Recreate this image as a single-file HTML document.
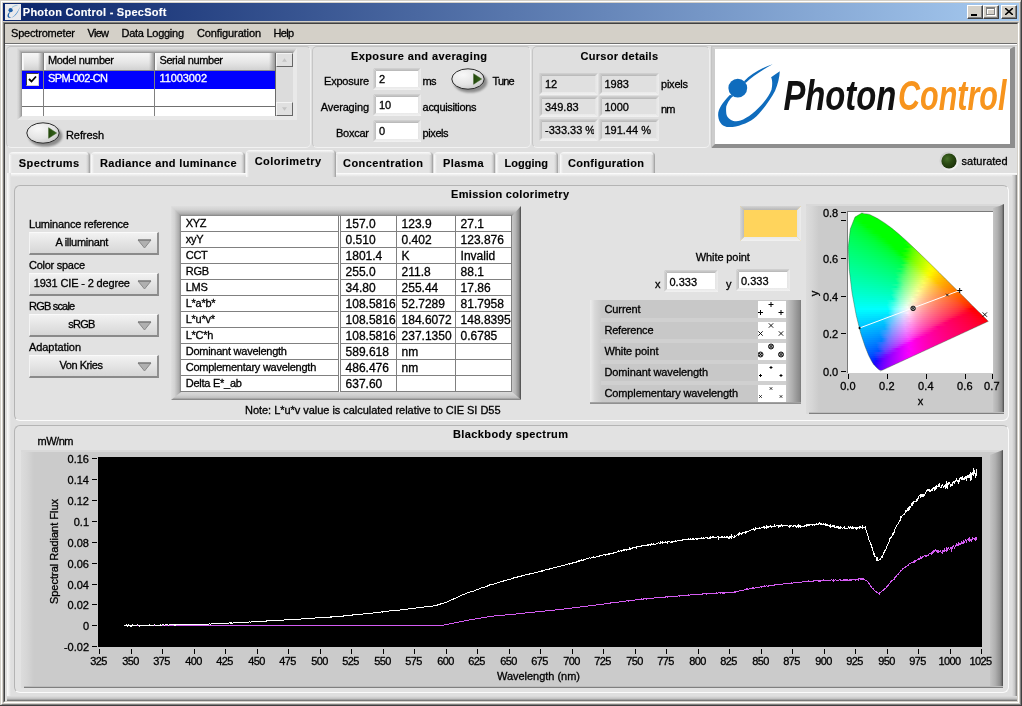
<!DOCTYPE html>
<html><head><meta charset="utf-8"><title>Photon Control - SpecSoft</title>
<style>
html,body{margin:0;padding:0;}
body{width:1022px;height:706px;overflow:hidden;background:#d4d0c8;position:relative;font-family:"Liberation Sans",sans-serif;font-size:11px;}
div,span.t,svg{position:absolute;box-sizing:border-box;}
span.t{white-space:nowrap;line-height:1;-webkit-text-stroke:0.3px currentColor;}
</style></head><body>
<div id="w" style="left:0;top:0;width:1022px;height:706px;will-change:transform;">
<div style="left:0px;top:0px;width:1022px;height:706px;background:#d4d0c8;"></div>
<div style="left:1px;top:1px;width:1020px;height:704px;border-left:1px solid #fff;border-top:1px solid #fff;border-right:1px solid #808080;border-bottom:1px solid #808080;"></div>
<div style="left:0px;top:0px;width:1022px;height:706px;border-right:1px solid #404040;border-bottom:1px solid #404040;"></div>
<div style="left:3px;top:3px;width:1016px;height:18px;background:linear-gradient(to right,#0a246a,#a6caf0);"></div>
<svg style="left:5px;top:4px" width="16" height="16" viewBox="0 0 16 16"><rect width="16" height="16" fill="#e9e9ec"/><circle cx="5.6" cy="6.2" r="2.1" fill="#1d5fa8"/><path d="M4.2 8.2 C1.5 11 1.8 14.6 6.5 13.8 C3.5 13.6 3.2 11 5 8.6 Z" fill="#1d5fa8"/><path d="M6.5 13.8 C11 12 14 7 14.8 3 C13 7.5 10.5 11.2 6.5 13.8 Z" fill="#3a86c8"/><path d="M7 3.4 C9 1.8 11 1.4 12.4 1.3" stroke="#5aa8d8" stroke-width="0.6" fill="none"/></svg>
<div style="left:967px;top:5px;width:16px;height:14px;background:#d4d0c8;border-left:1px solid #fff;border-top:1px solid #fff;border-right:1px solid #404040;border-bottom:1px solid #404040;"></div>
<div style="left:968px;top:6px;width:14px;height:12px;border-right:1px solid #808080;border-bottom:1px solid #808080;"></div>
<div style="left:971px;top:14px;width:6px;height:2px;background:#000;"></div>
<div style="left:983px;top:5px;width:16px;height:14px;background:#d4d0c8;border-left:1px solid #fff;border-top:1px solid #fff;border-right:1px solid #404040;border-bottom:1px solid #404040;"></div>
<div style="left:984px;top:6px;width:14px;height:12px;border-right:1px solid #808080;border-bottom:1px solid #808080;"></div>
<div style="left:987px;top:8px;width:9px;height:8px;border:1px solid #fff;border-top:2px solid #fff;"></div>
<div style="left:986px;top:7px;width:9px;height:8px;border:1px solid #808080;border-top:2px solid #808080;"></div>
<div style="left:1001px;top:5px;width:16px;height:14px;background:#d4d0c8;border-left:1px solid #fff;border-top:1px solid #fff;border-right:1px solid #404040;border-bottom:1px solid #404040;"></div>
<div style="left:1002px;top:6px;width:14px;height:12px;border-right:1px solid #808080;border-bottom:1px solid #808080;"></div>
<svg style="left:1005px;top:8px" width="8" height="7" viewBox="0 0 8 7"><path d="M0 0 L8 7 M8 0 L0 7" stroke="#000" stroke-width="1.6" fill="none"/></svg>
<div style="left:3px;top:22px;width:1016px;height:681px;border-left:1px solid #808080;border-top:1px solid #808080;border-right:1px solid #fff;border-bottom:1px solid #fff;"></div>
<div style="left:4px;top:23px;width:1014px;height:679px;border-left:1px solid #404040;border-top:1px solid #404040;border-right:1px solid #d4d0c8;border-bottom:1px solid #d4d0c8;"></div>
<div style="left:5px;top:24px;width:1012px;height:19px;background:#d4d0c8;"></div>
<div style="left:5px;top:43px;width:1012px;height:658px;background:#dfdfdf;"></div>
<div style="left:5px;top:43px;width:1012px;height:1px;background:#6e6e6e;"></div>
<div style="left:5px;top:44px;width:1012px;height:1px;background:#fff;"></div>
<div style="left:5px;top:45px;width:1012px;height:1px;background:#cfcfcf;"></div>
<div style="left:6px;top:46px;width:305px;height:102px;background:#dfdfdf;border-radius:5px;border-left:1px solid #c6c6c6;border-top:1px solid #c2c2c2;border-right:1px solid #efefef;border-bottom:1px solid #f2f2f2;"></div>
<div style="left:312px;top:46px;width:219px;height:102px;background:#dfdfdf;border-radius:5px;border-left:1px solid #c6c6c6;border-top:1px solid #c2c2c2;border-right:1px solid #efefef;border-bottom:1px solid #f2f2f2;"></div>
<div style="left:532px;top:46px;width:178px;height:102px;background:#dfdfdf;border-radius:5px;border-left:1px solid #c6c6c6;border-top:1px solid #c2c2c2;border-right:1px solid #efefef;border-bottom:1px solid #f2f2f2;"></div>
<div style="left:17px;top:48px;width:280px;height:72px;background:#e9e9e9;"></div>
<div style="left:17px;top:48px;width:280px;height:5px;background:linear-gradient(to bottom,#dcdcdc 0,#cfcfcf 35%,#adadad 75%,#8e8e8e 100%);clip-path:polygon(0 0,100% 0,calc(100% - 4px) 100%,0 100%);"></div>
<div style="left:17px;top:48px;width:5px;height:72px;background:linear-gradient(to right,#dcdcdc 0,#cfcfcf 35%,#adadad 75%,#8e8e8e 100%);clip-path:polygon(0 0,100% 5px,100% calc(100% - 4px),0 100%);"></div>
<div style="left:22px;top:53px;width:253px;height:63px;background:#fff;overflow:hidden;"><div style="left:0;top:0;width:253px;height:18px;background:linear-gradient(to bottom,#f6f6f6,#e6e6e6 55%,#d2d2d2);border-bottom:1px solid #8a8a8a;"></div><div style="left:0;top:18px;width:253px;height:18px;background:#0000ff;"></div><div style="left:0;top:53px;width:253px;height:1px;background:#707070;"></div><div style="left:21px;top:0;width:1px;height:63px;background:#808080;"></div><div style="left:132px;top:0;width:1px;height:63px;background:#808080;"></div><div style="left:0;top:0;width:2px;height:17px;background:linear-gradient(to right,#fff,#f0f0f0);"></div><div style="left:22px;top:0;width:2px;height:17px;background:linear-gradient(to right,#fff,#f0f0f0);"></div><div style="left:133px;top:0;width:2px;height:17px;background:linear-gradient(to right,#fff,#f0f0f0);"></div><div style="left:127px;top:0;width:5px;height:17px;background:linear-gradient(to right,rgba(150,150,150,0),#9a9a9a);"></div><div style="left:16px;top:0;width:5px;height:17px;background:linear-gradient(to right,rgba(150,150,150,0),#9a9a9a);"></div><div style="left:247px;top:0;width:6px;height:17px;background:linear-gradient(to right,rgba(150,150,150,0),#9a9a9a);"></div></div>
<div style="left:275px;top:53px;width:1px;height:63px;background:#6a6a6a;"></div>
<div style="left:26px;top:73px;width:13px;height:13px;background:#fff;border:1px solid #404040;border-right-color:#d4d0c8;border-bottom-color:#d4d0c8;"></div>
<svg style="left:28px;top:75px" width="9" height="9" viewBox="0 0 9 9"><path d="M1 4 L3.5 6.5 L8 1.5" stroke="#000" stroke-width="1.8" fill="none"/></svg>
<div style="left:276px;top:53px;width:17px;height:63px;background:#dcdcdc;"></div>
<div style="left:276px;top:53px;width:17px;height:14px;background:#e0e0e0;border-top:1px solid #f4f4f4;border-left:1px solid #f4f4f4;border-right:1px solid #666;border-bottom:1px solid #666;"></div>
<svg style="left:282px;top:58px" width="5" height="4" viewBox="0 0 6 4"><path d="M0 4 L3 0 L6 4 Z" fill="#c4c4c4"/></svg>
<div style="left:276px;top:102px;width:17px;height:14px;background:#e0e0e0;border-top:1px solid #f4f4f4;border-left:1px solid #f4f4f4;border-right:1px solid #666;border-bottom:1px solid #666;"></div>
<svg style="left:282px;top:107px" width="5" height="4" viewBox="0 0 6 4"><path d="M0 0 L3 4 L6 0 Z" fill="#c4c4c4"/></svg>
<svg style="left:20.6px;top:117.7px" width="46" height="32" viewBox="0 0 46 32">
<defs><radialGradient id="rb42" cx="0.35" cy="0.3" r="0.8"><stop offset="0" stop-color="#f8f8f8"/><stop offset="0.6" stop-color="#e4e4e4"/><stop offset="1" stop-color="#c4c4c4"/></radialGradient>
<filter id="bl42" x="-20%" y="-20%" width="140%" height="140%"><feGaussianBlur stdDeviation="1.3"/></filter>
<linearGradient id="tg42" x1="0" x2="1"><stop offset="0" stop-color="#23460c"/><stop offset="1" stop-color="#37681c"/></linearGradient></defs>
<ellipse cx="24.3" cy="17.8" rx="17" ry="10.8" fill="#777" opacity="0.8" filter="url(#bl42)"/>
<ellipse cx="22" cy="15" rx="16.2" ry="10.2" fill="url(#rb42)" stroke="#2a2a2a" stroke-width="1"/>
<path d="M27.600 9.700 L35.600 15 L27.600 20.300 Z" fill="url(#tg42)" stroke="#2c5414" stroke-width="0.5" stroke-linejoin="round"/>
</svg>
<div style="left:373px;top:68px;width:48px;height:22px;background:#fff;"></div>
<div style="left:373px;top:87px;width:48px;height:3px;background:linear-gradient(to bottom,#e9e9e9,#f1f1f1);clip-path:polygon(3px 0,calc(100% - 3px) 0,100% 100%,0 100%);"></div>
<div style="left:418px;top:68px;width:3px;height:22px;background:linear-gradient(to right,#e4e4e4,#ececec);clip-path:polygon(0 3px,100% 0,100% 100%,0 calc(100% - 3px));"></div>
<div style="left:373px;top:68px;width:48px;height:3px;background:linear-gradient(to bottom,#d4d4d4,#b6b6b6);clip-path:polygon(0 0,100% 0,calc(100% - 3px) 100%,3px 100%);"></div>
<div style="left:373px;top:68px;width:3px;height:22px;background:linear-gradient(to right,#d8d8d8,#bcbcbc);clip-path:polygon(0 0,100% 3px,100% calc(100% - 3px),0 100%);"></div>
<div style="left:373px;top:94px;width:48px;height:22px;background:#fff;"></div>
<div style="left:373px;top:113px;width:48px;height:3px;background:linear-gradient(to bottom,#e9e9e9,#f1f1f1);clip-path:polygon(3px 0,calc(100% - 3px) 0,100% 100%,0 100%);"></div>
<div style="left:418px;top:94px;width:3px;height:22px;background:linear-gradient(to right,#e4e4e4,#ececec);clip-path:polygon(0 3px,100% 0,100% 100%,0 calc(100% - 3px));"></div>
<div style="left:373px;top:94px;width:48px;height:3px;background:linear-gradient(to bottom,#d4d4d4,#b6b6b6);clip-path:polygon(0 0,100% 0,calc(100% - 3px) 100%,3px 100%);"></div>
<div style="left:373px;top:94px;width:3px;height:22px;background:linear-gradient(to right,#d8d8d8,#bcbcbc);clip-path:polygon(0 0,100% 3px,100% calc(100% - 3px),0 100%);"></div>
<div style="left:373px;top:120px;width:48px;height:22px;background:#fff;"></div>
<div style="left:373px;top:139px;width:48px;height:3px;background:linear-gradient(to bottom,#e9e9e9,#f1f1f1);clip-path:polygon(3px 0,calc(100% - 3px) 0,100% 100%,0 100%);"></div>
<div style="left:418px;top:120px;width:3px;height:22px;background:linear-gradient(to right,#e4e4e4,#ececec);clip-path:polygon(0 3px,100% 0,100% 100%,0 calc(100% - 3px));"></div>
<div style="left:373px;top:120px;width:48px;height:3px;background:linear-gradient(to bottom,#d4d4d4,#b6b6b6);clip-path:polygon(0 0,100% 0,calc(100% - 3px) 100%,3px 100%);"></div>
<div style="left:373px;top:120px;width:3px;height:22px;background:linear-gradient(to right,#d8d8d8,#bcbcbc);clip-path:polygon(0 0,100% 3px,100% calc(100% - 3px),0 100%);"></div>
<svg style="left:445.7px;top:64.2px" width="46" height="32" viewBox="0 0 46 32">
<defs><radialGradient id="rb467" cx="0.35" cy="0.3" r="0.8"><stop offset="0" stop-color="#f8f8f8"/><stop offset="0.6" stop-color="#e4e4e4"/><stop offset="1" stop-color="#c4c4c4"/></radialGradient>
<filter id="bl467" x="-20%" y="-20%" width="140%" height="140%"><feGaussianBlur stdDeviation="1.3"/></filter>
<linearGradient id="tg467" x1="0" x2="1"><stop offset="0" stop-color="#23460c"/><stop offset="1" stop-color="#37681c"/></linearGradient></defs>
<ellipse cx="24.3" cy="17.8" rx="17" ry="10.8" fill="#777" opacity="0.8" filter="url(#bl467)"/>
<ellipse cx="22" cy="15" rx="16.2" ry="10.2" fill="url(#rb467)" stroke="#2a2a2a" stroke-width="1"/>
<path d="M27.600 9.700 L35.600 15 L27.600 20.300 Z" fill="url(#tg467)" stroke="#2c5414" stroke-width="0.5" stroke-linejoin="round"/>
</svg>
<div style="left:539px;top:73px;width:59px;height:22px;background:#e0e0e0;"></div>
<div style="left:539px;top:92px;width:59px;height:3px;background:linear-gradient(to bottom,#e9e9e9,#f1f1f1);clip-path:polygon(3px 0,calc(100% - 3px) 0,100% 100%,0 100%);"></div>
<div style="left:595px;top:73px;width:3px;height:22px;background:linear-gradient(to right,#e4e4e4,#ececec);clip-path:polygon(0 3px,100% 0,100% 100%,0 calc(100% - 3px));"></div>
<div style="left:539px;top:73px;width:59px;height:3px;background:linear-gradient(to bottom,#d4d4d4,#b6b6b6);clip-path:polygon(0 0,100% 0,calc(100% - 3px) 100%,3px 100%);"></div>
<div style="left:539px;top:73px;width:3px;height:22px;background:linear-gradient(to right,#d8d8d8,#bcbcbc);clip-path:polygon(0 0,100% 3px,100% calc(100% - 3px),0 100%);"></div>
<div style="left:599px;top:73px;width:60px;height:22px;background:#e0e0e0;"></div>
<div style="left:599px;top:92px;width:60px;height:3px;background:linear-gradient(to bottom,#e9e9e9,#f1f1f1);clip-path:polygon(3px 0,calc(100% - 3px) 0,100% 100%,0 100%);"></div>
<div style="left:656px;top:73px;width:3px;height:22px;background:linear-gradient(to right,#e4e4e4,#ececec);clip-path:polygon(0 3px,100% 0,100% 100%,0 calc(100% - 3px));"></div>
<div style="left:599px;top:73px;width:60px;height:3px;background:linear-gradient(to bottom,#d4d4d4,#b6b6b6);clip-path:polygon(0 0,100% 0,calc(100% - 3px) 100%,3px 100%);"></div>
<div style="left:599px;top:73px;width:3px;height:22px;background:linear-gradient(to right,#d8d8d8,#bcbcbc);clip-path:polygon(0 0,100% 3px,100% calc(100% - 3px),0 100%);"></div>
<div style="left:543px;top:76px;width:51px;height:16px;overflow:hidden;"><span class="t" style="left:2px;top:3px;font-size:11px;">12</span></div>
<div style="left:539px;top:96px;width:59px;height:21px;background:#e0e0e0;"></div>
<div style="left:539px;top:114px;width:59px;height:3px;background:linear-gradient(to bottom,#e9e9e9,#f1f1f1);clip-path:polygon(3px 0,calc(100% - 3px) 0,100% 100%,0 100%);"></div>
<div style="left:595px;top:96px;width:3px;height:21px;background:linear-gradient(to right,#e4e4e4,#ececec);clip-path:polygon(0 3px,100% 0,100% 100%,0 calc(100% - 3px));"></div>
<div style="left:539px;top:96px;width:59px;height:3px;background:linear-gradient(to bottom,#d4d4d4,#b6b6b6);clip-path:polygon(0 0,100% 0,calc(100% - 3px) 100%,3px 100%);"></div>
<div style="left:539px;top:96px;width:3px;height:21px;background:linear-gradient(to right,#d8d8d8,#bcbcbc);clip-path:polygon(0 0,100% 3px,100% calc(100% - 3px),0 100%);"></div>
<div style="left:599px;top:96px;width:60px;height:21px;background:#e0e0e0;"></div>
<div style="left:599px;top:114px;width:60px;height:3px;background:linear-gradient(to bottom,#e9e9e9,#f1f1f1);clip-path:polygon(3px 0,calc(100% - 3px) 0,100% 100%,0 100%);"></div>
<div style="left:656px;top:96px;width:3px;height:21px;background:linear-gradient(to right,#e4e4e4,#ececec);clip-path:polygon(0 3px,100% 0,100% 100%,0 calc(100% - 3px));"></div>
<div style="left:599px;top:96px;width:60px;height:3px;background:linear-gradient(to bottom,#d4d4d4,#b6b6b6);clip-path:polygon(0 0,100% 0,calc(100% - 3px) 100%,3px 100%);"></div>
<div style="left:599px;top:96px;width:3px;height:21px;background:linear-gradient(to right,#d8d8d8,#bcbcbc);clip-path:polygon(0 0,100% 3px,100% calc(100% - 3px),0 100%);"></div>
<div style="left:543px;top:99px;width:51px;height:16px;overflow:hidden;"><span class="t" style="left:2px;top:3px;font-size:11px;">349.83</span></div>
<div style="left:539px;top:119px;width:59px;height:22px;background:#e0e0e0;"></div>
<div style="left:539px;top:138px;width:59px;height:3px;background:linear-gradient(to bottom,#e9e9e9,#f1f1f1);clip-path:polygon(3px 0,calc(100% - 3px) 0,100% 100%,0 100%);"></div>
<div style="left:595px;top:119px;width:3px;height:22px;background:linear-gradient(to right,#e4e4e4,#ececec);clip-path:polygon(0 3px,100% 0,100% 100%,0 calc(100% - 3px));"></div>
<div style="left:539px;top:119px;width:59px;height:3px;background:linear-gradient(to bottom,#d4d4d4,#b6b6b6);clip-path:polygon(0 0,100% 0,calc(100% - 3px) 100%,3px 100%);"></div>
<div style="left:539px;top:119px;width:3px;height:22px;background:linear-gradient(to right,#d8d8d8,#bcbcbc);clip-path:polygon(0 0,100% 3px,100% calc(100% - 3px),0 100%);"></div>
<div style="left:599px;top:119px;width:60px;height:22px;background:#e0e0e0;"></div>
<div style="left:599px;top:138px;width:60px;height:3px;background:linear-gradient(to bottom,#e9e9e9,#f1f1f1);clip-path:polygon(3px 0,calc(100% - 3px) 0,100% 100%,0 100%);"></div>
<div style="left:656px;top:119px;width:3px;height:22px;background:linear-gradient(to right,#e4e4e4,#ececec);clip-path:polygon(0 3px,100% 0,100% 100%,0 calc(100% - 3px));"></div>
<div style="left:599px;top:119px;width:60px;height:3px;background:linear-gradient(to bottom,#d4d4d4,#b6b6b6);clip-path:polygon(0 0,100% 0,calc(100% - 3px) 100%,3px 100%);"></div>
<div style="left:599px;top:119px;width:3px;height:22px;background:linear-gradient(to right,#d8d8d8,#bcbcbc);clip-path:polygon(0 0,100% 3px,100% calc(100% - 3px),0 100%);"></div>
<div style="left:543px;top:122px;width:51px;height:16px;overflow:hidden;"><span class="t" style="left:2px;top:3px;font-size:11px;">-333.33 %</span></div>
<div style="left:711px;top:46px;width:304px;height:102px;background:#fff;border-style:solid;border-width:3px 5px 4px 4px;border-color:#d6d6d6 #8e8e8e #8e8e8e #cdcdcd;"></div>
<div style="left:711px;top:46px;width:304px;height:102px;border-top:1px solid #c4c4c4;border-left:1px solid #c4c4c4;"></div>
<svg style="left:715px;top:49px" width="295" height="95" viewBox="715 49 295 95">
<path d="M729.8 95 C722 103 717.5 110 718.2 116 C718.8 123 723 127 729 127.100 C737 127.300 747 123.500 753.600 118.800 C762 112 770 100 775 90.900 C778 84 779.500 77 779.800 71.200 L771.100 77.200 C772.500 80 772.500 85 771.500 89.700 C769.500 95 767 98 764.300 101.600 C760 107 756 110.500 752.400 113.500 C748 117 744 119.300 740.500 120.600 C737 121.800 733.500 121.500 731 120 C728 118 726.500 116 726.300 113.500 C726 110.500 726 108.500 726.300 106.300 C727.500 103 729 100.500 731 98 L734 95.600 Z" fill="#0f6cbd"/>
<circle cx="737.800" cy="88.100" r="9.400" fill="#0f6cbd"/>
<path d="M744 81.200 C751 74.300 761 67.800 772.600 64.300 C763 69.500 753 75.700 745.600 82.900 Z" fill="#0f6cbd"/>
<text x="783.400" y="110.300" font-family="Liberation Sans, sans-serif" font-style="italic" font-weight="bold" font-size="43" fill="#111" textLength="113" lengthAdjust="spacingAndGlyphs">Photon</text>
<text x="898" y="110.300" font-family="Liberation Sans, sans-serif" font-style="italic" font-weight="bold" font-size="43" fill="#f7941d" textLength="108.5" lengthAdjust="spacingAndGlyphs">Control</text>
</svg>
<svg style="left:939px;top:151px" width="20" height="20" viewBox="0 0 20 20"><defs><radialGradient id="led" cx="0.38" cy="0.35" r="0.65"><stop offset="0" stop-color="#47702a"/><stop offset="0.5" stop-color="#2c4c14"/><stop offset="1" stop-color="#1c330a"/></radialGradient>
<linearGradient id="ledr" x1="0" y1="0" x2="1" y2="1"><stop offset="0" stop-color="#c4c4c4"/><stop offset="1" stop-color="#fafafa"/></linearGradient></defs>
<circle cx="10" cy="10" r="9.600" fill="url(#ledr)"/><circle cx="10" cy="10" r="7.600" fill="url(#led)"/></svg>
<div style="left:7px;top:173px;width:1010px;height:528px;background:#dfdfdf;"></div>
<div style="left:7px;top:173px;width:1010px;height:4px;background:linear-gradient(to bottom,#fff,#f0f0f0 40%,#dfdfdf);"></div>
<div style="left:7px;top:173px;width:4px;height:525px;background:linear-gradient(to right,#fbfbfb,#dfdfdf);"></div>
<div style="left:1012px;top:175px;width:5px;height:526px;background:linear-gradient(to right,#dfdfdf,#c4c4c4 55%,#8c8c8c 90%,#555);"></div>
<div style="left:7px;top:696px;width:1010px;height:5px;background:linear-gradient(to bottom,#dfdfdf,#c4c4c4 50%,#8c8c8c 85%,#555);"></div>
<div style="left:9px;top:152px;width:81px;height:21px;border-radius:4px 4px 0 0;background:linear-gradient(to right,#fbfbfb 0,#e4e4e4 3px,#e4e4e4 calc(100% - 4px),#cfcfcf calc(100% - 2px),#9a9a9a 100%);"></div>
<div style="left:10px;top:152px;width:78px;height:3px;background:linear-gradient(to bottom,#fbfbfb,#e4e4e4);border-radius:4px 4px 0 0;"></div>
<div style="left:91px;top:152px;width:154px;height:21px;border-radius:4px 4px 0 0;background:linear-gradient(to right,#fbfbfb 0,#e4e4e4 3px,#e4e4e4 calc(100% - 4px),#cfcfcf calc(100% - 2px),#9a9a9a 100%);"></div>
<div style="left:92px;top:152px;width:151px;height:3px;background:linear-gradient(to bottom,#fbfbfb,#e4e4e4);border-radius:4px 4px 0 0;"></div>
<div style="left:335px;top:152px;width:97.5px;height:21px;border-radius:4px 4px 0 0;background:linear-gradient(to right,#fbfbfb 0,#e4e4e4 3px,#e4e4e4 calc(100% - 4px),#cfcfcf calc(100% - 2px),#9a9a9a 100%);"></div>
<div style="left:336px;top:152px;width:94.5px;height:3px;background:linear-gradient(to bottom,#fbfbfb,#e4e4e4);border-radius:4px 4px 0 0;"></div>
<div style="left:434px;top:152px;width:60.5px;height:21px;border-radius:4px 4px 0 0;background:linear-gradient(to right,#fbfbfb 0,#e4e4e4 3px,#e4e4e4 calc(100% - 4px),#cfcfcf calc(100% - 2px),#9a9a9a 100%);"></div>
<div style="left:435px;top:152px;width:57.5px;height:3px;background:linear-gradient(to bottom,#fbfbfb,#e4e4e4);border-radius:4px 4px 0 0;"></div>
<div style="left:496px;top:152px;width:62px;height:21px;border-radius:4px 4px 0 0;background:linear-gradient(to right,#fbfbfb 0,#e4e4e4 3px,#e4e4e4 calc(100% - 4px),#cfcfcf calc(100% - 2px),#9a9a9a 100%);"></div>
<div style="left:497px;top:152px;width:59px;height:3px;background:linear-gradient(to bottom,#fbfbfb,#e4e4e4);border-radius:4px 4px 0 0;"></div>
<div style="left:559.5px;top:152px;width:95.0px;height:21px;border-radius:4px 4px 0 0;background:linear-gradient(to right,#fbfbfb 0,#e4e4e4 3px,#e4e4e4 calc(100% - 4px),#cfcfcf calc(100% - 2px),#9a9a9a 100%);"></div>
<div style="left:560.5px;top:152px;width:92.0px;height:3px;background:linear-gradient(to bottom,#fbfbfb,#e4e4e4);border-radius:4px 4px 0 0;"></div>
<div style="left:246px;top:150px;width:90px;height:27px;background:#dfdfdf;border-radius:4px 4px 0 0;"></div>
<div style="left:246px;top:150px;width:90px;height:27px;border-radius:4px 4px 0 0;background:linear-gradient(to right,#fbfbfb 0,#dfdfdf 3px,#dfdfdf calc(100% - 4px),#cfcfcf calc(100% - 2px),#9a9a9a 100%);"></div>
<div style="left:247px;top:150px;width:87px;height:3px;background:linear-gradient(to bottom,#fbfbfb,#dfdfdf);border-radius:4px 4px 0 0;"></div>
<div style="left:14px;top:185px;width:995px;height:236px;background:#e2e2e2;border-radius:6px;border-left:1px solid #b4b4b4;border-top:1px solid #b4b4b4;border-right:1px solid #fbfbfb;border-bottom:1px solid #fbfbfb;"></div>
<div style="left:14px;top:425px;width:995px;height:268px;background:#e2e2e2;border-radius:6px;border-left:1px solid #b4b4b4;border-top:1px solid #b4b4b4;border-right:1px solid #fbfbfb;border-bottom:1px solid #fbfbfb;"></div>
<div style="left:29px;top:232px;width:130px;height:23px;background:linear-gradient(to bottom,#f2f2f2,#e4e4e4 50%,#d6d6d6);border-top:1px solid #fafafa;border-left:1px solid #f4f4f4;border-right:2px solid #909090;border-bottom:2px solid #8a8a8a;"></div>
<svg style="left:137px;top:239px" width="15" height="10" viewBox="0 0 15 10"><path d="M1 1 L14 1 L7.500 9 Z" fill="#b0b0b0" stroke="#8a8a8a" stroke-width="1"/><path d="M1 1 L14 1" stroke="#707070" stroke-width="1"/></svg>
<div style="left:29px;top:273px;width:130px;height:23px;background:linear-gradient(to bottom,#f2f2f2,#e4e4e4 50%,#d6d6d6);border-top:1px solid #fafafa;border-left:1px solid #f4f4f4;border-right:2px solid #909090;border-bottom:2px solid #8a8a8a;"></div>
<svg style="left:137px;top:280px" width="15" height="10" viewBox="0 0 15 10"><path d="M1 1 L14 1 L7.500 9 Z" fill="#b0b0b0" stroke="#8a8a8a" stroke-width="1"/><path d="M1 1 L14 1" stroke="#707070" stroke-width="1"/></svg>
<div style="left:29px;top:314px;width:130px;height:23px;background:linear-gradient(to bottom,#f2f2f2,#e4e4e4 50%,#d6d6d6);border-top:1px solid #fafafa;border-left:1px solid #f4f4f4;border-right:2px solid #909090;border-bottom:2px solid #8a8a8a;"></div>
<svg style="left:137px;top:321px" width="15" height="10" viewBox="0 0 15 10"><path d="M1 1 L14 1 L7.500 9 Z" fill="#b0b0b0" stroke="#8a8a8a" stroke-width="1"/><path d="M1 1 L14 1" stroke="#707070" stroke-width="1"/></svg>
<div style="left:29px;top:355px;width:130px;height:23px;background:linear-gradient(to bottom,#f2f2f2,#e4e4e4 50%,#d6d6d6);border-top:1px solid #fafafa;border-left:1px solid #f4f4f4;border-right:2px solid #909090;border-bottom:2px solid #8a8a8a;"></div>
<svg style="left:137px;top:362px" width="15" height="10" viewBox="0 0 15 10"><path d="M1 1 L14 1 L7.500 9 Z" fill="#b0b0b0" stroke="#8a8a8a" stroke-width="1"/><path d="M1 1 L14 1" stroke="#707070" stroke-width="1"/></svg>
<div style="left:171px;top:206px;width:350px;height:194px;background:#cdcdcd;"></div>
<div style="left:171px;top:206px;width:350px;height:10px;background:linear-gradient(to bottom,#dedede 0,#d2d2d2 35%,#b0b0b0 75%,#8c8c8c 100%);"></div>
<div style="left:171px;top:206px;width:10px;height:194px;background:linear-gradient(to right,#dedede 0,#d2d2d2 35%,#b0b0b0 75%,#8c8c8c 100%);clip-path:polygon(0 0,100% 10px,100% 100%,0 100%);"></div>
<div style="left:512px;top:206px;width:9px;height:194px;background:linear-gradient(to right,#c8c8c8,#b4b4b4 40%,#8e8e8e 75%,#666 90%,#444 100%);clip-path:polygon(0 10px,100% 0,100% 100%,0 calc(100% - 8px));"></div>
<div style="left:171px;top:392px;width:350px;height:8px;background:linear-gradient(to bottom,#dadada,#d0d0d0 40%,#c0c0c0 70%,#7c7c7c 100%);clip-path:polygon(10px 0,calc(100% - 9px) 0,100% 100%,0 100%);"></div>
<div style="left:180px;top:215px;width:332px;height:177px;overflow:hidden;background:#808080;"><div style="left:0;top:0;width:332px;height:177px;background:#808080;"></div><div style="left:1px;top:1px;width:157px;height:15px;background:#fff;overflow:hidden;"><span class="t" style="left:4.7px;top:2px;font-size:11px;letter-spacing:-0.25px;">XYZ</span></div><div style="left:161px;top:1px;width:55px;height:15px;background:#fff;overflow:hidden;"><span class="t" style="left:4.6px;top:2px;font-size:12px;">157.0</span></div><div style="left:217px;top:1px;width:58px;height:15px;background:#fff;overflow:hidden;"><span class="t" style="left:4.6px;top:2px;font-size:12px;">123.9</span></div><div style="left:276px;top:1px;width:55px;height:15px;background:#fff;overflow:hidden;"><span class="t" style="left:4.6px;top:2px;font-size:12px;">27.1</span></div><div style="left:1px;top:17px;width:157px;height:15px;background:#fff;overflow:hidden;"><span class="t" style="left:4.7px;top:2px;font-size:11px;letter-spacing:-0.25px;">xyY</span></div><div style="left:161px;top:17px;width:55px;height:15px;background:#fff;overflow:hidden;"><span class="t" style="left:4.6px;top:2px;font-size:12px;">0.510</span></div><div style="left:217px;top:17px;width:58px;height:15px;background:#fff;overflow:hidden;"><span class="t" style="left:4.6px;top:2px;font-size:12px;">0.402</span></div><div style="left:276px;top:17px;width:55px;height:15px;background:#fff;overflow:hidden;"><span class="t" style="left:4.6px;top:2px;font-size:12px;">123.876</span></div><div style="left:1px;top:33px;width:157px;height:15px;background:#fff;overflow:hidden;"><span class="t" style="left:4.7px;top:2px;font-size:11px;letter-spacing:-0.25px;">CCT</span></div><div style="left:161px;top:33px;width:55px;height:15px;background:#fff;overflow:hidden;"><span class="t" style="left:4.6px;top:2px;font-size:12px;">1801.4</span></div><div style="left:217px;top:33px;width:58px;height:15px;background:#fff;overflow:hidden;"><span class="t" style="left:4.6px;top:2px;font-size:12px;">K</span></div><div style="left:276px;top:33px;width:55px;height:15px;background:#fff;overflow:hidden;"><span class="t" style="left:4.6px;top:2px;font-size:12px;">Invalid</span></div><div style="left:1px;top:49px;width:157px;height:15px;background:#fff;overflow:hidden;"><span class="t" style="left:4.7px;top:2px;font-size:11px;letter-spacing:-0.25px;">RGB</span></div><div style="left:161px;top:49px;width:55px;height:15px;background:#fff;overflow:hidden;"><span class="t" style="left:4.6px;top:2px;font-size:12px;">255.0</span></div><div style="left:217px;top:49px;width:58px;height:15px;background:#fff;overflow:hidden;"><span class="t" style="left:4.6px;top:2px;font-size:12px;">211.8</span></div><div style="left:276px;top:49px;width:55px;height:15px;background:#fff;overflow:hidden;"><span class="t" style="left:4.6px;top:2px;font-size:12px;">88.1</span></div><div style="left:1px;top:65px;width:157px;height:15px;background:#fff;overflow:hidden;"><span class="t" style="left:4.7px;top:2px;font-size:11px;letter-spacing:-0.25px;">LMS</span></div><div style="left:161px;top:65px;width:55px;height:15px;background:#fff;overflow:hidden;"><span class="t" style="left:4.6px;top:2px;font-size:12px;">34.80</span></div><div style="left:217px;top:65px;width:58px;height:15px;background:#fff;overflow:hidden;"><span class="t" style="left:4.6px;top:2px;font-size:12px;">255.44</span></div><div style="left:276px;top:65px;width:55px;height:15px;background:#fff;overflow:hidden;"><span class="t" style="left:4.6px;top:2px;font-size:12px;">17.86</span></div><div style="left:1px;top:81px;width:157px;height:15px;background:#fff;overflow:hidden;"><span class="t" style="left:4.7px;top:2px;font-size:11px;letter-spacing:-0.25px;">L*a*b*</span></div><div style="left:161px;top:81px;width:55px;height:15px;background:#fff;overflow:hidden;"><span class="t" style="left:4.6px;top:2px;font-size:12px;">108.5816</span></div><div style="left:217px;top:81px;width:58px;height:15px;background:#fff;overflow:hidden;"><span class="t" style="left:4.6px;top:2px;font-size:12px;">52.7289</span></div><div style="left:276px;top:81px;width:55px;height:15px;background:#fff;overflow:hidden;"><span class="t" style="left:4.6px;top:2px;font-size:12px;">81.7958</span></div><div style="left:1px;top:97px;width:157px;height:15px;background:#fff;overflow:hidden;"><span class="t" style="left:4.7px;top:2px;font-size:11px;letter-spacing:-0.25px;">L*u*v*</span></div><div style="left:161px;top:97px;width:55px;height:15px;background:#fff;overflow:hidden;"><span class="t" style="left:4.6px;top:2px;font-size:12px;">108.5816</span></div><div style="left:217px;top:97px;width:58px;height:15px;background:#fff;overflow:hidden;"><span class="t" style="left:4.6px;top:2px;font-size:12px;">184.6072</span></div><div style="left:276px;top:97px;width:55px;height:15px;background:#fff;overflow:hidden;"><span class="t" style="left:4.6px;top:2px;font-size:12px;">148.8395</span></div><div style="left:1px;top:113px;width:157px;height:15px;background:#fff;overflow:hidden;"><span class="t" style="left:4.7px;top:2px;font-size:11px;letter-spacing:-0.25px;">L*C*h</span></div><div style="left:161px;top:113px;width:55px;height:15px;background:#fff;overflow:hidden;"><span class="t" style="left:4.6px;top:2px;font-size:12px;">108.5816</span></div><div style="left:217px;top:113px;width:58px;height:15px;background:#fff;overflow:hidden;"><span class="t" style="left:4.6px;top:2px;font-size:12px;">237.1350</span></div><div style="left:276px;top:113px;width:55px;height:15px;background:#fff;overflow:hidden;"><span class="t" style="left:4.6px;top:2px;font-size:12px;">0.6785</span></div><div style="left:1px;top:129px;width:157px;height:15px;background:#fff;overflow:hidden;"><span class="t" style="left:4.7px;top:2px;font-size:11px;letter-spacing:-0.25px;">Dominant wavelength</span></div><div style="left:161px;top:129px;width:55px;height:15px;background:#fff;overflow:hidden;"><span class="t" style="left:4.6px;top:2px;font-size:12px;">589.618</span></div><div style="left:217px;top:129px;width:58px;height:15px;background:#fff;overflow:hidden;"><span class="t" style="left:4.6px;top:2px;font-size:12px;">nm</span></div><div style="left:276px;top:129px;width:55px;height:15px;background:#fff;overflow:hidden;"><span class="t" style="left:4.6px;top:2px;font-size:12px;"></span></div><div style="left:1px;top:145px;width:157px;height:15px;background:#fff;overflow:hidden;"><span class="t" style="left:4.7px;top:2px;font-size:11px;letter-spacing:-0.25px;">Complementary wavelength</span></div><div style="left:161px;top:145px;width:55px;height:15px;background:#fff;overflow:hidden;"><span class="t" style="left:4.6px;top:2px;font-size:12px;">486.476</span></div><div style="left:217px;top:145px;width:58px;height:15px;background:#fff;overflow:hidden;"><span class="t" style="left:4.6px;top:2px;font-size:12px;">nm</span></div><div style="left:276px;top:145px;width:55px;height:15px;background:#fff;overflow:hidden;"><span class="t" style="left:4.6px;top:2px;font-size:12px;"></span></div><div style="left:1px;top:161px;width:157px;height:15px;background:#fff;overflow:hidden;"><span class="t" style="left:4.7px;top:2px;font-size:11px;letter-spacing:-0.25px;">Delta E*_ab</span></div><div style="left:161px;top:161px;width:55px;height:15px;background:#fff;overflow:hidden;"><span class="t" style="left:4.6px;top:2px;font-size:12px;">637.60</span></div><div style="left:217px;top:161px;width:58px;height:15px;background:#fff;overflow:hidden;"><span class="t" style="left:4.6px;top:2px;font-size:12px;"></span></div><div style="left:276px;top:161px;width:55px;height:15px;background:#fff;overflow:hidden;"><span class="t" style="left:4.6px;top:2px;font-size:12px;"></span></div><div style="left:158px;top:0;width:1px;height:177px;background:#808080"></div><div style="left:159px;top:0;width:1px;height:177px;background:#fff"></div></div>
<div style="left:180px;top:215px;width:331px;height:1px;background:#8c8c8c;"></div>
<div style="left:180px;top:215px;width:1px;height:176px;background:#8c8c8c;"></div>
<div style="left:740px;top:206px;width:61px;height:35px;background:#ffd45c;"></div>
<div style="left:740px;top:237px;width:61px;height:4px;background:linear-gradient(to bottom,#e9e9e9,#f1f1f1);clip-path:polygon(4px 0,calc(100% - 4px) 0,100% 100%,0 100%);"></div>
<div style="left:797px;top:206px;width:4px;height:35px;background:linear-gradient(to right,#e4e4e4,#ececec);clip-path:polygon(0 4px,100% 0,100% 100%,0 calc(100% - 4px));"></div>
<div style="left:740px;top:206px;width:61px;height:4px;background:linear-gradient(to bottom,#d4d4d4,#b6b6b6);clip-path:polygon(0 0,100% 0,calc(100% - 4px) 100%,4px 100%);"></div>
<div style="left:740px;top:206px;width:4px;height:35px;background:linear-gradient(to right,#d8d8d8,#bcbcbc);clip-path:polygon(0 0,100% 4px,100% calc(100% - 4px),0 100%);"></div>
<div style="left:664px;top:270px;width:54px;height:22px;background:#fff;"></div>
<div style="left:664px;top:289px;width:54px;height:3px;background:linear-gradient(to bottom,#e9e9e9,#f1f1f1);clip-path:polygon(3px 0,calc(100% - 3px) 0,100% 100%,0 100%);"></div>
<div style="left:715px;top:270px;width:3px;height:22px;background:linear-gradient(to right,#e4e4e4,#ececec);clip-path:polygon(0 3px,100% 0,100% 100%,0 calc(100% - 3px));"></div>
<div style="left:664px;top:270px;width:54px;height:3px;background:linear-gradient(to bottom,#d4d4d4,#b6b6b6);clip-path:polygon(0 0,100% 0,calc(100% - 3px) 100%,3px 100%);"></div>
<div style="left:664px;top:270px;width:3px;height:22px;background:linear-gradient(to right,#d8d8d8,#bcbcbc);clip-path:polygon(0 0,100% 3px,100% calc(100% - 3px),0 100%);"></div>
<div style="left:736px;top:269px;width:54px;height:22px;background:#fff;"></div>
<div style="left:736px;top:288px;width:54px;height:3px;background:linear-gradient(to bottom,#e9e9e9,#f1f1f1);clip-path:polygon(3px 0,calc(100% - 3px) 0,100% 100%,0 100%);"></div>
<div style="left:787px;top:269px;width:3px;height:22px;background:linear-gradient(to right,#e4e4e4,#ececec);clip-path:polygon(0 3px,100% 0,100% 100%,0 calc(100% - 3px));"></div>
<div style="left:736px;top:269px;width:54px;height:3px;background:linear-gradient(to bottom,#d4d4d4,#b6b6b6);clip-path:polygon(0 0,100% 0,calc(100% - 3px) 100%,3px 100%);"></div>
<div style="left:736px;top:269px;width:3px;height:22px;background:linear-gradient(to right,#d8d8d8,#bcbcbc);clip-path:polygon(0 0,100% 3px,100% calc(100% - 3px),0 100%);"></div>
<div style="left:590px;top:300px;width:211px;height:104px;background:#c8c8c8;"></div>
<div style="left:590px;top:300px;width:12px;height:104px;background:linear-gradient(to right,#ececec,#d8d8d8 40%,#c8c8c8);"></div>
<div style="left:786px;top:300px;width:15px;height:104px;background:linear-gradient(to right,#c8c8c8,#b0b0b0 40%,#8a8a8a 90%,#7a7a7a);"></div>
<div style="left:590px;top:402px;width:211px;height:2px;background:linear-gradient(to bottom,#aaa,#888);"></div>
<div style="left:757.5px;top:301px;width:28.5px;height:17px;background:#fff;"></div>
<div style="left:601px;top:318px;width:185px;height:4px;background:#d0d0d0;"></div>
<div style="left:757.5px;top:322px;width:28.5px;height:17px;background:#fff;"></div>
<div style="left:601px;top:339px;width:185px;height:4px;background:#d0d0d0;"></div>
<div style="left:757.5px;top:343px;width:28.5px;height:17px;background:#fff;"></div>
<div style="left:601px;top:360px;width:185px;height:4px;background:#d0d0d0;"></div>
<div style="left:757.5px;top:364px;width:28.5px;height:17px;background:#fff;"></div>
<div style="left:601px;top:381px;width:185px;height:4px;background:#d0d0d0;"></div>
<div style="left:757.5px;top:385px;width:28.5px;height:17px;background:#fff;"></div>
<svg style="left:757.5px;top:300px" width="28.5" height="104" viewBox="757.5 300 28.5 104"><path d="M768.0 304.5 H773.0 M770.5 302.0 V307.0" stroke="#000" stroke-width="1" fill="none"/><path d="M757.5 312.5 H762.5 M760 310.0 V315.0" stroke="#000" stroke-width="1" fill="none"/><path d="M778.0 312.5 H783.0 M780.5 310.0 V315.0" stroke="#000" stroke-width="1" fill="none"/><path d="M768.3 323.3 L772.7 327.7 M772.7 323.3 L768.3 327.7" stroke="#000" stroke-width="0.9" fill="none"/><path d="M757.8 331.3 L762.2 335.7 M762.2 331.3 L757.8 335.7" stroke="#000" stroke-width="0.9" fill="none"/><path d="M778.3 331.3 L782.7 335.7 M782.7 331.3 L778.3 335.7" stroke="#000" stroke-width="0.9" fill="none"/><circle cx="770.5" cy="346.5" r="2.5" fill="#aaa" stroke="#000" stroke-width="0.9"/><path d="M769.0 345.0 L772.0 348.0 M772.0 345.0 L769.0 348.0" stroke="#000" stroke-width="0.8"/><circle cx="760" cy="354.5" r="2.5" fill="#aaa" stroke="#000" stroke-width="0.9"/><path d="M758.5 353.0 L761.5 356.0 M761.5 353.0 L758.5 356.0" stroke="#000" stroke-width="0.8"/><circle cx="780.5" cy="354.5" r="2.5" fill="#aaa" stroke="#000" stroke-width="0.9"/><path d="M779.0 353.0 L782.0 356.0 M782.0 353.0 L779.0 356.0" stroke="#000" stroke-width="0.8"/><path d="M769.0 367.5 H772.0 M770.5 366.0 V369.0" stroke="#000" stroke-width="1" fill="none"/><path d="M758.5 375.5 H761.5 M760 374.0 V377.0" stroke="#000" stroke-width="1" fill="none"/><path d="M779.0 375.5 H782.0 M780.5 374.0 V377.0" stroke="#000" stroke-width="1" fill="none"/><path d="M769.2 387.2 L771.8 389.8 M771.8 387.2 L769.2 389.8" stroke="#000" stroke-width="0.8" fill="none"/><path d="M758.7 395.2 L761.3 397.8 M761.3 395.2 L758.7 397.8" stroke="#000" stroke-width="0.8" fill="none"/><path d="M779.2 395.2 L781.8 397.8 M781.8 395.2 L779.2 397.8" stroke="#000" stroke-width="0.8" fill="none"/></svg>
<div style="left:806px;top:204px;width:198px;height:210px;background:#cbcbcb;"></div>
<div style="left:806px;top:204px;width:13px;height:210px;background:linear-gradient(to right,#dcdcdc,#d6d6d6 45%,#cbcbcb);"></div>
<div style="left:806px;top:204px;width:198px;height:2px;background:#d9d9d9;clip-path:polygon(0 0,100% 0,calc(100% - 2px) 100%,0 100%);"></div>
<div style="left:993px;top:204px;width:11px;height:210px;background:linear-gradient(to right,#c4c4c4,#b0b0b0 40%,#8e8e8e 78%,#6a6a6a 92%,#444 100%);clip-path:polygon(100% 0,100% 100%,0 100%,0 4px,60% 2px);"></div>
<div style="left:809px;top:412px;width:195px;height:2px;background:linear-gradient(to bottom,#bcbcbc 50%,#808080 50%);"></div>
<div style="left:847px;top:211px;width:146px;height:162px;background:#fff;border-left:1px solid #7a7a7a;border-top:1px solid #7a7a7a;"></div>
<svg style="left:842px;top:204px" width="164" height="176" viewBox="842 204 164 176"><defs><clipPath id="loc"><polygon points="880.9,370.8 880.9,370.9 880.8,370.9 880.7,370.9 880.4,370.8 879.9,370.5 879.1,369.7 877.6,368.4 876.5,367.5 875.2,366.1 873.5,364.2 871.4,360.8 868.6,355.3 865.1,346.5 860.8,333.6 856.3,315.6 852.1,293.2 849.2,269.2 848.3,247.1 850.3,228.9 855.0,217.1 861.8,213.0 869.5,214.4 877.2,218.3 884.5,222.9 891.6,228.1 898.5,233.8 905.4,239.9 912.2,246.3 919.0,252.8 925.9,259.5 932.6,266.1 939.3,272.7 945.7,279.1 951.9,285.2 957.8,291.0 963.1,296.3 967.7,300.8 971.7,304.9 975.1,308.2 977.8,310.9 980.0,313.1 981.8,314.8 983.2,316.2 984.3,317.3 985.3,318.3 986.1,319.0 986.6,319.6 987.4,320.4 988.3,321.3"/></clipPath><linearGradient id="g0" gradientUnits="userSpaceOnUse" x1="860.3" x2="863.5" y1="0" y2="0"><stop offset="0.000" stop-color="#00ff00"/><stop offset="0.500" stop-color="#00ff00"/><stop offset="1.000" stop-color="#00ff00"/></linearGradient><linearGradient id="g1" gradientUnits="userSpaceOnUse" x1="857.0" x2="872.2" y1="0" y2="0"><stop offset="0.000" stop-color="#00ff00"/><stop offset="0.333" stop-color="#00ff00"/><stop offset="0.667" stop-color="#00ff00"/><stop offset="1.000" stop-color="#00ff00"/></linearGradient><linearGradient id="g2" gradientUnits="userSpaceOnUse" x1="853.7" x2="876.2" y1="0" y2="0"><stop offset="0.000" stop-color="#00ff03"/><stop offset="0.250" stop-color="#00ff00"/><stop offset="0.500" stop-color="#00ff00"/><stop offset="0.750" stop-color="#00ff00"/><stop offset="1.000" stop-color="#00ff00"/></linearGradient><linearGradient id="g3" gradientUnits="userSpaceOnUse" x1="852.8" x2="879.9" y1="0" y2="0"><stop offset="0.000" stop-color="#00ff1c"/><stop offset="0.250" stop-color="#00ff00"/><stop offset="0.500" stop-color="#00ff00"/><stop offset="0.750" stop-color="#00ff00"/><stop offset="1.000" stop-color="#00ff00"/></linearGradient><linearGradient id="g4" gradientUnits="userSpaceOnUse" x1="852.0" x2="883.0" y1="0" y2="0"><stop offset="0.000" stop-color="#00ff28"/><stop offset="0.200" stop-color="#00ff0d"/><stop offset="0.400" stop-color="#00ff00"/><stop offset="0.600" stop-color="#00ff00"/><stop offset="0.800" stop-color="#00ff00"/><stop offset="1.000" stop-color="#00ff00"/></linearGradient><linearGradient id="g5" gradientUnits="userSpaceOnUse" x1="851.2" x2="886.2" y1="0" y2="0"><stop offset="0.000" stop-color="#00ff31"/><stop offset="0.167" stop-color="#00ff20"/><stop offset="0.333" stop-color="#00ff00"/><stop offset="0.500" stop-color="#00ff00"/><stop offset="0.667" stop-color="#00ff00"/><stop offset="0.833" stop-color="#00ff00"/><stop offset="1.000" stop-color="#00ff00"/></linearGradient><linearGradient id="g6" gradientUnits="userSpaceOnUse" x1="850.3" x2="888.9" y1="0" y2="0"><stop offset="0.000" stop-color="#00ff39"/><stop offset="0.167" stop-color="#00ff2a"/><stop offset="0.333" stop-color="#00ff0d"/><stop offset="0.500" stop-color="#00ff00"/><stop offset="0.667" stop-color="#00ff00"/><stop offset="0.833" stop-color="#00ff00"/><stop offset="1.000" stop-color="#00ff00"/></linearGradient><linearGradient id="g7" gradientUnits="userSpaceOnUse" x1="849.5" x2="891.6" y1="0" y2="0"><stop offset="0.000" stop-color="#00ff40"/><stop offset="0.143" stop-color="#00ff34"/><stop offset="0.286" stop-color="#00ff23"/><stop offset="0.429" stop-color="#00ff00"/><stop offset="0.571" stop-color="#00ff00"/><stop offset="0.714" stop-color="#00ff00"/><stop offset="0.857" stop-color="#00ff00"/><stop offset="1.000" stop-color="#00ff00"/></linearGradient><linearGradient id="g8" gradientUnits="userSpaceOnUse" x1="848.7" x2="894.2" y1="0" y2="0"><stop offset="0.000" stop-color="#00ff46"/><stop offset="0.143" stop-color="#00ff3a"/><stop offset="0.286" stop-color="#00ff2b"/><stop offset="0.429" stop-color="#00ff0e"/><stop offset="0.571" stop-color="#00ff00"/><stop offset="0.714" stop-color="#00ff00"/><stop offset="0.857" stop-color="#00ff00"/><stop offset="1.000" stop-color="#00ff00"/></linearGradient><linearGradient id="g9" gradientUnits="userSpaceOnUse" x1="848.5" x2="896.6" y1="0" y2="0"><stop offset="0.000" stop-color="#00ff4b"/><stop offset="0.143" stop-color="#00ff40"/><stop offset="0.286" stop-color="#00ff31"/><stop offset="0.429" stop-color="#00ff19"/><stop offset="0.571" stop-color="#00ff00"/><stop offset="0.714" stop-color="#00ff00"/><stop offset="0.857" stop-color="#00ff00"/><stop offset="1.000" stop-color="#00ff00"/></linearGradient><linearGradient id="g10" gradientUnits="userSpaceOnUse" x1="848.3" x2="899.0" y1="0" y2="0"><stop offset="0.000" stop-color="#00ff50"/><stop offset="0.125" stop-color="#00ff46"/><stop offset="0.250" stop-color="#00ff3a"/><stop offset="0.375" stop-color="#00ff2a"/><stop offset="0.500" stop-color="#00ff0a"/><stop offset="0.625" stop-color="#00ff00"/><stop offset="0.750" stop-color="#00ff00"/><stop offset="0.875" stop-color="#00ff00"/><stop offset="1.000" stop-color="#00ff00"/></linearGradient><linearGradient id="g11" gradientUnits="userSpaceOnUse" x1="848.1" x2="901.3" y1="0" y2="0"><stop offset="0.000" stop-color="#00ff54"/><stop offset="0.125" stop-color="#00ff4b"/><stop offset="0.250" stop-color="#00ff3f"/><stop offset="0.375" stop-color="#00ff30"/><stop offset="0.500" stop-color="#00ff17"/><stop offset="0.625" stop-color="#00ff00"/><stop offset="0.750" stop-color="#00ff00"/><stop offset="0.875" stop-color="#00ff00"/><stop offset="1.000" stop-color="#00ff00"/></linearGradient><linearGradient id="g12" gradientUnits="userSpaceOnUse" x1="847.9" x2="903.6" y1="0" y2="0"><stop offset="0.000" stop-color="#00ff59"/><stop offset="0.125" stop-color="#00ff50"/><stop offset="0.250" stop-color="#00ff44"/><stop offset="0.375" stop-color="#00ff35"/><stop offset="0.500" stop-color="#00ff1f"/><stop offset="0.625" stop-color="#00ff00"/><stop offset="0.750" stop-color="#00ff00"/><stop offset="0.875" stop-color="#00ff00"/><stop offset="1.000" stop-color="#00ff00"/></linearGradient><linearGradient id="g13" gradientUnits="userSpaceOnUse" x1="847.7" x2="905.8" y1="0" y2="0"><stop offset="0.000" stop-color="#00ff5e"/><stop offset="0.111" stop-color="#00ff55"/><stop offset="0.222" stop-color="#00ff4c"/><stop offset="0.333" stop-color="#00ff40"/><stop offset="0.444" stop-color="#00ff30"/><stop offset="0.556" stop-color="#00ff16"/><stop offset="0.667" stop-color="#00ff00"/><stop offset="0.778" stop-color="#00ff00"/><stop offset="0.889" stop-color="#00ff00"/><stop offset="1.000" stop-color="#00ff00"/></linearGradient><linearGradient id="g14" gradientUnits="userSpaceOnUse" x1="847.5" x2="908.0" y1="0" y2="0"><stop offset="0.000" stop-color="#00ff62"/><stop offset="0.111" stop-color="#00ff5a"/><stop offset="0.222" stop-color="#00ff50"/><stop offset="0.333" stop-color="#00ff45"/><stop offset="0.444" stop-color="#00ff36"/><stop offset="0.556" stop-color="#00ff1e"/><stop offset="0.667" stop-color="#00ff00"/><stop offset="0.778" stop-color="#00ff00"/><stop offset="0.889" stop-color="#00ff00"/><stop offset="1.000" stop-color="#00ff00"/></linearGradient><linearGradient id="g15" gradientUnits="userSpaceOnUse" x1="847.3" x2="910.2" y1="0" y2="0"><stop offset="0.000" stop-color="#00ff66"/><stop offset="0.111" stop-color="#00ff5e"/><stop offset="0.222" stop-color="#00ff55"/><stop offset="0.333" stop-color="#00ff49"/><stop offset="0.444" stop-color="#00ff3b"/><stop offset="0.556" stop-color="#00ff25"/><stop offset="0.667" stop-color="#00ff00"/><stop offset="0.778" stop-color="#00ff00"/><stop offset="0.889" stop-color="#00ff00"/><stop offset="1.000" stop-color="#26ff00"/></linearGradient><linearGradient id="g16" gradientUnits="userSpaceOnUse" x1="847.1" x2="912.3" y1="0" y2="0"><stop offset="0.000" stop-color="#00ff6a"/><stop offset="0.100" stop-color="#00ff63"/><stop offset="0.200" stop-color="#00ff5b"/><stop offset="0.300" stop-color="#00ff51"/><stop offset="0.400" stop-color="#00ff46"/><stop offset="0.500" stop-color="#00ff36"/><stop offset="0.600" stop-color="#00ff1f"/><stop offset="0.700" stop-color="#00ff00"/><stop offset="0.800" stop-color="#00ff00"/><stop offset="0.900" stop-color="#00ff00"/><stop offset="1.000" stop-color="#48ff00"/></linearGradient><linearGradient id="g17" gradientUnits="userSpaceOnUse" x1="846.9" x2="914.4" y1="0" y2="0"><stop offset="0.000" stop-color="#00ff6f"/><stop offset="0.100" stop-color="#00ff67"/><stop offset="0.200" stop-color="#00ff5f"/><stop offset="0.300" stop-color="#00ff56"/><stop offset="0.400" stop-color="#00ff4a"/><stop offset="0.500" stop-color="#00ff3b"/><stop offset="0.600" stop-color="#00ff26"/><stop offset="0.700" stop-color="#00ff00"/><stop offset="0.800" stop-color="#00ff00"/><stop offset="0.900" stop-color="#00ff00"/><stop offset="1.000" stop-color="#60ff00"/></linearGradient><linearGradient id="g18" gradientUnits="userSpaceOnUse" x1="846.9" x2="916.5" y1="0" y2="0"><stop offset="0.000" stop-color="#00ff73"/><stop offset="0.100" stop-color="#00ff6b"/><stop offset="0.200" stop-color="#00ff63"/><stop offset="0.300" stop-color="#00ff5a"/><stop offset="0.400" stop-color="#00ff4e"/><stop offset="0.500" stop-color="#00ff40"/><stop offset="0.600" stop-color="#00ff2b"/><stop offset="0.700" stop-color="#00ff00"/><stop offset="0.800" stop-color="#00ff00"/><stop offset="0.900" stop-color="#37ff00"/><stop offset="1.000" stop-color="#74ff00"/></linearGradient><linearGradient id="g19" gradientUnits="userSpaceOnUse" x1="847.0" x2="918.6" y1="0" y2="0"><stop offset="0.000" stop-color="#00ff76"/><stop offset="0.091" stop-color="#00ff70"/><stop offset="0.182" stop-color="#00ff69"/><stop offset="0.273" stop-color="#00ff61"/><stop offset="0.364" stop-color="#00ff57"/><stop offset="0.455" stop-color="#00ff4b"/><stop offset="0.545" stop-color="#00ff3c"/><stop offset="0.636" stop-color="#00ff27"/><stop offset="0.727" stop-color="#00ff00"/><stop offset="0.818" stop-color="#00ff00"/><stop offset="0.909" stop-color="#58ff00"/><stop offset="1.000" stop-color="#86ff00"/></linearGradient><linearGradient id="g20" gradientUnits="userSpaceOnUse" x1="847.1" x2="920.7" y1="0" y2="0"><stop offset="0.000" stop-color="#00ff7a"/><stop offset="0.091" stop-color="#00ff74"/><stop offset="0.182" stop-color="#00ff6d"/><stop offset="0.273" stop-color="#00ff65"/><stop offset="0.364" stop-color="#00ff5b"/><stop offset="0.455" stop-color="#00ff50"/><stop offset="0.545" stop-color="#00ff41"/><stop offset="0.636" stop-color="#00ff2c"/><stop offset="0.727" stop-color="#00ff00"/><stop offset="0.818" stop-color="#27ff00"/><stop offset="0.909" stop-color="#6cff00"/><stop offset="1.000" stop-color="#97ff00"/></linearGradient><linearGradient id="g21" gradientUnits="userSpaceOnUse" x1="847.1" x2="922.8" y1="0" y2="0"><stop offset="0.000" stop-color="#00ff7e"/><stop offset="0.091" stop-color="#00ff78"/><stop offset="0.182" stop-color="#00ff71"/><stop offset="0.273" stop-color="#00ff69"/><stop offset="0.364" stop-color="#00ff5f"/><stop offset="0.455" stop-color="#00ff54"/><stop offset="0.545" stop-color="#00ff45"/><stop offset="0.636" stop-color="#00ff32"/><stop offset="0.727" stop-color="#00ff00"/><stop offset="0.818" stop-color="#46ff00"/><stop offset="0.909" stop-color="#7eff00"/><stop offset="1.000" stop-color="#a8ff00"/></linearGradient><linearGradient id="g22" gradientUnits="userSpaceOnUse" x1="847.2" x2="924.8" y1="0" y2="0"><stop offset="0.000" stop-color="#00ff82"/><stop offset="0.083" stop-color="#00ff7c"/><stop offset="0.167" stop-color="#00ff76"/><stop offset="0.250" stop-color="#00ff6f"/><stop offset="0.333" stop-color="#00ff67"/><stop offset="0.417" stop-color="#00ff5d"/><stop offset="0.500" stop-color="#00ff51"/><stop offset="0.583" stop-color="#00ff43"/><stop offset="0.667" stop-color="#00ff2e"/><stop offset="0.750" stop-color="#13ff00"/><stop offset="0.833" stop-color="#67ff00"/><stop offset="0.917" stop-color="#93ff00"/><stop offset="1.000" stop-color="#b8ff00"/></linearGradient><linearGradient id="g23" gradientUnits="userSpaceOnUse" x1="847.3" x2="926.9" y1="0" y2="0"><stop offset="0.000" stop-color="#00ff86"/><stop offset="0.083" stop-color="#00ff80"/><stop offset="0.167" stop-color="#00ff7a"/><stop offset="0.250" stop-color="#00ff73"/><stop offset="0.333" stop-color="#00ff6b"/><stop offset="0.417" stop-color="#00ff61"/><stop offset="0.500" stop-color="#00ff56"/><stop offset="0.583" stop-color="#00ff47"/><stop offset="0.667" stop-color="#00ff33"/><stop offset="0.750" stop-color="#3cff00"/><stop offset="0.833" stop-color="#79ff00"/><stop offset="0.917" stop-color="#a3ff00"/><stop offset="1.000" stop-color="#c8ff00"/></linearGradient><linearGradient id="g24" gradientUnits="userSpaceOnUse" x1="847.4" x2="928.9" y1="0" y2="0"><stop offset="0.000" stop-color="#00ff8a"/><stop offset="0.083" stop-color="#00ff84"/><stop offset="0.167" stop-color="#00ff7e"/><stop offset="0.250" stop-color="#00ff77"/><stop offset="0.333" stop-color="#00ff6f"/><stop offset="0.417" stop-color="#00ff65"/><stop offset="0.500" stop-color="#00ff5a"/><stop offset="0.583" stop-color="#00ff4c"/><stop offset="0.667" stop-color="#00ff39"/><stop offset="0.750" stop-color="#55ff14"/><stop offset="0.833" stop-color="#8aff00"/><stop offset="0.917" stop-color="#b3ff00"/><stop offset="1.000" stop-color="#d7ff00"/></linearGradient><linearGradient id="g25" gradientUnits="userSpaceOnUse" x1="847.4" x2="931.0" y1="0" y2="0"><stop offset="0.000" stop-color="#00ff8e"/><stop offset="0.083" stop-color="#00ff88"/><stop offset="0.167" stop-color="#00ff82"/><stop offset="0.250" stop-color="#00ff7b"/><stop offset="0.333" stop-color="#00ff73"/><stop offset="0.417" stop-color="#00ff6a"/><stop offset="0.500" stop-color="#00ff5e"/><stop offset="0.583" stop-color="#00ff50"/><stop offset="0.667" stop-color="#00ff3e"/><stop offset="0.750" stop-color="#69ff1d"/><stop offset="0.833" stop-color="#9aff00"/><stop offset="0.917" stop-color="#c3ff00"/><stop offset="1.000" stop-color="#e8ff00"/></linearGradient><linearGradient id="g26" gradientUnits="userSpaceOnUse" x1="847.5" x2="933.0" y1="0" y2="0"><stop offset="0.000" stop-color="#00ff92"/><stop offset="0.077" stop-color="#00ff8d"/><stop offset="0.154" stop-color="#00ff87"/><stop offset="0.231" stop-color="#00ff81"/><stop offset="0.308" stop-color="#00ff7a"/><stop offset="0.385" stop-color="#00ff72"/><stop offset="0.462" stop-color="#00ff68"/><stop offset="0.538" stop-color="#00ff5d"/><stop offset="0.615" stop-color="#00ff4f"/><stop offset="0.692" stop-color="#4fff3b"/><stop offset="0.769" stop-color="#87ff19"/><stop offset="0.846" stop-color="#b0ff00"/><stop offset="0.923" stop-color="#d5ff00"/><stop offset="1.000" stop-color="#f8ff00"/></linearGradient><linearGradient id="g27" gradientUnits="userSpaceOnUse" x1="847.6" x2="935.0" y1="0" y2="0"><stop offset="0.000" stop-color="#00ff96"/><stop offset="0.077" stop-color="#00ff91"/><stop offset="0.154" stop-color="#00ff8b"/><stop offset="0.231" stop-color="#00ff85"/><stop offset="0.308" stop-color="#00ff7e"/><stop offset="0.385" stop-color="#00ff76"/><stop offset="0.462" stop-color="#00ff6d"/><stop offset="0.538" stop-color="#00ff61"/><stop offset="0.615" stop-color="#00ff53"/><stop offset="0.692" stop-color="#64ff41"/><stop offset="0.769" stop-color="#97ff21"/><stop offset="0.846" stop-color="#c0ff00"/><stop offset="0.923" stop-color="#e5ff00"/><stop offset="1.000" stop-color="#fff500"/></linearGradient><linearGradient id="g28" gradientUnits="userSpaceOnUse" x1="847.7" x2="937.0" y1="0" y2="0"><stop offset="0.000" stop-color="#00ff9a"/><stop offset="0.077" stop-color="#00ff95"/><stop offset="0.154" stop-color="#00ff90"/><stop offset="0.231" stop-color="#00ff8a"/><stop offset="0.308" stop-color="#00ff83"/><stop offset="0.385" stop-color="#00ff7b"/><stop offset="0.462" stop-color="#00ff71"/><stop offset="0.538" stop-color="#00ff66"/><stop offset="0.615" stop-color="#26ff58"/><stop offset="0.692" stop-color="#76ff46"/><stop offset="0.769" stop-color="#a6ff28"/><stop offset="0.846" stop-color="#d0ff00"/><stop offset="0.923" stop-color="#f6ff00"/><stop offset="1.000" stop-color="#ffe600"/></linearGradient><linearGradient id="g29" gradientUnits="userSpaceOnUse" x1="847.9" x2="939.1" y1="0" y2="0"><stop offset="0.000" stop-color="#00ff9e"/><stop offset="0.071" stop-color="#00ff9a"/><stop offset="0.143" stop-color="#00ff95"/><stop offset="0.214" stop-color="#00ff8f"/><stop offset="0.286" stop-color="#00ff89"/><stop offset="0.357" stop-color="#00ff82"/><stop offset="0.429" stop-color="#00ff7a"/><stop offset="0.500" stop-color="#00ff71"/><stop offset="0.571" stop-color="#00ff65"/><stop offset="0.643" stop-color="#61ff57"/><stop offset="0.714" stop-color="#95ff44"/><stop offset="0.786" stop-color="#bfff25"/><stop offset="0.857" stop-color="#e5ff00"/><stop offset="0.929" stop-color="#fff500"/><stop offset="1.000" stop-color="#ffd800"/></linearGradient><linearGradient id="g30" gradientUnits="userSpaceOnUse" x1="848.1" x2="941.1" y1="0" y2="0"><stop offset="0.000" stop-color="#00ffa2"/><stop offset="0.071" stop-color="#00ff9e"/><stop offset="0.143" stop-color="#00ff99"/><stop offset="0.214" stop-color="#00ff93"/><stop offset="0.286" stop-color="#00ff8d"/><stop offset="0.357" stop-color="#00ff86"/><stop offset="0.429" stop-color="#00ff7f"/><stop offset="0.500" stop-color="#00ff75"/><stop offset="0.571" stop-color="#1fff6a"/><stop offset="0.643" stop-color="#74ff5c"/><stop offset="0.714" stop-color="#a6ff49"/><stop offset="0.786" stop-color="#cfff2c"/><stop offset="0.857" stop-color="#f6ff00"/><stop offset="0.929" stop-color="#ffe600"/><stop offset="1.000" stop-color="#ffcb00"/></linearGradient><linearGradient id="g31" gradientUnits="userSpaceOnUse" x1="848.4" x2="943.1" y1="0" y2="0"><stop offset="0.000" stop-color="#00ffa6"/><stop offset="0.071" stop-color="#00ffa2"/><stop offset="0.143" stop-color="#00ff9d"/><stop offset="0.214" stop-color="#00ff98"/><stop offset="0.286" stop-color="#00ff92"/><stop offset="0.357" stop-color="#00ff8b"/><stop offset="0.429" stop-color="#00ff83"/><stop offset="0.500" stop-color="#00ff7a"/><stop offset="0.571" stop-color="#42ff6f"/><stop offset="0.643" stop-color="#86ff61"/><stop offset="0.714" stop-color="#b5ff4f"/><stop offset="0.786" stop-color="#dfff33"/><stop offset="0.857" stop-color="#fff800"/><stop offset="0.929" stop-color="#ffd800"/><stop offset="1.000" stop-color="#ffbf00"/></linearGradient><linearGradient id="g32" gradientUnits="userSpaceOnUse" x1="848.6" x2="945.1" y1="0" y2="0"><stop offset="0.000" stop-color="#00ffaa"/><stop offset="0.071" stop-color="#00ffa6"/><stop offset="0.143" stop-color="#00ffa2"/><stop offset="0.214" stop-color="#00ff9c"/><stop offset="0.286" stop-color="#00ff97"/><stop offset="0.357" stop-color="#00ff90"/><stop offset="0.429" stop-color="#00ff88"/><stop offset="0.500" stop-color="#00ff7f"/><stop offset="0.571" stop-color="#5aff74"/><stop offset="0.643" stop-color="#96ff66"/><stop offset="0.714" stop-color="#c5ff54"/><stop offset="0.786" stop-color="#f0ff39"/><stop offset="0.857" stop-color="#ffe800"/><stop offset="0.929" stop-color="#ffcb00"/><stop offset="1.000" stop-color="#ffb300"/></linearGradient><linearGradient id="g33" gradientUnits="userSpaceOnUse" x1="848.9" x2="947.1" y1="0" y2="0"><stop offset="0.000" stop-color="#00ffaf"/><stop offset="0.067" stop-color="#00ffab"/><stop offset="0.133" stop-color="#00ffa7"/><stop offset="0.200" stop-color="#00ffa2"/><stop offset="0.267" stop-color="#00ff9d"/><stop offset="0.333" stop-color="#00ff97"/><stop offset="0.400" stop-color="#00ff90"/><stop offset="0.467" stop-color="#00ff88"/><stop offset="0.533" stop-color="#42ff7f"/><stop offset="0.600" stop-color="#86ff74"/><stop offset="0.667" stop-color="#b7ff66"/><stop offset="0.733" stop-color="#e1ff54"/><stop offset="0.800" stop-color="#fff536"/><stop offset="0.867" stop-color="#ffd600"/><stop offset="0.933" stop-color="#ffbd00"/><stop offset="1.000" stop-color="#ffa800"/></linearGradient><linearGradient id="g34" gradientUnits="userSpaceOnUse" x1="849.1" x2="949.2" y1="0" y2="0"><stop offset="0.000" stop-color="#00ffb3"/><stop offset="0.067" stop-color="#00ffaf"/><stop offset="0.133" stop-color="#00ffab"/><stop offset="0.200" stop-color="#00ffa7"/><stop offset="0.267" stop-color="#00ffa2"/><stop offset="0.333" stop-color="#00ff9c"/><stop offset="0.400" stop-color="#00ff95"/><stop offset="0.467" stop-color="#00ff8e"/><stop offset="0.533" stop-color="#5aff84"/><stop offset="0.600" stop-color="#97ff79"/><stop offset="0.667" stop-color="#c7ff6c"/><stop offset="0.733" stop-color="#f2ff5a"/><stop offset="0.800" stop-color="#ffe639"/><stop offset="0.867" stop-color="#ffc800"/><stop offset="0.933" stop-color="#ffb100"/><stop offset="1.000" stop-color="#ff9e00"/></linearGradient><linearGradient id="g35" gradientUnits="userSpaceOnUse" x1="849.4" x2="951.2" y1="0" y2="0"><stop offset="0.000" stop-color="#00ffb8"/><stop offset="0.067" stop-color="#00ffb4"/><stop offset="0.133" stop-color="#00ffb0"/><stop offset="0.200" stop-color="#00ffac"/><stop offset="0.267" stop-color="#00ffa7"/><stop offset="0.333" stop-color="#00ffa1"/><stop offset="0.400" stop-color="#00ff9b"/><stop offset="0.467" stop-color="#00ff93"/><stop offset="0.533" stop-color="#6eff8a"/><stop offset="0.600" stop-color="#a8ff7f"/><stop offset="0.667" stop-color="#d7ff72"/><stop offset="0.733" stop-color="#fffb5e"/><stop offset="0.800" stop-color="#ffd73b"/><stop offset="0.867" stop-color="#ffbc00"/><stop offset="0.933" stop-color="#ffa600"/><stop offset="1.000" stop-color="#ff9400"/></linearGradient><linearGradient id="g36" gradientUnits="userSpaceOnUse" x1="849.6" x2="953.2" y1="0" y2="0"><stop offset="0.000" stop-color="#00ffbc"/><stop offset="0.067" stop-color="#00ffb9"/><stop offset="0.133" stop-color="#00ffb5"/><stop offset="0.200" stop-color="#00ffb1"/><stop offset="0.267" stop-color="#00ffac"/><stop offset="0.333" stop-color="#00ffa6"/><stop offset="0.400" stop-color="#00ffa0"/><stop offset="0.467" stop-color="#22ff99"/><stop offset="0.533" stop-color="#80ff90"/><stop offset="0.600" stop-color="#b8ff85"/><stop offset="0.667" stop-color="#e8ff78"/><stop offset="0.733" stop-color="#ffeb5e"/><stop offset="0.800" stop-color="#ffca3d"/><stop offset="0.867" stop-color="#ffb10e"/><stop offset="0.933" stop-color="#ff9c00"/><stop offset="1.000" stop-color="#ff8a00"/></linearGradient><linearGradient id="g37" gradientUnits="userSpaceOnUse" x1="849.8" x2="955.2" y1="0" y2="0"><stop offset="0.000" stop-color="#00ffc1"/><stop offset="0.062" stop-color="#00ffbe"/><stop offset="0.125" stop-color="#00ffba"/><stop offset="0.188" stop-color="#00ffb7"/><stop offset="0.250" stop-color="#00ffb2"/><stop offset="0.312" stop-color="#00ffae"/><stop offset="0.375" stop-color="#00ffa8"/><stop offset="0.438" stop-color="#00ffa2"/><stop offset="0.500" stop-color="#71ff9a"/><stop offset="0.562" stop-color="#abff92"/><stop offset="0.625" stop-color="#dbff87"/><stop offset="0.688" stop-color="#fff675"/><stop offset="0.750" stop-color="#ffd356"/><stop offset="0.812" stop-color="#ffb838"/><stop offset="0.875" stop-color="#ffa30c"/><stop offset="0.938" stop-color="#ff9100"/><stop offset="1.000" stop-color="#ff8100"/></linearGradient><linearGradient id="g38" gradientUnits="userSpaceOnUse" x1="850.1" x2="957.2" y1="0" y2="0"><stop offset="0.000" stop-color="#00ffc6"/><stop offset="0.062" stop-color="#00ffc3"/><stop offset="0.125" stop-color="#00ffc0"/><stop offset="0.188" stop-color="#00ffbc"/><stop offset="0.250" stop-color="#00ffb8"/><stop offset="0.312" stop-color="#00ffb3"/><stop offset="0.375" stop-color="#00ffae"/><stop offset="0.438" stop-color="#28ffa8"/><stop offset="0.500" stop-color="#84ffa1"/><stop offset="0.562" stop-color="#bcff98"/><stop offset="0.625" stop-color="#ecff8e"/><stop offset="0.688" stop-color="#ffe674"/><stop offset="0.750" stop-color="#ffc656"/><stop offset="0.812" stop-color="#ffad3a"/><stop offset="0.875" stop-color="#ff9814"/><stop offset="0.938" stop-color="#ff8700"/><stop offset="1.000" stop-color="#ff7700"/></linearGradient><linearGradient id="g39" gradientUnits="userSpaceOnUse" x1="850.3" x2="959.3" y1="0" y2="0"><stop offset="0.000" stop-color="#00ffcb"/><stop offset="0.062" stop-color="#00ffc8"/><stop offset="0.125" stop-color="#00ffc5"/><stop offset="0.188" stop-color="#00ffc1"/><stop offset="0.250" stop-color="#00ffbe"/><stop offset="0.312" stop-color="#00ffb9"/><stop offset="0.375" stop-color="#00ffb4"/><stop offset="0.438" stop-color="#49ffae"/><stop offset="0.500" stop-color="#95ffa7"/><stop offset="0.562" stop-color="#cdff9f"/><stop offset="0.625" stop-color="#feff95"/><stop offset="0.688" stop-color="#ffd773"/><stop offset="0.750" stop-color="#ffb956"/><stop offset="0.812" stop-color="#ffa23b"/><stop offset="0.875" stop-color="#ff8e19"/><stop offset="0.938" stop-color="#ff7d00"/><stop offset="1.000" stop-color="#ff6e00"/></linearGradient><linearGradient id="g40" gradientUnits="userSpaceOnUse" x1="850.6" x2="961.3" y1="0" y2="0"><stop offset="0.000" stop-color="#00ffd0"/><stop offset="0.062" stop-color="#00ffcd"/><stop offset="0.125" stop-color="#00ffca"/><stop offset="0.188" stop-color="#00ffc7"/><stop offset="0.250" stop-color="#00ffc3"/><stop offset="0.312" stop-color="#00ffbf"/><stop offset="0.375" stop-color="#00ffbb"/><stop offset="0.438" stop-color="#60ffb5"/><stop offset="0.500" stop-color="#a7ffae"/><stop offset="0.562" stop-color="#deffa6"/><stop offset="0.625" stop-color="#ffee92"/><stop offset="0.688" stop-color="#ffc971"/><stop offset="0.750" stop-color="#ffad56"/><stop offset="0.812" stop-color="#ff973c"/><stop offset="0.875" stop-color="#ff841d"/><stop offset="0.938" stop-color="#ff7300"/><stop offset="1.000" stop-color="#ff6400"/></linearGradient><linearGradient id="g41" gradientUnits="userSpaceOnUse" x1="850.9" x2="963.3" y1="0" y2="0"><stop offset="0.000" stop-color="#00ffd5"/><stop offset="0.059" stop-color="#00ffd3"/><stop offset="0.118" stop-color="#00ffd0"/><stop offset="0.176" stop-color="#00ffcd"/><stop offset="0.235" stop-color="#00ffca"/><stop offset="0.294" stop-color="#00ffc7"/><stop offset="0.353" stop-color="#00ffc3"/><stop offset="0.412" stop-color="#50ffbe"/><stop offset="0.471" stop-color="#9cffb9"/><stop offset="0.529" stop-color="#d3ffb2"/><stop offset="0.588" stop-color="#fff8a6"/><stop offset="0.647" stop-color="#ffd184"/><stop offset="0.706" stop-color="#ffb368"/><stop offset="0.765" stop-color="#ff9c50"/><stop offset="0.824" stop-color="#ff8939"/><stop offset="0.882" stop-color="#ff781c"/><stop offset="0.941" stop-color="#ff6900"/><stop offset="1.000" stop-color="#ff5b00"/></linearGradient><linearGradient id="g42" gradientUnits="userSpaceOnUse" x1="851.3" x2="965.3" y1="0" y2="0"><stop offset="0.000" stop-color="#00ffda"/><stop offset="0.059" stop-color="#00ffd8"/><stop offset="0.118" stop-color="#00ffd6"/><stop offset="0.176" stop-color="#00ffd3"/><stop offset="0.235" stop-color="#00ffd1"/><stop offset="0.294" stop-color="#00ffce"/><stop offset="0.353" stop-color="#00ffca"/><stop offset="0.412" stop-color="#68ffc6"/><stop offset="0.471" stop-color="#aeffc1"/><stop offset="0.529" stop-color="#e6ffbb"/><stop offset="0.588" stop-color="#ffe7a2"/><stop offset="0.647" stop-color="#ffc382"/><stop offset="0.706" stop-color="#ffa768"/><stop offset="0.765" stop-color="#ff9151"/><stop offset="0.824" stop-color="#ff7f3a"/><stop offset="0.882" stop-color="#ff6e1f"/><stop offset="0.941" stop-color="#ff5f00"/><stop offset="1.000" stop-color="#ff5100"/></linearGradient><linearGradient id="g43" gradientUnits="userSpaceOnUse" x1="851.7" x2="967.3" y1="0" y2="0"><stop offset="0.000" stop-color="#00ffdf"/><stop offset="0.059" stop-color="#00ffde"/><stop offset="0.118" stop-color="#00ffdc"/><stop offset="0.176" stop-color="#00ffda"/><stop offset="0.235" stop-color="#00ffd7"/><stop offset="0.294" stop-color="#00ffd4"/><stop offset="0.353" stop-color="#00ffd1"/><stop offset="0.412" stop-color="#7effcd"/><stop offset="0.471" stop-color="#c0ffc9"/><stop offset="0.529" stop-color="#f9ffc3"/><stop offset="0.588" stop-color="#ffd69f"/><stop offset="0.647" stop-color="#ffb580"/><stop offset="0.706" stop-color="#ff9c67"/><stop offset="0.765" stop-color="#ff8751"/><stop offset="0.824" stop-color="#ff753b"/><stop offset="0.882" stop-color="#ff6421"/><stop offset="0.941" stop-color="#ff5500"/><stop offset="1.000" stop-color="#ff4700"/></linearGradient><linearGradient id="g44" gradientUnits="userSpaceOnUse" x1="852.1" x2="969.3" y1="0" y2="0"><stop offset="0.000" stop-color="#00ffe5"/><stop offset="0.059" stop-color="#00ffe4"/><stop offset="0.118" stop-color="#00ffe2"/><stop offset="0.176" stop-color="#00ffe0"/><stop offset="0.235" stop-color="#00ffde"/><stop offset="0.294" stop-color="#00ffdc"/><stop offset="0.353" stop-color="#26ffd9"/><stop offset="0.412" stop-color="#92ffd6"/><stop offset="0.471" stop-color="#d3ffd2"/><stop offset="0.529" stop-color="#fff2c2"/><stop offset="0.588" stop-color="#ffc79b"/><stop offset="0.647" stop-color="#ffa97e"/><stop offset="0.706" stop-color="#ff9066"/><stop offset="0.765" stop-color="#ff7c51"/><stop offset="0.824" stop-color="#ff6b3c"/><stop offset="0.882" stop-color="#ff5a24"/><stop offset="0.941" stop-color="#ff4b00"/><stop offset="1.000" stop-color="#ff3b00"/></linearGradient><linearGradient id="g45" gradientUnits="userSpaceOnUse" x1="852.4" x2="971.4" y1="0" y2="0"><stop offset="0.000" stop-color="#00ffeb"/><stop offset="0.059" stop-color="#00ffea"/><stop offset="0.118" stop-color="#00ffe9"/><stop offset="0.176" stop-color="#00ffe7"/><stop offset="0.235" stop-color="#00ffe6"/><stop offset="0.294" stop-color="#00ffe4"/><stop offset="0.353" stop-color="#4cffe1"/><stop offset="0.412" stop-color="#a5ffdf"/><stop offset="0.471" stop-color="#e7ffdb"/><stop offset="0.529" stop-color="#ffe0bd"/><stop offset="0.588" stop-color="#ffb999"/><stop offset="0.647" stop-color="#ff9d7d"/><stop offset="0.706" stop-color="#ff8566"/><stop offset="0.765" stop-color="#ff7251"/><stop offset="0.824" stop-color="#ff603d"/><stop offset="0.882" stop-color="#ff5026"/><stop offset="0.941" stop-color="#ff4000"/><stop offset="1.000" stop-color="#ff2e00"/></linearGradient><linearGradient id="g46" gradientUnits="userSpaceOnUse" x1="852.8" x2="973.4" y1="0" y2="0"><stop offset="0.000" stop-color="#00fff1"/><stop offset="0.056" stop-color="#00fff0"/><stop offset="0.111" stop-color="#00fff0"/><stop offset="0.167" stop-color="#00ffef"/><stop offset="0.222" stop-color="#00ffee"/><stop offset="0.278" stop-color="#00ffec"/><stop offset="0.333" stop-color="#3bffeb"/><stop offset="0.389" stop-color="#9dffe9"/><stop offset="0.444" stop-color="#dfffe7"/><stop offset="0.500" stop-color="#ffe6ce"/><stop offset="0.556" stop-color="#ffbea8"/><stop offset="0.611" stop-color="#ffa18b"/><stop offset="0.667" stop-color="#ff8974"/><stop offset="0.722" stop-color="#ff7560"/><stop offset="0.778" stop-color="#ff634d"/><stop offset="0.833" stop-color="#ff533a"/><stop offset="0.889" stop-color="#ff4324"/><stop offset="0.944" stop-color="#ff3200"/><stop offset="1.000" stop-color="#ff1d00"/></linearGradient><linearGradient id="g47" gradientUnits="userSpaceOnUse" x1="853.2" x2="975.4" y1="0" y2="0"><stop offset="0.000" stop-color="#00fff7"/><stop offset="0.056" stop-color="#00fff7"/><stop offset="0.111" stop-color="#00fff7"/><stop offset="0.167" stop-color="#00fff6"/><stop offset="0.222" stop-color="#00fff6"/><stop offset="0.278" stop-color="#00fff5"/><stop offset="0.333" stop-color="#5afff4"/><stop offset="0.389" stop-color="#b1fff3"/><stop offset="0.444" stop-color="#f3fff2"/><stop offset="0.500" stop-color="#ffd5c9"/><stop offset="0.556" stop-color="#ffb0a5"/><stop offset="0.611" stop-color="#ff948a"/><stop offset="0.667" stop-color="#ff7e73"/><stop offset="0.722" stop-color="#ff6a5f"/><stop offset="0.778" stop-color="#ff594d"/><stop offset="0.833" stop-color="#ff483b"/><stop offset="0.889" stop-color="#ff3626"/><stop offset="0.944" stop-color="#ff2200"/><stop offset="1.000" stop-color="#ff0000"/></linearGradient><linearGradient id="g48" gradientUnits="userSpaceOnUse" x1="853.6" x2="977.4" y1="0" y2="0"><stop offset="0.000" stop-color="#00fffe"/><stop offset="0.056" stop-color="#00fffe"/><stop offset="0.111" stop-color="#00fffe"/><stop offset="0.167" stop-color="#00fffe"/><stop offset="0.222" stop-color="#00fffe"/><stop offset="0.278" stop-color="#00fffe"/><stop offset="0.333" stop-color="#74fffe"/><stop offset="0.389" stop-color="#c5fffe"/><stop offset="0.444" stop-color="#fff5f5"/><stop offset="0.500" stop-color="#ffc5c4"/><stop offset="0.556" stop-color="#ffa3a2"/><stop offset="0.611" stop-color="#ff8888"/><stop offset="0.667" stop-color="#ff7372"/><stop offset="0.722" stop-color="#ff5f5f"/><stop offset="0.778" stop-color="#ff4d4d"/><stop offset="0.833" stop-color="#ff3b3c"/><stop offset="0.889" stop-color="#ff2728"/><stop offset="0.944" stop-color="#ff0000"/><stop offset="1.000" stop-color="#ff0000"/></linearGradient><linearGradient id="g49" gradientUnits="userSpaceOnUse" x1="853.9" x2="979.4" y1="0" y2="0"><stop offset="0.000" stop-color="#00f9ff"/><stop offset="0.056" stop-color="#00f9ff"/><stop offset="0.111" stop-color="#00f8ff"/><stop offset="0.167" stop-color="#00f8ff"/><stop offset="0.222" stop-color="#00f7ff"/><stop offset="0.278" stop-color="#00f6ff"/><stop offset="0.333" stop-color="#86f5ff"/><stop offset="0.389" stop-color="#d1f4ff"/><stop offset="0.444" stop-color="#ffe1ed"/><stop offset="0.500" stop-color="#ffb5c0"/><stop offset="0.556" stop-color="#ff96a0"/><stop offset="0.611" stop-color="#ff7d87"/><stop offset="0.667" stop-color="#ff6772"/><stop offset="0.722" stop-color="#ff545f"/><stop offset="0.778" stop-color="#ff414e"/><stop offset="0.833" stop-color="#ff2d3c"/><stop offset="0.889" stop-color="#ff0f29"/><stop offset="0.944" stop-color="#ff0008"/><stop offset="1.000" stop-color="#ff0000"/></linearGradient><linearGradient id="g50" gradientUnits="userSpaceOnUse" x1="854.3" x2="981.5" y1="0" y2="0"><stop offset="0.000" stop-color="#00f3ff"/><stop offset="0.053" stop-color="#00f2ff"/><stop offset="0.105" stop-color="#00f1ff"/><stop offset="0.158" stop-color="#00f0ff"/><stop offset="0.211" stop-color="#00efff"/><stop offset="0.263" stop-color="#00edff"/><stop offset="0.316" stop-color="#79ebff"/><stop offset="0.368" stop-color="#c3e9ff"/><stop offset="0.421" stop-color="#ffe6fd"/><stop offset="0.474" stop-color="#ffb8ce"/><stop offset="0.526" stop-color="#ff98ac"/><stop offset="0.579" stop-color="#ff7e93"/><stop offset="0.632" stop-color="#ff697d"/><stop offset="0.684" stop-color="#ff556b"/><stop offset="0.737" stop-color="#ff435a"/><stop offset="0.789" stop-color="#ff2f4a"/><stop offset="0.842" stop-color="#ff123a"/><stop offset="0.895" stop-color="#ff0028"/><stop offset="0.947" stop-color="#ff000b"/><stop offset="1.000" stop-color="#ff0000"/></linearGradient><linearGradient id="g51" gradientUnits="userSpaceOnUse" x1="854.7" x2="983.5" y1="0" y2="0"><stop offset="0.000" stop-color="#00ecff"/><stop offset="0.053" stop-color="#00ebff"/><stop offset="0.105" stop-color="#00e9ff"/><stop offset="0.158" stop-color="#00e8ff"/><stop offset="0.211" stop-color="#00e6ff"/><stop offset="0.263" stop-color="#00e4ff"/><stop offset="0.316" stop-color="#89e1ff"/><stop offset="0.368" stop-color="#cddeff"/><stop offset="0.421" stop-color="#ffd2f5"/><stop offset="0.474" stop-color="#ffa9c9"/><stop offset="0.526" stop-color="#ff8baa"/><stop offset="0.579" stop-color="#ff7291"/><stop offset="0.632" stop-color="#ff5d7c"/><stop offset="0.684" stop-color="#ff496a"/><stop offset="0.737" stop-color="#ff355a"/><stop offset="0.789" stop-color="#ff1b4b"/><stop offset="0.842" stop-color="#ff003b"/><stop offset="0.895" stop-color="#ff0029"/><stop offset="0.947" stop-color="#ff000f"/><stop offset="1.000" stop-color="#ff0000"/></linearGradient><linearGradient id="g52" gradientUnits="userSpaceOnUse" x1="855.1" x2="985.5" y1="0" y2="0"><stop offset="0.000" stop-color="#00e5ff"/><stop offset="0.053" stop-color="#00e4ff"/><stop offset="0.105" stop-color="#00e2ff"/><stop offset="0.158" stop-color="#00e0ff"/><stop offset="0.211" stop-color="#00ddff"/><stop offset="0.263" stop-color="#34daff"/><stop offset="0.316" stop-color="#97d7ff"/><stop offset="0.368" stop-color="#d7d3ff"/><stop offset="0.421" stop-color="#ffc0ee"/><stop offset="0.474" stop-color="#ff9ac5"/><stop offset="0.526" stop-color="#ff7ea7"/><stop offset="0.579" stop-color="#ff668f"/><stop offset="0.632" stop-color="#ff507b"/><stop offset="0.684" stop-color="#ff3b6a"/><stop offset="0.737" stop-color="#ff235a"/><stop offset="0.789" stop-color="#ff004b"/><stop offset="0.842" stop-color="#ff003b"/><stop offset="0.895" stop-color="#ff002a"/><stop offset="0.947" stop-color="#ff0012"/><stop offset="1.000" stop-color="#ff0000"/></linearGradient><linearGradient id="g53" gradientUnits="userSpaceOnUse" x1="855.6" x2="987.5" y1="0" y2="0"><stop offset="0.000" stop-color="#00dfff"/><stop offset="0.053" stop-color="#00ddff"/><stop offset="0.105" stop-color="#00daff"/><stop offset="0.158" stop-color="#00d8ff"/><stop offset="0.211" stop-color="#00d4ff"/><stop offset="0.263" stop-color="#50d1ff"/><stop offset="0.316" stop-color="#a3ccff"/><stop offset="0.368" stop-color="#e1c7ff"/><stop offset="0.421" stop-color="#ffafe8"/><stop offset="0.474" stop-color="#ff8cc1"/><stop offset="0.526" stop-color="#ff70a5"/><stop offset="0.579" stop-color="#ff598e"/><stop offset="0.632" stop-color="#ff437a"/><stop offset="0.684" stop-color="#ff2a69"/><stop offset="0.737" stop-color="#ff005a"/><stop offset="0.789" stop-color="#ff004b"/><stop offset="0.842" stop-color="#ff003c"/><stop offset="0.895" stop-color="#ff002b"/><stop offset="0.947" stop-color="#ff0015"/><stop offset="1.000" stop-color="#ff0000"/></linearGradient><linearGradient id="g54" gradientUnits="userSpaceOnUse" x1="856.1" x2="989.5" y1="0" y2="0"><stop offset="0.000" stop-color="#00d8ff"/><stop offset="0.050" stop-color="#00d6ff"/><stop offset="0.100" stop-color="#00d3ff"/><stop offset="0.150" stop-color="#00d0ff"/><stop offset="0.200" stop-color="#00ccff"/><stop offset="0.250" stop-color="#4ac8ff"/><stop offset="0.300" stop-color="#9bc4ff"/><stop offset="0.350" stop-color="#d5beff"/><stop offset="0.400" stop-color="#ffaff4"/><stop offset="0.450" stop-color="#ff8ccd"/><stop offset="0.500" stop-color="#ff70af"/><stop offset="0.550" stop-color="#ff5898"/><stop offset="0.600" stop-color="#ff4285"/><stop offset="0.650" stop-color="#ff2974"/><stop offset="0.700" stop-color="#ff0064"/><stop offset="0.750" stop-color="#ff0056"/><stop offset="0.800" stop-color="#ff0048"/><stop offset="0.850" stop-color="#ff003a"/><stop offset="0.900" stop-color="#ff002b"/><stop offset="0.950" stop-color="#ff0016"/><stop offset="1.000" stop-color="#ff0000"/></linearGradient><linearGradient id="g55" gradientUnits="userSpaceOnUse" x1="856.6" x2="986.0" y1="0" y2="0"><stop offset="0.000" stop-color="#00d2ff"/><stop offset="0.053" stop-color="#00cfff"/><stop offset="0.105" stop-color="#00cbff"/><stop offset="0.158" stop-color="#00c8ff"/><stop offset="0.211" stop-color="#00c4ff"/><stop offset="0.263" stop-color="#63bfff"/><stop offset="0.316" stop-color="#aab9ff"/><stop offset="0.368" stop-color="#e2b2ff"/><stop offset="0.421" stop-color="#ff9bea"/><stop offset="0.474" stop-color="#ff7ac6"/><stop offset="0.526" stop-color="#ff60aa"/><stop offset="0.579" stop-color="#ff4794"/><stop offset="0.632" stop-color="#ff2e81"/><stop offset="0.684" stop-color="#ff0071"/><stop offset="0.737" stop-color="#ff0062"/><stop offset="0.789" stop-color="#ff0054"/><stop offset="0.842" stop-color="#ff0046"/><stop offset="0.895" stop-color="#ff0038"/><stop offset="0.947" stop-color="#ff0029"/><stop offset="1.000" stop-color="#ff0012"/></linearGradient><linearGradient id="g56" gradientUnits="userSpaceOnUse" x1="857.1" x2="981.7" y1="0" y2="0"><stop offset="0.000" stop-color="#00cbff"/><stop offset="0.056" stop-color="#00c8ff"/><stop offset="0.111" stop-color="#00c4ff"/><stop offset="0.167" stop-color="#00c0ff"/><stop offset="0.222" stop-color="#00bbff"/><stop offset="0.278" stop-color="#75b5ff"/><stop offset="0.333" stop-color="#b5aeff"/><stop offset="0.389" stop-color="#eba5ff"/><stop offset="0.444" stop-color="#ff8ae3"/><stop offset="0.500" stop-color="#ff6bc1"/><stop offset="0.556" stop-color="#ff50a7"/><stop offset="0.611" stop-color="#ff3592"/><stop offset="0.667" stop-color="#ff0f7f"/><stop offset="0.722" stop-color="#ff006f"/><stop offset="0.778" stop-color="#ff0061"/><stop offset="0.833" stop-color="#ff0053"/><stop offset="0.889" stop-color="#ff0045"/><stop offset="0.944" stop-color="#ff0038"/><stop offset="1.000" stop-color="#ff0028"/></linearGradient><linearGradient id="g57" gradientUnits="userSpaceOnUse" x1="857.6" x2="977.4" y1="0" y2="0"><stop offset="0.000" stop-color="#00c4ff"/><stop offset="0.056" stop-color="#00c1ff"/><stop offset="0.111" stop-color="#00bdff"/><stop offset="0.167" stop-color="#00b8ff"/><stop offset="0.222" stop-color="#00b3ff"/><stop offset="0.278" stop-color="#70adff"/><stop offset="0.333" stop-color="#aea5ff"/><stop offset="0.389" stop-color="#e19cff"/><stop offset="0.444" stop-color="#ff88ee"/><stop offset="0.500" stop-color="#ff68cb"/><stop offset="0.556" stop-color="#ff4db1"/><stop offset="0.611" stop-color="#ff329b"/><stop offset="0.667" stop-color="#ff0089"/><stop offset="0.722" stop-color="#ff0079"/><stop offset="0.778" stop-color="#ff006a"/><stop offset="0.833" stop-color="#ff005d"/><stop offset="0.889" stop-color="#ff0050"/><stop offset="0.944" stop-color="#ff0044"/><stop offset="1.000" stop-color="#ff0037"/></linearGradient><linearGradient id="g58" gradientUnits="userSpaceOnUse" x1="858.1" x2="973.0" y1="0" y2="0"><stop offset="0.000" stop-color="#00beff"/><stop offset="0.059" stop-color="#00baff"/><stop offset="0.118" stop-color="#00b5ff"/><stop offset="0.176" stop-color="#00b0ff"/><stop offset="0.235" stop-color="#0daaff"/><stop offset="0.294" stop-color="#7fa2ff"/><stop offset="0.353" stop-color="#b99aff"/><stop offset="0.412" stop-color="#ea8fff"/><stop offset="0.471" stop-color="#ff76e7"/><stop offset="0.529" stop-color="#ff57c6"/><stop offset="0.588" stop-color="#ff3aad"/><stop offset="0.647" stop-color="#ff1498"/><stop offset="0.706" stop-color="#ff0087"/><stop offset="0.765" stop-color="#ff0077"/><stop offset="0.824" stop-color="#ff0069"/><stop offset="0.882" stop-color="#ff005c"/><stop offset="0.941" stop-color="#ff004f"/><stop offset="1.000" stop-color="#ff0043"/></linearGradient><linearGradient id="g59" gradientUnits="userSpaceOnUse" x1="858.6" x2="968.7" y1="0" y2="0"><stop offset="0.000" stop-color="#00b7ff"/><stop offset="0.062" stop-color="#00b3ff"/><stop offset="0.125" stop-color="#00adff"/><stop offset="0.188" stop-color="#00a7ff"/><stop offset="0.250" stop-color="#3ba0ff"/><stop offset="0.312" stop-color="#8c98ff"/><stop offset="0.375" stop-color="#c38eff"/><stop offset="0.438" stop-color="#f381ff"/><stop offset="0.500" stop-color="#ff63e1"/><stop offset="0.562" stop-color="#ff44c2"/><stop offset="0.625" stop-color="#ff20a9"/><stop offset="0.688" stop-color="#ff0095"/><stop offset="0.750" stop-color="#ff0084"/><stop offset="0.812" stop-color="#ff0075"/><stop offset="0.875" stop-color="#ff0067"/><stop offset="0.938" stop-color="#ff005a"/><stop offset="1.000" stop-color="#ff004e"/></linearGradient><linearGradient id="g60" gradientUnits="userSpaceOnUse" x1="859.1" x2="964.4" y1="0" y2="0"><stop offset="0.000" stop-color="#00b0ff"/><stop offset="0.062" stop-color="#00acff"/><stop offset="0.125" stop-color="#00a6ff"/><stop offset="0.188" stop-color="#00a0ff"/><stop offset="0.250" stop-color="#3899ff"/><stop offset="0.312" stop-color="#8690ff"/><stop offset="0.375" stop-color="#bb85ff"/><stop offset="0.438" stop-color="#e878ff"/><stop offset="0.500" stop-color="#ff60ec"/><stop offset="0.562" stop-color="#ff40cc"/><stop offset="0.625" stop-color="#ff18b3"/><stop offset="0.688" stop-color="#ff009f"/><stop offset="0.750" stop-color="#ff008e"/><stop offset="0.812" stop-color="#ff007f"/><stop offset="0.875" stop-color="#ff0071"/><stop offset="0.938" stop-color="#ff0065"/><stop offset="1.000" stop-color="#ff0059"/></linearGradient><linearGradient id="g61" gradientUnits="userSpaceOnUse" x1="859.7" x2="960.0" y1="0" y2="0"><stop offset="0.000" stop-color="#00aaff"/><stop offset="0.067" stop-color="#00a4ff"/><stop offset="0.133" stop-color="#009eff"/><stop offset="0.200" stop-color="#0097ff"/><stop offset="0.267" stop-color="#508fff"/><stop offset="0.333" stop-color="#9385ff"/><stop offset="0.400" stop-color="#c578ff"/><stop offset="0.467" stop-color="#f168ff"/><stop offset="0.533" stop-color="#ff4ae5"/><stop offset="0.600" stop-color="#ff24c7"/><stop offset="0.667" stop-color="#ff00b0"/><stop offset="0.733" stop-color="#ff009c"/><stop offset="0.800" stop-color="#ff008b"/><stop offset="0.867" stop-color="#ff007d"/><stop offset="0.933" stop-color="#ff006f"/><stop offset="1.000" stop-color="#ff0063"/></linearGradient><linearGradient id="g62" gradientUnits="userSpaceOnUse" x1="860.4" x2="955.7" y1="0" y2="0"><stop offset="0.000" stop-color="#00a3ff"/><stop offset="0.071" stop-color="#009dff"/><stop offset="0.143" stop-color="#0096ff"/><stop offset="0.214" stop-color="#008eff"/><stop offset="0.286" stop-color="#6384ff"/><stop offset="0.357" stop-color="#9f78ff"/><stop offset="0.429" stop-color="#cf6aff"/><stop offset="0.500" stop-color="#fa56ff"/><stop offset="0.571" stop-color="#ff2fde"/><stop offset="0.643" stop-color="#ff00c2"/><stop offset="0.714" stop-color="#ff00ac"/><stop offset="0.786" stop-color="#ff0099"/><stop offset="0.857" stop-color="#ff0089"/><stop offset="0.929" stop-color="#ff007a"/><stop offset="1.000" stop-color="#ff006d"/></linearGradient><linearGradient id="g63" gradientUnits="userSpaceOnUse" x1="861.1" x2="951.4" y1="0" y2="0"><stop offset="0.000" stop-color="#009cff"/><stop offset="0.077" stop-color="#0095ff"/><stop offset="0.154" stop-color="#008dff"/><stop offset="0.231" stop-color="#0084ff"/><stop offset="0.308" stop-color="#7479ff"/><stop offset="0.385" stop-color="#ab6bff"/><stop offset="0.462" stop-color="#d958ff"/><stop offset="0.538" stop-color="#ff3cfa"/><stop offset="0.615" stop-color="#ff00d7"/><stop offset="0.692" stop-color="#ff00bd"/><stop offset="0.769" stop-color="#ff00a7"/><stop offset="0.846" stop-color="#ff0095"/><stop offset="0.923" stop-color="#ff0086"/><stop offset="1.000" stop-color="#ff0078"/></linearGradient><linearGradient id="g64" gradientUnits="userSpaceOnUse" x1="861.7" x2="947.1" y1="0" y2="0"><stop offset="0.000" stop-color="#0094ff"/><stop offset="0.077" stop-color="#008dff"/><stop offset="0.154" stop-color="#0085ff"/><stop offset="0.231" stop-color="#007cff"/><stop offset="0.308" stop-color="#6f71ff"/><stop offset="0.385" stop-color="#a462ff"/><stop offset="0.462" stop-color="#cf4fff"/><stop offset="0.538" stop-color="#f732ff"/><stop offset="0.615" stop-color="#ff00e3"/><stop offset="0.692" stop-color="#ff00c8"/><stop offset="0.769" stop-color="#ff00b2"/><stop offset="0.846" stop-color="#ff00a0"/><stop offset="0.923" stop-color="#ff0090"/><stop offset="1.000" stop-color="#ff0082"/></linearGradient><linearGradient id="g65" gradientUnits="userSpaceOnUse" x1="862.4" x2="942.7" y1="0" y2="0"><stop offset="0.000" stop-color="#008dff"/><stop offset="0.083" stop-color="#0085ff"/><stop offset="0.167" stop-color="#007cff"/><stop offset="0.250" stop-color="#3171ff"/><stop offset="0.333" stop-color="#7d64ff"/><stop offset="0.417" stop-color="#ae52ff"/><stop offset="0.500" stop-color="#d939ff"/><stop offset="0.583" stop-color="#ff00fe"/><stop offset="0.667" stop-color="#ff00dd"/><stop offset="0.750" stop-color="#ff00c3"/><stop offset="0.833" stop-color="#ff00ae"/><stop offset="0.917" stop-color="#ff009d"/><stop offset="1.000" stop-color="#ff008d"/></linearGradient><linearGradient id="g66" gradientUnits="userSpaceOnUse" x1="863.1" x2="938.4" y1="0" y2="0"><stop offset="0.000" stop-color="#0085ff"/><stop offset="0.091" stop-color="#007cff"/><stop offset="0.182" stop-color="#0072ff"/><stop offset="0.273" stop-color="#4a65ff"/><stop offset="0.364" stop-color="#8a55ff"/><stop offset="0.455" stop-color="#b93fff"/><stop offset="0.545" stop-color="#e20bff"/><stop offset="0.636" stop-color="#ff00f5"/><stop offset="0.727" stop-color="#ff00d6"/><stop offset="0.818" stop-color="#ff00be"/><stop offset="0.909" stop-color="#ff00aa"/><stop offset="1.000" stop-color="#ff0099"/></linearGradient><linearGradient id="g67" gradientUnits="userSpaceOnUse" x1="863.8" x2="934.1" y1="0" y2="0"><stop offset="0.000" stop-color="#007dff"/><stop offset="0.091" stop-color="#0074ff"/><stop offset="0.182" stop-color="#006aff"/><stop offset="0.273" stop-color="#485dff"/><stop offset="0.364" stop-color="#844cff"/><stop offset="0.455" stop-color="#b034ff"/><stop offset="0.545" stop-color="#d700ff"/><stop offset="0.636" stop-color="#fb00ff"/><stop offset="0.727" stop-color="#ff00e3"/><stop offset="0.818" stop-color="#ff00ca"/><stop offset="0.909" stop-color="#ff00b6"/><stop offset="1.000" stop-color="#ff00a5"/></linearGradient><linearGradient id="g68" gradientUnits="userSpaceOnUse" x1="864.6" x2="929.7" y1="0" y2="0"><stop offset="0.000" stop-color="#0075ff"/><stop offset="0.100" stop-color="#006bff"/><stop offset="0.200" stop-color="#005eff"/><stop offset="0.300" stop-color="#5b4fff"/><stop offset="0.400" stop-color="#9039ff"/><stop offset="0.500" stop-color="#ba00ff"/><stop offset="0.600" stop-color="#e000ff"/><stop offset="0.700" stop-color="#ff00fb"/><stop offset="0.800" stop-color="#ff00dd"/><stop offset="0.900" stop-color="#ff00c5"/><stop offset="1.000" stop-color="#ff00b2"/></linearGradient><linearGradient id="g69" gradientUnits="userSpaceOnUse" x1="865.4" x2="925.4" y1="0" y2="0"><stop offset="0.000" stop-color="#006cff"/><stop offset="0.111" stop-color="#0060ff"/><stop offset="0.222" stop-color="#0052ff"/><stop offset="0.333" stop-color="#6a3eff"/><stop offset="0.444" stop-color="#9c1aff"/><stop offset="0.556" stop-color="#c400ff"/><stop offset="0.667" stop-color="#e900ff"/><stop offset="0.778" stop-color="#ff00f2"/><stop offset="0.889" stop-color="#ff00d6"/><stop offset="1.000" stop-color="#ff00c0"/></linearGradient><linearGradient id="g70" gradientUnits="userSpaceOnUse" x1="866.2" x2="921.1" y1="0" y2="0"><stop offset="0.000" stop-color="#0062ff"/><stop offset="0.125" stop-color="#0055ff"/><stop offset="0.250" stop-color="#3243ff"/><stop offset="0.375" stop-color="#7926ff"/><stop offset="0.500" stop-color="#a700ff"/><stop offset="0.625" stop-color="#cf00ff"/><stop offset="0.750" stop-color="#f400ff"/><stop offset="0.875" stop-color="#ff00e9"/><stop offset="1.000" stop-color="#ff00cf"/></linearGradient><linearGradient id="g71" gradientUnits="userSpaceOnUse" x1="867.0" x2="916.7" y1="0" y2="0"><stop offset="0.000" stop-color="#0058ff"/><stop offset="0.125" stop-color="#004aff"/><stop offset="0.250" stop-color="#3336ff"/><stop offset="0.375" stop-color="#730fff"/><stop offset="0.500" stop-color="#9e00ff"/><stop offset="0.625" stop-color="#c200ff"/><stop offset="0.750" stop-color="#e400ff"/><stop offset="0.875" stop-color="#ff00fb"/><stop offset="1.000" stop-color="#ff00e0"/></linearGradient><linearGradient id="g72" gradientUnits="userSpaceOnUse" x1="868.0" x2="912.4" y1="0" y2="0"><stop offset="0.000" stop-color="#004cff"/><stop offset="0.143" stop-color="#003aff"/><stop offset="0.286" stop-color="#4a1cff"/><stop offset="0.429" stop-color="#8000ff"/><stop offset="0.571" stop-color="#a900ff"/><stop offset="0.714" stop-color="#cc00ff"/><stop offset="0.857" stop-color="#ed00ff"/><stop offset="1.000" stop-color="#ff00f2"/></linearGradient><linearGradient id="g73" gradientUnits="userSpaceOnUse" x1="869.0" x2="908.1" y1="0" y2="0"><stop offset="0.000" stop-color="#003fff"/><stop offset="0.167" stop-color="#0025ff"/><stop offset="0.333" stop-color="#5c00ff"/><stop offset="0.500" stop-color="#8d00ff"/><stop offset="0.667" stop-color="#b300ff"/><stop offset="0.833" stop-color="#d600ff"/><stop offset="1.000" stop-color="#f600ff"/></linearGradient><linearGradient id="g74" gradientUnits="userSpaceOnUse" x1="870.0" x2="903.8" y1="0" y2="0"><stop offset="0.000" stop-color="#002dff"/><stop offset="0.200" stop-color="#1e00ff"/><stop offset="0.400" stop-color="#6c00ff"/><stop offset="0.600" stop-color="#9900ff"/><stop offset="0.800" stop-color="#bf00ff"/><stop offset="1.000" stop-color="#e100ff"/></linearGradient><linearGradient id="g75" gradientUnits="userSpaceOnUse" x1="871.3" x2="899.4" y1="0" y2="0"><stop offset="0.000" stop-color="#000aff"/><stop offset="0.200" stop-color="#2c00ff"/><stop offset="0.400" stop-color="#6800ff"/><stop offset="0.600" stop-color="#8e00ff"/><stop offset="0.800" stop-color="#af00ff"/><stop offset="1.000" stop-color="#cc00ff"/></linearGradient><linearGradient id="g76" gradientUnits="userSpaceOnUse" x1="872.7" x2="895.1" y1="0" y2="0"><stop offset="0.000" stop-color="#0000ff"/><stop offset="0.250" stop-color="#4600ff"/><stop offset="0.500" stop-color="#7500ff"/><stop offset="0.750" stop-color="#9800ff"/><stop offset="1.000" stop-color="#b700ff"/></linearGradient><linearGradient id="g77" gradientUnits="userSpaceOnUse" x1="874.5" x2="890.8" y1="0" y2="0"><stop offset="0.000" stop-color="#0900ff"/><stop offset="0.333" stop-color="#5a00ff"/><stop offset="0.667" stop-color="#8100ff"/><stop offset="1.000" stop-color="#a100ff"/></linearGradient><linearGradient id="g78" gradientUnits="userSpaceOnUse" x1="876.7" x2="886.4" y1="0" y2="0"><stop offset="0.000" stop-color="#4000ff"/><stop offset="0.500" stop-color="#6a00ff"/><stop offset="1.000" stop-color="#8a00ff"/></linearGradient></defs><g clip-path="url(#loc)"><rect x="860.3" y="212" width="3.3" height="2.3" fill="url(#g0)"/><rect x="857.0" y="214" width="15.2" height="2.3" fill="url(#g1)"/><rect x="853.7" y="216" width="22.4" height="2.3" fill="url(#g2)"/><rect x="852.8" y="218" width="27.1" height="2.3" fill="url(#g3)"/><rect x="852.0" y="220" width="31.1" height="2.3" fill="url(#g4)"/><rect x="851.2" y="222" width="35.0" height="2.3" fill="url(#g5)"/><rect x="850.3" y="224" width="38.5" height="2.3" fill="url(#g6)"/><rect x="849.5" y="226" width="42.0" height="2.3" fill="url(#g7)"/><rect x="848.7" y="228" width="45.4" height="2.3" fill="url(#g8)"/><rect x="848.5" y="230" width="48.0" height="2.3" fill="url(#g9)"/><rect x="848.3" y="232" width="50.7" height="2.3" fill="url(#g10)"/><rect x="848.1" y="234" width="53.2" height="2.3" fill="url(#g11)"/><rect x="847.9" y="236" width="55.7" height="2.3" fill="url(#g12)"/><rect x="847.7" y="238" width="58.1" height="2.3" fill="url(#g13)"/><rect x="847.5" y="240" width="60.5" height="2.3" fill="url(#g14)"/><rect x="847.3" y="242" width="62.9" height="2.3" fill="url(#g15)"/><rect x="847.1" y="244" width="65.3" height="2.3" fill="url(#g16)"/><rect x="846.9" y="246" width="67.6" height="2.3" fill="url(#g17)"/><rect x="846.9" y="248" width="69.6" height="2.3" fill="url(#g18)"/><rect x="847.0" y="250" width="71.6" height="2.3" fill="url(#g19)"/><rect x="847.1" y="252" width="73.7" height="2.3" fill="url(#g20)"/><rect x="847.1" y="254" width="75.6" height="2.3" fill="url(#g21)"/><rect x="847.2" y="256" width="77.6" height="2.3" fill="url(#g22)"/><rect x="847.3" y="258" width="79.6" height="2.3" fill="url(#g23)"/><rect x="847.4" y="260" width="81.6" height="2.3" fill="url(#g24)"/><rect x="847.4" y="262" width="83.5" height="2.3" fill="url(#g25)"/><rect x="847.5" y="264" width="85.5" height="2.3" fill="url(#g26)"/><rect x="847.6" y="266" width="87.4" height="2.3" fill="url(#g27)"/><rect x="847.7" y="268" width="89.4" height="2.3" fill="url(#g28)"/><rect x="847.9" y="270" width="91.2" height="2.3" fill="url(#g29)"/><rect x="848.1" y="272" width="93.0" height="2.3" fill="url(#g30)"/><rect x="848.4" y="274" width="94.7" height="2.3" fill="url(#g31)"/><rect x="848.6" y="276" width="96.5" height="2.3" fill="url(#g32)"/><rect x="848.9" y="278" width="98.3" height="2.3" fill="url(#g33)"/><rect x="849.1" y="280" width="100.0" height="2.3" fill="url(#g34)"/><rect x="849.4" y="282" width="101.8" height="2.3" fill="url(#g35)"/><rect x="849.6" y="284" width="103.6" height="2.3" fill="url(#g36)"/><rect x="849.8" y="286" width="105.4" height="2.3" fill="url(#g37)"/><rect x="850.1" y="288" width="107.1" height="2.3" fill="url(#g38)"/><rect x="850.3" y="290" width="108.9" height="2.3" fill="url(#g39)"/><rect x="850.6" y="292" width="110.7" height="2.3" fill="url(#g40)"/><rect x="850.9" y="294" width="112.3" height="2.3" fill="url(#g41)"/><rect x="851.3" y="296" width="114.0" height="2.3" fill="url(#g42)"/><rect x="851.7" y="298" width="115.6" height="2.3" fill="url(#g43)"/><rect x="852.1" y="300" width="117.3" height="2.3" fill="url(#g44)"/><rect x="852.4" y="302" width="118.9" height="2.3" fill="url(#g45)"/><rect x="852.8" y="304" width="120.6" height="2.3" fill="url(#g46)"/><rect x="853.2" y="306" width="122.2" height="2.3" fill="url(#g47)"/><rect x="853.6" y="308" width="123.9" height="2.3" fill="url(#g48)"/><rect x="853.9" y="310" width="125.5" height="2.3" fill="url(#g49)"/><rect x="854.3" y="312" width="127.1" height="2.3" fill="url(#g50)"/><rect x="854.7" y="314" width="128.8" height="2.3" fill="url(#g51)"/><rect x="855.1" y="316" width="130.4" height="2.3" fill="url(#g52)"/><rect x="855.6" y="318" width="131.9" height="2.3" fill="url(#g53)"/><rect x="856.1" y="320" width="133.4" height="2.3" fill="url(#g54)"/><rect x="856.6" y="322" width="129.4" height="2.3" fill="url(#g55)"/><rect x="857.1" y="324" width="124.6" height="2.3" fill="url(#g56)"/><rect x="857.6" y="326" width="119.7" height="2.3" fill="url(#g57)"/><rect x="858.1" y="328" width="114.9" height="2.3" fill="url(#g58)"/><rect x="858.6" y="330" width="110.1" height="2.3" fill="url(#g59)"/><rect x="859.1" y="332" width="105.3" height="2.3" fill="url(#g60)"/><rect x="859.7" y="334" width="100.3" height="2.3" fill="url(#g61)"/><rect x="860.4" y="336" width="95.3" height="2.3" fill="url(#g62)"/><rect x="861.1" y="338" width="90.3" height="2.3" fill="url(#g63)"/><rect x="861.7" y="340" width="85.3" height="2.3" fill="url(#g64)"/><rect x="862.4" y="342" width="80.3" height="2.3" fill="url(#g65)"/><rect x="863.1" y="344" width="75.3" height="2.3" fill="url(#g66)"/><rect x="863.8" y="346" width="70.3" height="2.3" fill="url(#g67)"/><rect x="864.6" y="348" width="65.2" height="2.3" fill="url(#g68)"/><rect x="865.4" y="350" width="60.0" height="2.3" fill="url(#g69)"/><rect x="866.2" y="352" width="54.9" height="2.3" fill="url(#g70)"/><rect x="867.0" y="354" width="49.8" height="2.3" fill="url(#g71)"/><rect x="868.0" y="356" width="44.5" height="2.3" fill="url(#g72)"/><rect x="869.0" y="358" width="39.1" height="2.3" fill="url(#g73)"/><rect x="870.0" y="360" width="33.8" height="2.3" fill="url(#g74)"/><rect x="871.3" y="362" width="28.1" height="2.3" fill="url(#g75)"/><rect x="872.7" y="364" width="22.4" height="2.3" fill="url(#g76)"/><rect x="874.5" y="366" width="16.2" height="2.3" fill="url(#g77)"/><rect x="876.7" y="368" width="9.7" height="2.3" fill="url(#g78)"/></g><polygon points="880.9,370.8 880.9,370.9 880.8,370.9 880.7,370.9 880.4,370.8 879.9,370.5 879.1,369.7 877.6,368.4 876.5,367.5 875.2,366.1 873.5,364.2 871.4,360.8 868.6,355.3 865.1,346.5 860.8,333.6 856.3,315.6 852.1,293.2 849.2,269.2 848.3,247.1 850.3,228.9 855.0,217.1 861.8,213.0 869.5,214.4 877.2,218.3 884.5,222.9 891.6,228.1 898.5,233.8 905.4,239.9 912.2,246.3 919.0,252.8 925.9,259.5 932.6,266.1 939.3,272.7 945.7,279.1 951.9,285.2 957.8,291.0 963.1,296.3 967.7,300.8 971.7,304.9 975.1,308.2 977.8,310.9 980.0,313.1 981.8,314.8 983.2,316.2 984.3,317.3 985.3,318.3 986.1,319.0 986.6,319.6 987.4,320.4 988.3,321.3" fill="none" stroke="#3c5a3c" stroke-width="0.6" opacity="0.7"/><path d="M859.6 328 L959.7 290.5" stroke="#fff" stroke-width="1" fill="none"/><path d="M957.2 290.5 H962.2 M959.7 288.0 V293.0" stroke="#000" stroke-width="1" fill="none"/><path d="M946.0 293.7 L948.5999999999999 296.3 M948.5999999999999 293.7 L946.0 296.3" stroke="#000" stroke-width="0.8" fill="none"/><path d="M982.5999999999999 312.40000000000003 L987.0 316.8 M987.0 312.40000000000003 L982.5999999999999 316.8" stroke="#000" stroke-width="0.9" fill="none"/><circle cx="913.1" cy="308.4" r="2.25" fill="#aaa" stroke="#000" stroke-width="0.9"/><path d="M911.75 307.04999999999995 L914.45 309.75 M914.45 307.04999999999995 L911.75 309.75" stroke="#000" stroke-width="0.8"/><path d="M858.4 328 H860.8000000000001 M859.6 326.8 V329.2" stroke="#000" stroke-width="1" fill="none"/></svg>
<div style="left:841px;top:371px;width:5px;height:1px;background:#000;"></div>
<div style="left:841px;top:333px;width:5px;height:1px;background:#000;"></div>
<div style="left:841px;top:296px;width:5px;height:1px;background:#000;"></div>
<div style="left:841px;top:258px;width:5px;height:1px;background:#000;"></div>
<div style="left:841px;top:220px;width:5px;height:1px;background:#000;"></div>
<div style="left:841px;top:212px;width:5px;height:1px;background:#000;"></div>
<div style="left:848px;top:374px;width:1px;height:5px;background:#000;"></div>
<div style="left:887px;top:374px;width:1px;height:5px;background:#000;"></div>
<div style="left:926px;top:374px;width:1px;height:5px;background:#000;"></div>
<div style="left:965px;top:374px;width:1px;height:5px;background:#000;"></div>
<div style="left:992px;top:374px;width:1px;height:5px;background:#000;"></div>
<span class="t" style="left:808px;top:287.500px;font-size:11px;transform:rotate(-90deg);transform-origin:center;width:12px;text-align:center;">y</span>
<div style="left:21px;top:450px;width:982px;height:238px;background:#cbcbcb;"></div>
<div style="left:21px;top:450px;width:13px;height:238px;background:linear-gradient(to right,#dcdcdc,#d6d6d6 45%,#cbcbcb);"></div>
<div style="left:21px;top:450px;width:982px;height:2px;background:#d9d9d9;clip-path:polygon(0 0,100% 0,calc(100% - 2px) 100%,0 100%);"></div>
<div style="left:990px;top:450px;width:13px;height:238px;background:linear-gradient(to right,#c4c4c4,#b0b0b0 40%,#8e8e8e 78%,#6a6a6a 92%,#444 100%);clip-path:polygon(100% 0,100% 100%,0 100%,0 5px,60% 2px);"></div>
<div style="left:24px;top:686px;width:979px;height:2px;background:linear-gradient(to bottom,#bcbcbc 50%,#808080 50%);"></div>
<div style="left:98px;top:457px;width:884px;height:190px;background:#000;"></div>
<div style="left:92px;top:458px;width:5px;height:1px;background:#000;"></div>
<div style="left:92px;top:479px;width:5px;height:1px;background:#000;"></div>
<div style="left:92px;top:500px;width:5px;height:1px;background:#000;"></div>
<div style="left:92px;top:521px;width:5px;height:1px;background:#000;"></div>
<div style="left:92px;top:542px;width:5px;height:1px;background:#000;"></div>
<div style="left:92px;top:563px;width:5px;height:1px;background:#000;"></div>
<div style="left:92px;top:584px;width:5px;height:1px;background:#000;"></div>
<div style="left:92px;top:604px;width:5px;height:1px;background:#000;"></div>
<div style="left:92px;top:625px;width:5px;height:1px;background:#000;"></div>
<div style="left:92px;top:646px;width:5px;height:1px;background:#000;"></div>
<div style="left:99px;top:649px;width:1px;height:5px;background:#000;"></div>
<div style="left:131px;top:649px;width:1px;height:5px;background:#000;"></div>
<div style="left:162px;top:649px;width:1px;height:5px;background:#000;"></div>
<div style="left:194px;top:649px;width:1px;height:5px;background:#000;"></div>
<div style="left:225px;top:649px;width:1px;height:5px;background:#000;"></div>
<div style="left:257px;top:649px;width:1px;height:5px;background:#000;"></div>
<div style="left:288px;top:649px;width:1px;height:5px;background:#000;"></div>
<div style="left:320px;top:649px;width:1px;height:5px;background:#000;"></div>
<div style="left:351px;top:649px;width:1px;height:5px;background:#000;"></div>
<div style="left:383px;top:649px;width:1px;height:5px;background:#000;"></div>
<div style="left:414px;top:649px;width:1px;height:5px;background:#000;"></div>
<div style="left:446px;top:649px;width:1px;height:5px;background:#000;"></div>
<div style="left:477px;top:649px;width:1px;height:5px;background:#000;"></div>
<div style="left:509px;top:649px;width:1px;height:5px;background:#000;"></div>
<div style="left:540px;top:649px;width:1px;height:5px;background:#000;"></div>
<div style="left:572px;top:649px;width:1px;height:5px;background:#000;"></div>
<div style="left:603px;top:649px;width:1px;height:5px;background:#000;"></div>
<div style="left:635px;top:649px;width:1px;height:5px;background:#000;"></div>
<div style="left:666px;top:649px;width:1px;height:5px;background:#000;"></div>
<div style="left:698px;top:649px;width:1px;height:5px;background:#000;"></div>
<div style="left:729px;top:649px;width:1px;height:5px;background:#000;"></div>
<div style="left:761px;top:649px;width:1px;height:5px;background:#000;"></div>
<div style="left:792px;top:649px;width:1px;height:5px;background:#000;"></div>
<div style="left:824px;top:649px;width:1px;height:5px;background:#000;"></div>
<div style="left:855px;top:649px;width:1px;height:5px;background:#000;"></div>
<div style="left:887px;top:649px;width:1px;height:5px;background:#000;"></div>
<div style="left:918px;top:649px;width:1px;height:5px;background:#000;"></div>
<div style="left:950px;top:649px;width:1px;height:5px;background:#000;"></div>
<div style="left:981px;top:649px;width:1px;height:5px;background:#000;"></div>
<span class="t" style="left:-6px;top:546px;width:120px;text-align:center;font-size:11px;transform:rotate(-90deg);transform-origin:center;">Spectral Radiant Flux</span>
<svg style="left:98px;top:457px" width="884" height="190" viewBox="98 457 884 190"><polyline points="124.7,625.5 125.2,625.5 125.7,625.5 126.2,625.5 126.7,625.5 127.2,625.5 127.7,625.5 128.2,625.5 128.7,625.5 129.2,625.5 129.7,625.5 130.2,625.5 130.7,625.5 131.2,625.5 131.7,625.5 132.2,625.5 132.7,625.5 133.2,625.5 133.7,625.5 134.2,625.5 134.7,625.5 135.2,625.5 135.7,625.5 136.2,625.5 136.7,625.5 137.2,625.5 137.7,625.5 138.2,625.5 138.7,625.5 139.2,625.5 139.7,625.5 140.2,625.5 140.7,625.5 141.2,625.5 141.7,625.5 142.2,625.5 142.7,625.5 143.2,625.5 143.7,625.5 144.2,625.5 144.7,625.5 145.2,625.5 145.7,625.5 146.2,625.5 146.7,625.5 147.2,625.5 147.7,625.4 148.2,625.5 148.7,625.5 149.2,625.5 149.7,625.5 150.2,625.5 150.7,625.5 151.2,625.5 151.7,625.5 152.2,625.5 152.7,625.5 153.2,625.5 153.7,625.5 154.2,625.5 154.7,625.5 155.2,625.5 155.7,625.5 156.2,625.5 156.7,625.5 157.2,625.5 157.7,625.5 158.2,625.4 158.7,625.4 159.2,625.5 159.7,625.5 160.2,625.5 160.7,625.4 161.2,625.4 161.7,625.5 162.2,625.5 162.7,625.5 163.2,625.5 163.7,625.5 164.2,625.5 164.7,625.5 165.2,625.5 165.7,625.5 166.2,625.5 166.7,625.5 167.2,625.5 167.7,625.4 168.2,625.5 168.7,625.5 169.2,625.5 169.7,625.4 170.2,625.5 170.7,625.5 171.2,625.4 171.7,625.5 172.2,625.5 172.7,625.4 173.2,625.5 173.7,625.5 174.2,625.5 174.7,625.5 175.2,625.5 175.7,625.5 176.2,625.5 176.7,625.5 177.2,625.5 177.7,625.5 178.2,625.5 178.7,625.4 179.2,625.5 179.7,625.5 180.2,625.5 180.7,625.4 181.2,625.5 181.7,625.5 182.2,625.5 182.7,625.5 183.2,625.4 183.7,625.5 184.2,625.4 184.7,625.4 185.2,625.5 185.7,625.5 186.2,625.5 186.7,625.5 187.2,625.5 187.7,625.5 188.2,625.5 188.7,625.5 189.2,625.5 189.7,625.5 190.2,625.5 190.7,625.5 191.2,625.5 191.7,625.5 192.2,625.5 192.7,625.4 193.2,625.4 193.7,625.5 194.2,625.5 194.7,625.4 195.2,625.5 195.7,625.5 196.2,625.4 196.7,625.4 197.2,625.5 197.7,625.5 198.2,625.5 198.7,625.4 199.2,625.5 199.7,625.5 200.2,625.4 200.7,625.5 201.2,625.5 201.7,625.4 202.2,625.4 202.7,625.4 203.2,625.4 203.7,625.4 204.2,625.4 204.7,625.5 205.2,625.4 205.7,625.4 206.2,625.5 206.7,625.5 207.2,625.5 207.7,625.4 208.2,625.4 208.7,625.4 209.2,625.5 209.7,625.5 210.2,625.4 210.7,625.5 211.2,625.4 211.7,625.5 212.2,625.4 212.7,625.4 213.2,625.5 213.7,625.4 214.2,625.4 214.7,625.5 215.2,625.4 215.7,625.4 216.2,625.5 216.7,625.5 217.2,625.4 217.7,625.5 218.2,625.4 218.7,625.5 219.2,625.4 219.7,625.4 220.2,625.5 220.7,625.4 221.2,625.5 221.7,625.4 222.2,625.4 222.7,625.5 223.2,625.4 223.7,625.4 224.2,625.4 224.7,625.5 225.2,625.5 225.7,625.5 226.2,625.4 226.7,625.4 227.2,625.4 227.7,625.5 228.2,625.5 228.7,625.4 229.2,625.5 229.7,625.5 230.2,625.4 230.7,625.4 231.2,625.5 231.7,625.4 232.2,625.4 232.7,625.4 233.2,625.4 233.7,625.5 234.2,625.4 234.7,625.5 235.2,625.5 235.7,625.5 236.2,625.4 236.7,625.4 237.2,625.4 237.7,625.4 238.2,625.4 238.7,625.5 239.2,625.4 239.7,625.4 240.2,625.4 240.7,625.4 241.2,625.4 241.7,625.4 242.2,625.4 242.7,625.4 243.2,625.4 243.7,625.4 244.2,625.5 244.7,625.4 245.2,625.4 245.7,625.5 246.2,625.5 246.7,625.4 247.2,625.4 247.7,625.4 248.2,625.4 248.7,625.4 249.2,625.4 249.7,625.4 250.2,625.4 250.7,625.4 251.2,625.4 251.7,625.4 252.2,625.4 252.7,625.5 253.2,625.4 253.7,625.4 254.2,625.4 254.7,625.4 255.2,625.4 255.7,625.4 256.2,625.4 256.7,625.4 257.2,625.4 257.7,625.4 258.2,625.4 258.7,625.4 259.2,625.4 259.7,625.4 260.2,625.4 260.7,625.4 261.2,625.4 261.7,625.4 262.2,625.4 262.7,625.4 263.2,625.4 263.7,625.4 264.2,625.4 264.7,625.4 265.2,625.4 265.7,625.4 266.2,625.4 266.7,625.4 267.2,625.4 267.7,625.4 268.2,625.4 268.7,625.4 269.2,625.4 269.7,625.4 270.2,625.4 270.7,625.4 271.2,625.4 271.7,625.4 272.2,625.4 272.7,625.4 273.2,625.4 273.7,625.4 274.2,625.4 274.7,625.4 275.2,625.4 275.7,625.4 276.2,625.4 276.7,625.4 277.2,625.4 277.7,625.4 278.2,625.5 278.7,625.4 279.2,625.4 279.7,625.4 280.2,625.4 280.7,625.4 281.2,625.4 281.7,625.4 282.2,625.4 282.7,625.4 283.2,625.4 283.7,625.4 284.2,625.4 284.7,625.4 285.2,625.4 285.7,625.4 286.2,625.4 286.7,625.4 287.2,625.4 287.7,625.5 288.2,625.4 288.7,625.4 289.2,625.3 289.7,625.4 290.2,625.4 290.7,625.4 291.2,625.4 291.7,625.4 292.2,625.4 292.7,625.4 293.2,625.4 293.7,625.4 294.2,625.4 294.7,625.4 295.2,625.4 295.7,625.4 296.2,625.4 296.7,625.4 297.2,625.4 297.7,625.4 298.2,625.4 298.7,625.4 299.2,625.4 299.7,625.4 300.2,625.4 300.7,625.4 301.2,625.4 301.7,625.4 302.2,625.4 302.7,625.4 303.2,625.4 303.7,625.3 304.2,625.4 304.7,625.4 305.2,625.4 305.7,625.4 306.2,625.4 306.7,625.4 307.2,625.4 307.7,625.4 308.2,625.4 308.7,625.4 309.2,625.4 309.7,625.4 310.2,625.4 310.7,625.4 311.2,625.4 311.7,625.4 312.2,625.4 312.7,625.4 313.2,625.4 313.7,625.4 314.2,625.4 314.7,625.4 315.2,625.4 315.7,625.4 316.2,625.4 316.7,625.4 317.2,625.4 317.7,625.3 318.2,625.4 318.7,625.4 319.2,625.4 319.7,625.4 320.2,625.3 320.7,625.4 321.2,625.4 321.7,625.4 322.2,625.3 322.7,625.4 323.2,625.4 323.7,625.4 324.2,625.4 324.7,625.4 325.2,625.4 325.7,625.4 326.2,625.4 326.7,625.4 327.2,625.4 327.7,625.4 328.2,625.4 328.7,625.4 329.2,625.4 329.7,625.4 330.2,625.4 330.7,625.4 331.2,625.4 331.7,625.4 332.2,625.4 332.7,625.4 333.2,625.4 333.7,625.4 334.2,625.4 334.7,625.4 335.2,625.4 335.7,625.4 336.2,625.4 336.7,625.3 337.2,625.4 337.7,625.4 338.2,625.4 338.7,625.4 339.2,625.4 339.7,625.4 340.2,625.4 340.7,625.4 341.2,625.4 341.7,625.4 342.2,625.4 342.7,625.3 343.2,625.4 343.7,625.4 344.2,625.3 344.7,625.4 345.2,625.3 345.7,625.3 346.2,625.4 346.7,625.4 347.2,625.4 347.7,625.4 348.2,625.3 348.7,625.4 349.2,625.4 349.7,625.4 350.2,625.3 350.7,625.4 351.2,625.3 351.7,625.4 352.2,625.4 352.7,625.3 353.2,625.4 353.7,625.4 354.2,625.3 354.7,625.3 355.2,625.3 355.7,625.3 356.2,625.3 356.7,625.4 357.2,625.4 357.7,625.4 358.2,625.4 358.7,625.4 359.2,625.4 359.7,625.3 360.2,625.3 360.7,625.3 361.2,625.3 361.7,625.3 362.2,625.4 362.7,625.4 363.2,625.3 363.7,625.3 364.2,625.3 364.7,625.3 365.2,625.3 365.7,625.3 366.2,625.3 366.7,625.4 367.2,625.4 367.7,625.3 368.2,625.3 368.7,625.3 369.2,625.3 369.7,625.3 370.2,625.3 370.7,625.3 371.2,625.3 371.7,625.3 372.2,625.3 372.7,625.3 373.2,625.3 373.7,625.4 374.2,625.4 374.7,625.3 375.2,625.3 375.7,625.3 376.2,625.3 376.7,625.4 377.2,625.3 377.7,625.3 378.2,625.3 378.7,625.3 379.2,625.3 379.7,625.3 380.2,625.3 380.7,625.3 381.2,625.3 381.7,625.3 382.2,625.3 382.7,625.4 383.2,625.3 383.7,625.4 384.2,625.3 384.7,625.4 385.2,625.3 385.7,625.3 386.2,625.3 386.7,625.3 387.2,625.4 387.7,625.3 388.2,625.4 388.7,625.3 389.2,625.4 389.7,625.3 390.2,625.3 390.7,625.3 391.2,625.3 391.7,625.4 392.2,625.3 392.7,625.3 393.2,625.4 393.7,625.3 394.2,625.3 394.7,625.4 395.2,625.3 395.7,625.3 396.2,625.3 396.7,625.3 397.2,625.3 397.7,625.3 398.2,625.4 398.7,625.4 399.2,625.3 399.7,625.3 400.2,625.3 400.7,625.4 401.2,625.3 401.7,625.3 402.2,625.3 402.7,625.3 403.2,625.3 403.7,625.4 404.2,625.3 404.7,625.3 405.2,625.3 405.7,625.3 406.2,625.3 406.7,625.4 407.2,625.3 407.7,625.3 408.2,625.4 408.7,625.3 409.2,625.3 409.7,625.3 410.2,625.3 410.7,625.3 411.2,625.4 411.7,625.3 412.2,625.3 412.7,625.3 413.2,625.3 413.7,625.3 414.2,625.3 414.7,625.3 415.2,625.3 415.7,625.3 416.2,625.3 416.7,625.3 417.2,625.3 417.7,625.3 418.2,625.3 418.7,625.3 419.2,625.3 419.7,625.3 420.2,625.3 420.7,625.3 421.2,625.3 421.7,625.3 422.2,625.3 422.7,625.3 423.2,625.3 423.7,625.3 424.2,625.3 424.7,625.3 425.2,625.3 425.7,625.3 426.2,625.4 426.7,625.3 427.2,625.3 427.7,625.4 428.2,625.3 428.7,625.3 429.2,625.3 429.7,625.3 430.2,625.3 430.7,625.3 431.2,625.3 431.7,625.3 432.2,625.3 432.7,625.3 433.2,625.3 433.7,625.3 434.2,625.3 434.7,625.3 435.2,625.3 435.7,625.3 436.2,625.3 436.7,625.3 437.2,625.3 437.7,625.3 438.2,625.3 438.7,625.3 439.2,625.3 439.7,625.3 440.2,625.3 440.7,625.3 441.2,625.3 441.7,625.3 442.2,625.3 442.7,625.3 443.2,625.2 443.7,625.1 444.2,625.0 444.7,624.9 445.2,624.8 445.7,624.7 446.2,624.6 446.7,624.5 447.2,624.4 447.7,624.2 448.2,624.2 448.7,624.1 449.2,623.9 449.7,623.9 450.2,623.8 450.7,623.7 451.2,623.6 451.7,623.4 452.2,623.3 452.7,623.3 453.2,623.1 453.7,623.0 454.2,622.9 454.7,622.8 455.2,622.7 455.7,622.7 456.2,622.5 456.7,622.4 457.2,622.4 457.7,622.2 458.2,622.1 458.7,622.0 459.2,621.9 459.7,621.8 460.2,621.7 460.7,621.6 461.2,621.5 461.7,621.4 462.2,621.3 462.7,621.2 463.2,621.1 463.7,621.0 464.2,620.9 464.7,620.8 465.2,620.7 465.7,620.6 466.2,620.5 466.7,620.4 467.2,620.3 467.7,620.2 468.2,620.2 468.7,620.1 469.2,620.0 469.7,619.9 470.2,619.8 470.7,619.7 471.2,619.6 471.7,619.5 472.2,619.5 472.7,619.4 473.2,619.3 473.7,619.2 474.2,619.1 474.7,619.0 475.2,619.0 475.7,618.9 476.2,618.8 476.7,618.7 477.2,618.6 477.7,618.5 478.2,618.4 478.7,618.4 479.2,618.3 479.7,618.2 480.2,618.1 480.7,618.0 481.2,617.9 481.7,617.8 482.2,617.8 482.7,617.6 483.2,617.6 483.7,617.5 484.2,617.4 484.7,617.3 485.2,617.2 485.7,617.2 486.2,617.1 486.7,617.0 487.2,616.9 487.7,616.8 488.2,616.7 488.7,616.6 489.2,616.5 489.7,616.5 490.2,616.4 490.7,616.3 491.2,616.2 491.7,616.3 492.2,616.2 492.7,616.2 493.2,616.1 493.7,616.0 494.2,616.0 494.7,615.9 495.2,615.9 495.7,615.8 496.2,615.8 496.7,615.8 497.2,615.7 497.7,615.7 498.2,615.6 498.7,615.6 499.2,615.5 499.7,615.5 500.2,615.4 500.7,615.3 501.2,615.4 501.7,615.3 502.2,615.2 502.7,615.2 503.2,615.1 503.7,615.1 504.2,615.1 504.7,615.0 505.2,615.0 505.7,614.9 506.2,614.8 506.7,614.8 507.2,614.8 507.7,614.7 508.2,614.6 508.7,614.6 509.2,614.6 509.7,614.5 510.2,614.5 510.7,614.4 511.2,614.3 511.7,614.3 512.2,614.3 512.7,614.2 513.2,614.2 513.7,614.1 514.2,614.1 514.7,614.0 515.2,614.0 515.7,614.0 516.2,613.9 516.7,613.8 517.2,613.8 517.7,613.7 518.2,613.7 518.7,613.6 519.2,613.6 519.7,613.6 520.2,613.4 520.7,613.4 521.2,613.4 521.7,613.3 522.2,613.3 522.7,613.2 523.2,613.1 523.7,613.1 524.2,613.0 524.7,613.0 525.2,612.9 525.7,612.9 526.2,612.8 526.7,612.8 527.2,612.7 527.7,612.7 528.2,612.6 528.7,612.6 529.2,612.6 529.7,612.5 530.2,612.4 530.7,612.4 531.2,612.3 531.7,612.2 532.2,612.3 532.7,612.2 533.2,612.1 533.7,612.1 534.2,612.0 534.7,612.0 535.2,611.9 535.7,611.8 536.2,611.8 536.7,611.7 537.2,611.7 537.7,611.6 538.2,611.6 538.7,611.5 539.2,611.4 539.7,611.4 540.2,611.4 540.7,611.3 541.2,611.3 541.7,611.2 542.2,611.2 542.7,611.1 543.2,611.1 543.7,611.0 544.2,611.0 544.7,611.0 545.2,610.9 545.7,610.8 546.2,610.8 546.7,610.7 547.2,610.7 547.7,610.6 548.2,610.6 548.7,610.5 549.2,610.5 549.7,610.4 550.2,610.4 550.7,610.3 551.2,610.3 551.7,610.3 552.2,610.1 552.7,610.1 553.2,610.1 553.7,610.0 554.2,610.0 554.7,610.0 555.2,609.9 555.7,609.8 556.2,609.8 556.7,609.7 557.2,609.7 557.7,609.6 558.2,609.6 558.7,609.5 559.2,609.5 559.7,609.4 560.2,609.4 560.7,609.3 561.2,609.3 561.7,609.2 562.2,609.2 562.7,609.1 563.2,609.1 563.7,609.0 564.2,609.0 564.7,608.9 565.2,608.9 565.7,608.8 566.2,608.7 566.7,608.7 567.2,608.6 567.7,608.6 568.2,608.5 568.7,608.4 569.2,608.4 569.7,608.3 570.2,608.3 570.7,608.2 571.2,608.1 571.7,608.1 572.2,608.0 572.7,607.9 573.2,607.9 573.7,607.8 574.2,607.8 574.7,607.7 575.2,607.7 575.7,607.6 576.2,607.5 576.7,607.5 577.2,607.3 577.7,607.3 578.2,607.3 578.7,607.2 579.2,607.1 579.7,607.1 580.2,607.0 580.7,606.9 581.2,606.9 581.7,606.8 582.2,606.8 582.7,606.7 583.2,606.6 583.7,606.6 584.2,606.5 584.7,606.4 585.2,606.4 585.7,606.4 586.2,606.3 586.7,606.2 587.2,606.2 587.7,606.1 588.2,606.0 588.7,605.9 589.2,605.9 589.7,605.9 590.2,605.8 590.7,605.7 591.2,605.6 591.7,605.6 592.2,605.5 592.7,605.5 593.2,605.4 593.7,605.3 594.2,605.2 594.7,605.2 595.2,605.1 595.7,605.1 596.2,605.0 596.7,604.9 597.2,604.8 597.7,604.8 598.2,604.7 598.7,604.6 599.2,604.6 599.7,604.5 600.2,604.4 600.7,604.4 601.2,604.4 601.7,604.1 602.2,604.2 602.7,604.2 603.2,604.1 603.7,604.0 604.2,603.7 604.7,604.0 605.2,603.8 605.7,603.7 606.2,603.6 606.7,603.6 607.2,603.5 607.7,603.3 608.2,603.3 608.7,603.3 609.2,603.2 609.7,603.1 610.2,603.2 610.7,602.9 611.2,603.1 611.7,602.8 612.2,602.9 612.7,603.0 613.2,602.8 613.7,602.6 614.2,602.6 614.7,602.6 615.2,602.2 615.7,602.3 616.2,602.4 616.7,602.2 617.2,602.2 617.7,602.3 618.2,602.2 618.7,602.1 619.2,602.0 619.7,601.9 620.2,601.8 620.7,601.7 621.2,601.7 621.7,601.6 622.2,601.3 622.7,601.5 623.2,601.4 623.7,601.3 624.2,601.3 624.7,601.3 625.2,601.2 625.7,601.4 626.2,600.7 626.7,601.0 627.2,600.7 627.7,601.0 628.2,601.2 628.7,600.4 629.2,600.7 629.7,600.7 630.2,600.5 630.7,600.6 631.2,600.1 631.7,600.5 632.2,600.4 632.7,600.2 633.2,600.1 633.7,600.2 634.2,600.0 634.7,600.0 635.2,599.8 635.7,599.5 636.2,599.8 636.7,599.8 637.2,599.8 637.7,599.5 638.2,599.5 638.7,599.6 639.2,599.4 639.7,599.5 640.2,599.6 640.7,599.1 641.2,598.9 641.7,599.3 642.2,599.3 642.7,599.2 643.2,599.1 643.7,598.9 644.2,598.8 644.7,599.0 645.2,598.7 645.7,598.5 646.2,598.6 646.7,599.1 647.2,598.9 647.7,598.5 648.2,598.4 648.7,598.5 649.2,598.3 649.7,598.6 650.2,598.3 650.7,598.1 651.2,598.5 651.7,598.1 652.2,598.2 652.7,598.1 653.2,598.0 653.7,598.1 654.2,597.9 654.7,597.6 655.2,597.5 655.7,597.6 656.2,597.7 656.7,597.8 657.2,597.7 657.7,597.8 658.2,597.6 658.7,597.4 659.2,597.4 659.7,597.1 660.2,597.4 660.7,597.5 661.2,597.4 661.7,597.3 662.2,597.2 662.7,597.4 663.2,597.2 663.7,597.2 664.2,597.2 664.7,597.1 665.2,597.2 665.7,596.8 666.2,596.8 666.7,596.7 667.2,596.7 667.7,597.1 668.2,597.1 668.7,596.7 669.2,596.8 669.7,596.8 670.2,596.7 670.7,596.8 671.2,596.3 671.7,596.3 672.2,596.5 672.7,596.6 673.2,596.4 673.7,596.1 674.2,596.2 674.7,596.1 675.2,596.0 675.7,596.4 676.2,596.0 676.7,596.1 677.2,596.4 677.7,596.2 678.2,596.0 678.7,595.8 679.2,595.9 679.7,596.1 680.2,595.9 680.7,596.0 681.2,595.7 681.7,595.8 682.2,595.6 682.7,595.7 683.2,595.8 683.7,595.2 684.2,595.5 684.7,595.5 685.2,595.3 685.7,595.3 686.2,595.5 686.7,595.6 687.2,595.3 687.7,595.2 688.2,594.8 688.7,595.5 689.2,595.1 689.7,595.0 690.2,594.8 690.7,594.9 691.2,594.7 691.7,594.9 692.2,594.9 692.7,594.8 693.2,594.8 693.7,594.5 694.2,594.9 694.7,594.5 695.2,594.2 695.7,594.5 696.2,594.4 696.7,594.3 697.2,594.4 697.7,594.4 698.2,594.1 698.7,594.3 699.2,594.6 699.7,594.4 700.2,594.2 700.7,594.2 701.2,594.1 701.7,594.1 702.2,594.2 702.7,594.0 703.2,593.4 703.7,593.9 704.2,593.7 704.7,594.0 705.2,593.7 705.7,593.8 706.2,594.2 706.7,593.4 707.2,593.4 707.7,593.3 708.2,593.0 708.7,593.1 709.2,593.5 709.7,593.3 710.2,593.0 710.7,593.0 711.2,593.4 711.7,593.1 712.2,593.1 712.7,593.3 713.2,593.4 713.7,593.5 714.2,593.3 714.7,593.1 715.2,593.0 715.7,593.4 716.2,593.3 716.7,592.9 717.2,593.0 717.7,593.0 718.2,592.9 718.7,592.8 719.2,592.6 719.7,592.7 720.2,592.5 720.7,593.1 721.2,592.9 721.7,592.5 722.2,593.1 722.7,593.0 723.2,592.3 723.7,593.2 724.2,592.9 724.7,593.2 725.2,592.4 725.7,592.8 726.2,592.8 726.7,592.7 727.2,592.7 727.7,592.9 728.2,592.3 728.7,592.3 729.2,592.3 729.7,592.5 730.2,592.4 730.7,592.6 731.2,592.6 731.7,592.5 732.2,592.4 732.7,592.4 733.2,592.6 733.7,592.4 734.2,592.1 734.7,591.9 735.2,592.3 735.7,591.6 736.2,591.8 736.7,591.8 737.2,591.4 737.7,591.5 738.2,591.0 738.7,591.3 739.2,591.0 739.7,590.5 740.2,590.9 740.7,590.4 741.2,590.8 741.7,590.3 742.2,590.3 742.7,590.3 743.2,590.0 743.7,590.0 744.2,589.7 744.7,589.9 745.2,589.6 745.7,589.6 746.2,588.8 746.7,589.6 747.2,589.2 747.7,588.6 748.2,589.0 748.7,589.0 749.2,589.0 749.7,588.4 750.2,588.9 750.7,588.4 751.2,588.9 751.7,588.1 752.2,588.2 752.7,587.9 753.2,587.6 753.7,588.1 754.2,588.0 754.7,588.1 755.2,587.8 755.7,587.4 756.2,587.1 756.7,587.2 757.2,587.2 757.7,587.1 758.2,587.3 758.7,587.2 759.2,587.0 759.7,587.0 760.2,586.9 760.7,586.9 761.2,587.0 761.7,587.0 762.2,586.5 762.7,586.2 763.2,586.9 763.7,586.5 764.2,586.6 764.7,585.9 765.2,586.1 765.7,586.2 766.2,585.7 766.7,585.9 767.2,586.1 767.7,586.2 768.2,586.2 768.7,585.5 769.2,585.3 769.7,585.7 770.2,585.8 770.7,585.5 771.2,585.0 771.7,585.5 772.2,585.5 772.7,585.3 773.2,585.0 773.7,585.1 774.2,585.2 774.7,584.7 775.2,584.3 775.7,584.8 776.2,584.8 776.7,584.6 777.2,584.8 777.7,584.3 778.2,584.4 778.7,584.3 779.2,584.5 779.7,584.7 780.2,584.2 780.7,584.7 781.2,584.5 781.7,584.3 782.2,584.2 782.7,584.5 783.2,583.9 783.7,583.8 784.2,583.5 784.7,583.9 785.2,584.1 785.7,583.8 786.2,583.7 786.7,583.5 787.2,583.6 787.7,583.1 788.2,583.7 788.7,583.3 789.2,583.0 789.7,583.1 790.2,583.0 790.7,583.4 791.2,583.4 791.7,582.7 792.2,583.3 792.7,583.2 793.2,582.8 793.7,582.5 794.2,582.6 794.7,582.6 795.2,582.8 795.7,582.6 796.2,582.1 796.7,582.6 797.2,582.1 797.7,582.7 798.2,582.1 798.7,582.2 799.2,582.1 799.7,582.1 800.2,582.6 800.7,582.4 801.2,582.3 801.7,582.2 802.2,581.6 802.7,581.8 803.2,581.8 803.7,581.6 804.2,582.0 804.7,581.6 805.2,581.6 805.7,581.4 806.2,581.1 806.7,581.8 807.2,582.0 807.7,581.6 808.2,581.2 808.7,580.7 809.2,581.5 809.7,581.7 810.2,581.4 810.7,581.6 811.2,581.7 811.7,581.5 812.2,581.0 812.7,581.4 813.2,581.3 813.7,580.6 814.2,580.9 814.7,580.5 815.2,580.9 815.7,581.0 816.2,580.5 816.7,580.2 817.2,581.1 817.7,580.8 818.2,581.1 818.7,580.2 819.2,580.9 819.7,581.2 820.2,581.1 820.7,580.4 821.2,580.6 821.7,580.4 822.2,580.8 822.7,580.8 823.2,580.5 823.7,580.0 824.2,580.6 824.7,580.3 825.2,580.6 825.7,580.5 826.2,580.9 826.7,580.7 827.2,580.2 827.7,580.5 828.2,580.9 828.7,580.2 829.2,580.5 829.7,580.7 830.2,580.7 830.7,580.4 831.2,579.9 831.7,579.9 832.2,580.3 832.7,580.4 833.2,581.0 833.7,580.0 834.2,580.6 834.7,580.4 835.2,579.7 835.7,579.9 836.2,580.2 836.7,580.0 837.2,580.1 837.7,580.3 838.2,579.9 838.7,580.3 839.2,579.9 839.7,579.9 840.2,580.3 840.7,579.9 841.2,580.2 841.7,580.6 842.2,580.1 842.7,580.0 843.2,580.3 843.7,579.9 844.2,580.4 844.7,579.6 845.2,580.2 845.7,579.8 846.2,579.7 846.7,580.5 847.2,579.6 847.7,580.4 848.2,580.1 848.7,580.3 849.2,579.5 849.7,580.2 850.2,580.2 850.7,579.7 851.2,579.6 851.7,580.5 852.2,579.7 852.7,579.5 853.2,579.4 853.7,579.7 854.2,579.6 854.7,579.6 855.2,580.1 855.7,579.4 856.2,579.6 856.7,579.9 857.2,579.1 857.7,579.7 858.2,580.0 858.7,578.9 859.2,578.9 859.7,578.9 860.2,578.6 860.7,579.4 861.2,578.6 861.7,579.3 862.2,579.6 862.7,578.6 863.2,579.1 863.7,578.8 864.2,580.0 864.7,579.7 865.2,580.1 865.7,580.5 866.2,580.9 866.7,580.9 867.2,581.3 867.7,581.7 868.2,582.6 868.7,582.9 869.2,584.0 869.7,584.0 870.2,585.2 870.7,586.7 871.2,586.8 871.7,587.0 872.2,588.2 872.7,588.5 873.2,588.8 873.7,589.5 874.2,590.5 874.7,590.8 875.2,591.1 875.7,591.2 876.2,591.6 876.7,592.9 877.2,592.9 877.7,592.9 878.2,593.0 878.7,593.0 879.2,594.0 879.7,592.4 880.2,592.4 880.7,592.2 881.2,591.7 881.7,591.3 882.2,590.5 882.7,590.3 883.2,590.9 883.7,589.7 884.2,589.9 884.7,588.6 885.2,588.7 885.7,588.3 886.2,588.0 886.7,586.7 887.2,586.7 887.7,586.1 888.2,585.1 888.7,585.0 889.2,583.9 889.7,583.4 890.2,583.1 890.7,581.5 891.2,581.9 891.7,581.0 892.2,580.3 892.7,580.1 893.2,579.9 893.7,579.0 894.2,579.0 894.7,577.6 895.2,576.9 895.7,577.4 896.2,576.4 896.7,576.1 897.2,574.9 897.7,574.9 898.2,574.1 898.7,573.7 899.2,572.9 899.7,572.8 900.2,571.6 900.7,570.9 901.2,570.2 901.7,570.5 902.2,569.3 902.7,568.7 903.2,568.4 903.7,568.2 904.2,567.6 904.7,567.6 905.2,567.1 905.7,566.8 906.2,566.3 906.7,566.3 907.2,565.8 907.7,565.6 908.2,565.3 908.7,565.0 909.2,563.7 909.7,564.0 910.2,563.5 910.7,563.8 911.2,562.5 911.7,562.6 912.2,562.5 912.7,562.2 913.2,562.5 913.7,561.6 914.2,562.0 914.7,560.6 915.2,560.1 915.7,561.3 916.2,560.7 916.7,560.4 917.2,560.0 917.7,559.9 918.2,558.7 918.7,559.6 919.2,558.5 919.7,559.1 920.2,558.3 920.7,556.9 921.2,557.0 921.7,558.1 922.2,557.1 922.7,556.7 923.2,556.8 923.7,556.1 924.2,555.8 924.7,555.9 925.2,555.8 925.7,556.4 926.2,555.3 926.7,556.2 927.2,555.9 927.7,555.7 928.2,555.1 928.7,554.3 929.2,554.1 929.7,553.7 930.2,553.1 930.7,553.3 931.2,552.7 931.7,554.1 932.2,553.1 932.7,552.2 933.2,551.0 933.7,552.1 934.2,551.6 934.7,550.9 935.2,550.7 935.7,549.7 936.2,551.5 936.7,550.8 937.2,552.6 937.7,550.5 938.2,550.5 938.7,551.9 939.2,551.0 939.7,551.2 940.2,550.9 940.7,550.8 941.2,552.6 941.7,552.3 942.2,552.9 942.7,551.0 943.2,551.1 943.7,550.2 944.2,551.5 944.7,549.4 945.2,550.8 945.7,551.0 946.2,551.1 946.7,548.9 947.2,550.4 947.7,548.7 948.2,548.5 948.7,547.8 949.2,549.7 949.7,550.0 950.2,547.8 950.7,547.4 951.2,547.6 951.7,550.0 952.2,548.4 952.7,546.8 953.2,545.5 953.7,546.3 954.2,547.8 954.7,548.2 955.2,545.9 955.7,545.3 956.2,545.2 956.7,543.7 957.2,546.1 957.7,544.0 958.2,545.8 958.7,542.9 959.2,543.1 959.7,544.4 960.2,543.1 960.7,544.4 961.2,543.4 961.7,542.0 962.2,543.6 962.7,543.6 963.2,540.5 963.7,544.2 964.2,542.5 964.7,542.6 965.2,539.6 965.7,540.6 966.2,540.7 966.7,542.1 967.2,539.2 967.7,539.7 968.2,538.3 968.7,540.1 969.2,540.6 969.7,538.2 970.2,539.3 970.7,540.3 971.2,541.4 971.7,540.2 972.2,539.0 972.7,537.8 973.2,538.0 973.7,538.1 974.2,538.9 974.7,538.5 975.2,540.4 975.7,538.6 976.2,536.9 976.7,539.8" fill="none" stroke="#d45cf2" stroke-width="1" shape-rendering="crispEdges"/><polyline points="124.7,626.0 125.2,625.5 125.7,625.1 126.2,624.5 126.7,624.9 127.2,626.0 127.7,625.0 128.2,624.7 128.7,625.6 129.2,625.6 129.7,625.8 130.2,625.8 130.7,626.2 131.2,625.0 131.7,625.9 132.2,624.9 132.7,625.8 133.2,625.5 133.7,625.5 134.2,625.9 134.7,625.4 135.2,626.0 135.7,625.8 136.2,625.4 136.7,625.0 137.2,624.9 137.7,625.0 138.2,625.2 138.7,625.3 139.2,626.9 139.7,625.7 140.2,625.4 140.7,625.2 141.2,625.2 141.7,625.2 142.2,625.3 142.7,625.1 143.2,625.4 143.7,625.2 144.2,625.4 144.7,625.0 145.2,625.2 145.7,625.3 146.2,625.2 146.7,625.3 147.2,625.2 147.7,625.2 148.2,625.0 148.7,625.1 149.2,624.9 149.7,625.2 150.2,625.2 150.7,625.1 151.2,625.0 151.7,625.1 152.2,625.4 152.7,625.3 153.2,625.1 153.7,625.3 154.2,624.9 154.7,624.9 155.2,625.0 155.7,625.0 156.2,625.0 156.7,625.1 157.2,625.4 157.7,625.0 158.2,625.1 158.7,625.1 159.2,625.0 159.7,625.1 160.2,625.2 160.7,624.9 161.2,625.0 161.7,625.0 162.2,625.0 162.7,624.8 163.2,624.8 163.7,624.7 164.2,625.0 164.7,625.0 165.2,625.0 165.7,624.7 166.2,624.9 166.7,624.9 167.2,624.8 167.7,624.8 168.2,625.0 168.7,625.0 169.2,624.9 169.7,625.0 170.2,624.8 170.7,624.9 171.2,624.9 171.7,624.9 172.2,624.9 172.7,624.8 173.2,624.8 173.7,624.8 174.2,625.1 174.7,624.9 175.2,624.9 175.7,625.1 176.2,625.0 176.7,624.6 177.2,624.9 177.7,624.9 178.2,625.0 178.7,624.9 179.2,624.9 179.7,624.6 180.2,624.7 180.7,624.8 181.2,624.8 181.7,624.6 182.2,624.7 182.7,624.7 183.2,624.7 183.7,624.8 184.2,624.7 184.7,624.6 185.2,624.8 185.7,624.9 186.2,624.7 186.7,624.8 187.2,624.7 187.7,624.7 188.2,624.7 188.7,624.6 189.2,624.7 189.7,624.8 190.2,624.5 190.7,624.9 191.2,624.9 191.7,624.8 192.2,624.8 192.7,624.7 193.2,624.5 193.7,624.5 194.2,624.5 194.7,624.6 195.2,624.6 195.7,624.6 196.2,624.3 196.7,624.8 197.2,624.8 197.7,624.5 198.2,624.6 198.7,624.6 199.2,624.5 199.7,624.5 200.2,624.5 200.7,624.4 201.2,624.5 201.7,624.4 202.2,624.4 202.7,624.3 203.2,624.3 203.7,624.3 204.2,624.4 204.7,624.1 205.2,624.3 205.7,624.3 206.2,624.3 206.7,624.1 207.2,624.1 207.7,624.1 208.2,624.2 208.7,624.3 209.2,624.0 209.7,623.9 210.2,624.0 210.7,624.0 211.2,623.8 211.7,623.8 212.2,623.9 212.7,623.9 213.2,623.7 213.7,623.7 214.2,623.8 214.7,623.6 215.2,623.8 215.7,623.8 216.2,623.7 216.7,623.5 217.2,623.6 217.7,623.6 218.2,623.6 218.7,623.5 219.2,623.7 219.7,623.3 220.2,623.5 220.7,623.5 221.2,623.6 221.7,623.3 222.2,623.5 222.7,623.3 223.2,623.4 223.7,623.5 224.2,623.2 224.7,623.3 225.2,623.1 225.7,623.3 226.2,623.3 226.7,623.2 227.2,623.0 227.7,623.2 228.2,623.2 228.7,623.2 229.2,623.1 229.7,622.8 230.2,622.9 230.7,623.1 231.2,622.8 231.7,623.1 232.2,623.1 232.7,623.0 233.2,623.0 233.7,622.8 234.2,622.6 234.7,622.8 235.2,622.7 235.7,622.7 236.2,622.8 236.7,622.6 237.2,622.7 237.7,622.7 238.2,622.6 238.7,622.8 239.2,622.6 239.7,622.5 240.2,622.5 240.7,622.4 241.2,622.6 241.7,622.4 242.2,622.3 242.7,622.3 243.2,622.3 243.7,622.3 244.2,622.4 244.7,622.1 245.2,622.3 245.7,622.2 246.2,622.0 246.7,622.2 247.2,622.1 247.7,622.2 248.2,622.0 248.7,622.1 249.2,621.8 249.7,621.9 250.2,622.1 250.7,622.1 251.2,621.9 251.7,621.8 252.2,622.0 252.7,621.6 253.2,621.7 253.7,621.9 254.2,621.8 254.7,621.6 255.2,621.5 255.7,621.8 256.2,621.6 256.7,621.5 257.2,621.6 257.7,621.6 258.2,621.2 258.7,621.6 259.2,621.5 259.7,621.2 260.2,621.5 260.7,621.1 261.2,621.5 261.7,621.3 262.2,621.5 262.7,621.2 263.2,621.2 263.7,621.3 264.2,621.1 264.7,621.0 265.2,621.0 265.7,621.0 266.2,620.9 266.7,621.1 267.2,621.0 267.7,620.9 268.2,621.1 268.7,620.8 269.2,621.0 269.7,620.8 270.2,620.9 270.7,620.5 271.2,620.8 271.7,620.7 272.2,620.6 272.7,620.6 273.2,620.6 273.7,620.5 274.2,620.3 274.7,620.4 275.2,620.4 275.7,620.4 276.2,620.3 276.7,620.4 277.2,620.5 277.7,620.3 278.2,620.2 278.7,620.4 279.2,620.4 279.7,620.3 280.2,620.3 280.7,620.1 281.2,620.1 281.7,620.2 282.2,620.0 282.7,620.0 283.2,620.1 283.7,620.0 284.2,619.9 284.7,620.0 285.2,619.9 285.7,619.9 286.2,620.0 286.7,619.9 287.2,619.9 287.7,619.6 288.2,619.6 288.7,619.6 289.2,619.7 289.7,619.8 290.2,619.4 290.7,619.6 291.2,619.4 291.7,619.4 292.2,619.4 292.7,619.5 293.2,619.4 293.7,619.5 294.2,619.2 294.7,619.4 295.2,619.4 295.7,619.3 296.2,619.3 296.7,619.1 297.2,619.0 297.7,619.1 298.2,619.0 298.7,619.4 299.2,619.0 299.7,619.2 300.2,619.0 300.7,619.0 301.2,619.0 301.7,618.8 302.2,619.0 302.7,618.9 303.2,618.6 303.7,618.8 304.2,618.8 304.7,618.7 305.2,618.9 305.7,618.6 306.2,618.7 306.7,618.7 307.2,618.4 307.7,618.6 308.2,618.3 308.7,618.3 309.2,618.5 309.7,618.2 310.2,618.3 310.7,618.1 311.2,618.3 311.7,618.1 312.2,618.2 312.7,618.0 313.2,618.2 313.7,618.1 314.2,618.1 314.7,618.0 315.2,618.0 315.7,617.8 316.2,617.6 316.7,617.9 317.2,617.8 317.7,617.8 318.2,617.9 318.7,617.5 319.2,617.7 319.7,617.6 320.2,617.6 320.7,617.7 321.2,617.6 321.7,617.5 322.2,617.4 322.7,617.6 323.2,617.4 323.7,617.5 324.2,617.5 324.7,617.2 325.2,617.2 325.7,617.3 326.2,617.3 326.7,617.4 327.2,617.3 327.7,617.3 328.2,617.1 328.7,617.1 329.2,617.2 329.7,617.0 330.2,617.2 330.7,616.8 331.2,617.1 331.7,616.9 332.2,616.7 332.7,617.0 333.2,616.9 333.7,616.8 334.2,616.6 334.7,616.7 335.2,616.9 335.7,616.6 336.2,616.2 336.7,616.5 337.2,616.4 337.7,616.5 338.2,616.5 338.7,616.4 339.2,616.4 339.7,616.5 340.2,616.2 340.7,616.6 341.2,616.2 341.7,616.1 342.2,616.3 342.7,616.2 343.2,615.9 343.7,616.1 344.2,615.7 344.7,615.8 345.2,616.0 345.7,615.8 346.2,615.6 346.7,615.7 347.2,615.7 347.7,615.6 348.2,615.3 348.7,615.4 349.2,615.5 349.7,615.5 350.2,615.5 350.7,615.2 351.2,615.1 351.7,615.1 352.2,615.2 352.7,614.9 353.2,615.1 353.7,614.6 354.2,615.0 354.7,614.8 355.2,614.8 355.7,614.8 356.2,614.5 356.7,614.6 357.2,614.6 357.7,614.6 358.2,614.3 358.7,614.3 359.2,614.1 359.7,614.6 360.2,614.2 360.7,614.2 361.2,614.0 361.7,614.2 362.2,614.0 362.7,614.2 363.2,614.0 363.7,613.9 364.2,613.9 364.7,613.6 365.2,613.7 365.7,613.6 366.2,613.5 366.7,613.6 367.2,613.5 367.7,613.6 368.2,613.0 368.7,613.3 369.2,613.2 369.7,613.2 370.2,613.2 370.7,613.2 371.2,613.1 371.7,613.0 372.2,613.0 372.7,613.0 373.2,612.6 373.7,612.8 374.2,612.6 374.7,612.6 375.2,612.7 375.7,612.6 376.2,612.6 376.7,612.4 377.2,612.4 377.7,612.3 378.2,612.4 378.7,612.4 379.2,612.4 379.7,612.3 380.2,612.0 380.7,612.0 381.2,611.9 381.7,612.0 382.2,612.1 382.7,611.9 383.2,611.5 383.7,611.6 384.2,611.5 384.7,611.7 385.2,611.6 385.7,611.6 386.2,611.7 386.7,611.3 387.2,611.3 387.7,611.5 388.2,611.3 388.7,611.1 389.2,610.9 389.7,610.9 390.2,610.8 390.7,611.0 391.2,610.9 391.7,611.0 392.2,610.8 392.7,610.7 393.2,610.6 393.7,610.9 394.2,610.4 394.7,610.6 395.2,610.5 395.7,610.5 396.2,610.4 396.7,610.4 397.2,610.4 397.7,610.2 398.2,610.1 398.7,610.1 399.2,610.0 399.7,610.0 400.2,609.9 400.7,609.9 401.2,610.0 401.7,609.9 402.2,609.7 402.7,609.7 403.2,609.6 403.7,609.6 404.2,609.5 404.7,609.5 405.2,609.3 405.7,609.2 406.2,609.3 406.7,609.3 407.2,609.2 407.7,609.1 408.2,609.0 408.7,608.9 409.2,608.7 409.7,608.9 410.2,608.8 410.7,608.6 411.2,608.5 411.7,608.7 412.2,608.3 412.7,608.7 413.2,608.5 413.7,608.6 414.2,608.2 414.7,608.2 415.2,608.1 415.7,608.1 416.2,608.0 416.7,607.9 417.2,608.0 417.7,607.7 418.2,607.7 418.7,607.8 419.2,607.6 419.7,607.5 420.2,607.6 420.7,607.4 421.2,607.2 421.7,607.3 422.2,607.2 422.7,607.4 423.2,607.0 423.7,607.2 424.2,606.9 424.7,606.9 425.2,606.9 425.7,606.9 426.2,606.9 426.7,606.9 427.2,606.6 427.7,606.8 428.2,606.7 428.7,606.6 429.2,606.3 429.7,606.5 430.2,606.3 430.7,606.3 431.2,606.1 431.7,606.2 432.2,606.2 432.7,606.1 433.2,605.9 433.7,606.0 434.2,606.0 434.7,605.6 435.2,605.8 435.7,605.3 436.2,605.4 436.7,605.3 437.2,605.2 437.7,604.9 438.2,604.7 438.7,604.5 439.2,604.3 439.7,604.4 440.2,604.1 440.7,603.9 441.2,603.9 441.7,603.6 442.2,603.5 442.7,603.3 443.2,603.4 443.7,603.3 444.2,602.9 444.7,602.6 445.2,602.6 445.7,602.4 446.2,602.2 446.7,602.0 447.2,601.7 447.7,601.6 448.2,601.4 448.7,601.1 449.2,600.8 449.7,600.6 450.2,600.5 450.7,600.1 451.2,600.0 451.7,599.7 452.2,599.4 452.7,599.4 453.2,599.1 453.7,598.9 454.2,598.8 454.7,598.3 455.2,598.2 455.7,598.0 456.2,597.9 456.7,597.4 457.2,597.4 457.7,597.1 458.2,597.1 458.7,596.8 459.2,596.5 459.7,596.5 460.2,596.0 460.7,595.7 461.2,595.5 461.7,595.2 462.2,595.1 462.7,594.7 463.2,594.7 463.7,594.5 464.2,594.4 464.7,594.0 465.2,594.0 465.7,593.6 466.2,593.5 466.7,593.1 467.2,593.0 467.7,592.8 468.2,592.9 468.7,592.6 469.2,592.3 469.7,592.3 470.2,592.1 470.7,591.8 471.2,591.7 471.7,591.5 472.2,591.3 472.7,591.0 473.2,591.0 473.7,591.0 474.2,590.8 474.7,590.4 475.2,590.2 475.7,590.1 476.2,590.0 476.7,589.8 477.2,589.5 477.7,589.4 478.2,589.2 478.7,589.1 479.2,588.8 479.7,588.5 480.2,588.5 480.7,588.4 481.2,588.0 481.7,587.9 482.2,587.9 482.7,587.6 483.2,587.3 483.7,587.5 484.2,587.2 484.7,587.0 485.2,586.6 485.7,586.7 486.2,586.2 486.7,586.1 487.2,586.1 487.7,586.0 488.2,585.5 488.7,585.4 489.2,585.3 489.7,584.9 490.2,585.0 490.7,584.9 491.2,584.6 491.7,584.6 492.2,584.4 492.7,584.2 493.2,584.1 493.7,584.1 494.2,583.7 494.7,583.6 495.2,583.4 495.7,583.4 496.2,583.1 496.7,583.1 497.2,582.9 497.7,582.7 498.2,582.8 498.7,582.4 499.2,582.4 499.7,582.2 500.2,582.1 500.7,581.8 501.2,581.8 501.7,581.6 502.2,581.3 502.7,581.3 503.2,581.1 503.7,580.9 504.2,580.9 504.7,580.6 505.2,580.3 505.7,580.2 506.2,580.2 506.7,580.0 507.2,579.9 507.7,579.8 508.2,579.8 508.7,579.5 509.2,579.4 509.7,579.1 510.2,579.1 510.7,579.0 511.2,578.9 511.7,578.4 512.2,578.5 512.7,578.5 513.2,578.2 513.7,577.8 514.2,577.8 514.7,577.8 515.2,577.6 515.7,577.3 516.2,577.2 516.7,577.3 517.2,576.9 517.7,577.1 518.2,576.8 518.7,576.7 519.2,576.4 519.7,576.4 520.2,576.4 520.7,576.0 521.2,576.3 521.7,575.8 522.2,575.7 522.7,575.7 523.2,575.6 523.7,575.5 524.2,575.3 524.7,575.2 525.2,575.0 525.7,574.9 526.2,574.5 526.7,574.8 527.2,574.6 527.7,574.5 528.2,574.3 528.7,574.2 529.2,574.1 529.7,573.9 530.2,574.0 530.7,573.5 531.2,573.6 531.7,573.3 532.2,573.3 532.7,573.4 533.2,573.0 533.7,573.0 534.2,572.8 534.7,572.8 535.2,572.5 535.7,572.3 536.2,572.4 536.7,572.2 537.2,572.1 537.7,572.1 538.2,571.7 538.7,571.7 539.2,571.6 539.7,571.5 540.2,571.3 540.7,571.3 541.2,571.4 541.7,570.9 542.2,571.1 542.7,570.5 543.2,570.7 543.7,570.4 544.2,570.3 544.7,570.2 545.2,570.0 545.7,569.8 546.2,569.8 546.7,569.8 547.2,569.7 547.7,569.4 548.2,569.2 548.7,569.1 549.2,568.9 549.7,569.1 550.2,568.9 550.7,568.7 551.2,568.5 551.7,568.3 552.2,568.4 552.7,568.2 553.2,567.9 553.7,568.0 554.2,567.6 554.7,567.7 555.2,567.4 555.7,567.3 556.2,567.3 556.7,567.2 557.2,567.1 557.7,566.8 558.2,566.9 558.7,566.8 559.2,566.5 559.7,566.4 560.2,566.0 560.7,566.1 561.2,565.7 561.7,565.9 562.2,565.8 562.7,565.9 563.2,565.7 563.7,565.5 564.2,565.1 564.7,565.0 565.2,564.9 565.7,564.9 566.2,564.2 566.7,564.7 567.2,564.0 567.7,564.1 568.2,564.1 568.7,563.8 569.2,564.2 569.7,563.7 570.2,563.9 570.7,563.7 571.2,563.1 571.7,563.2 572.2,563.3 572.7,562.8 573.2,562.7 573.7,562.4 574.2,562.4 574.7,562.2 575.2,562.2 575.7,562.3 576.2,562.2 576.7,561.8 577.2,561.6 577.7,561.7 578.2,561.2 578.7,560.9 579.2,561.3 579.7,560.6 580.2,561.0 580.7,560.3 581.2,561.0 581.7,560.0 582.2,560.4 582.7,560.5 583.2,559.6 583.7,560.2 584.2,559.4 584.7,559.0 585.2,559.5 585.7,559.4 586.2,559.0 586.7,558.2 587.2,558.8 587.7,558.6 588.2,558.4 588.7,558.3 589.2,557.7 589.7,557.9 590.2,558.5 590.7,558.3 591.2,557.6 591.7,557.4 592.2,557.6 592.7,557.7 593.2,557.5 593.7,556.8 594.2,557.1 594.7,557.0 595.2,557.3 595.7,557.1 596.2,556.8 596.7,556.9 597.2,556.3 597.7,556.8 598.2,556.1 598.7,556.2 599.2,556.2 599.7,555.6 600.2,555.5 600.7,555.1 601.2,555.6 601.7,555.4 602.2,555.2 602.7,555.4 603.2,554.5 603.7,555.0 604.2,554.9 604.7,554.7 605.2,554.9 605.7,555.1 606.2,554.3 606.7,554.0 607.2,554.0 607.7,554.1 608.2,554.2 608.7,553.6 609.2,554.1 609.7,553.3 610.2,553.8 610.7,553.6 611.2,553.5 611.7,553.9 612.2,553.0 612.7,553.0 613.2,553.0 613.7,553.1 614.2,552.3 614.7,552.7 615.2,552.2 615.7,552.5 616.2,552.6 616.7,552.1 617.2,551.9 617.7,551.9 618.2,550.8 618.7,551.8 619.2,551.6 619.7,551.4 620.2,551.1 620.7,550.8 621.2,550.9 621.7,551.2 622.2,550.7 622.7,551.0 623.2,549.6 623.7,550.2 624.2,550.3 624.7,550.1 625.2,549.4 625.7,549.6 626.2,550.1 626.7,549.2 627.2,549.1 627.7,549.0 628.2,549.0 628.7,549.3 629.2,549.2 629.7,548.2 630.2,549.2 630.7,548.4 631.2,548.3 631.7,548.9 632.2,548.2 632.7,547.7 633.2,547.8 633.7,547.6 634.2,547.4 634.7,547.5 635.2,547.8 635.7,547.5 636.2,546.8 636.7,548.1 637.2,546.6 637.7,546.9 638.2,546.8 638.7,546.9 639.2,546.4 639.7,546.5 640.2,547.0 640.7,546.2 641.2,545.7 641.7,546.2 642.2,545.7 642.7,545.8 643.2,545.9 643.7,545.9 644.2,545.6 644.7,545.9 645.2,545.4 645.7,545.0 646.2,545.7 646.7,545.1 647.2,545.6 647.7,544.9 648.2,545.3 648.7,545.1 649.2,543.9 649.7,544.3 650.2,544.3 650.7,545.2 651.2,543.9 651.7,544.9 652.2,544.8 652.7,544.6 653.2,544.5 653.7,544.0 654.2,544.1 654.7,544.1 655.2,544.1 655.7,544.2 656.2,543.8 656.7,543.5 657.2,543.5 657.7,543.8 658.2,542.9 658.7,543.0 659.2,543.2 659.7,543.1 660.2,543.1 660.7,542.1 661.2,542.9 661.7,542.9 662.2,543.2 662.7,542.1 663.2,542.7 663.7,542.9 664.2,542.8 664.7,543.0 665.2,542.9 665.7,542.0 666.2,542.6 666.7,542.2 667.2,541.9 667.7,542.8 668.2,541.9 668.7,541.7 669.2,541.8 669.7,541.6 670.2,542.3 670.7,542.0 671.2,542.3 671.7,541.9 672.2,541.4 672.7,542.0 673.2,541.3 673.7,541.3 674.2,541.3 674.7,541.4 675.2,541.8 675.7,541.0 676.2,541.3 676.7,541.1 677.2,540.5 677.7,540.5 678.2,540.8 678.7,541.0 679.2,540.9 679.7,540.9 680.2,540.7 680.7,540.4 681.2,540.7 681.7,540.1 682.2,539.9 682.7,540.2 683.2,539.7 683.7,540.0 684.2,539.9 684.7,539.9 685.2,540.1 685.7,539.7 686.2,539.8 686.7,539.2 687.2,539.9 687.7,539.4 688.2,539.9 688.7,538.5 689.2,539.3 689.7,539.6 690.2,538.4 690.7,539.3 691.2,539.4 691.7,539.4 692.2,538.6 692.7,539.3 693.2,539.2 693.7,538.7 694.2,539.4 694.7,539.0 695.2,539.0 695.7,538.7 696.2,539.1 696.7,538.9 697.2,539.3 697.7,538.9 698.2,538.4 698.7,538.5 699.2,539.0 699.7,538.4 700.2,538.6 700.7,538.7 701.2,538.3 701.7,537.3 702.2,538.3 702.7,538.3 703.2,538.2 703.7,537.8 704.2,538.6 704.7,538.0 705.2,537.7 705.7,537.6 706.2,538.0 706.7,537.3 707.2,537.3 707.7,538.6 708.2,538.3 708.7,538.1 709.2,538.2 709.7,537.8 710.2,536.7 710.7,538.0 711.2,537.9 711.7,537.6 712.2,536.4 712.7,537.8 713.2,537.8 713.7,536.9 714.2,537.1 714.7,537.4 715.2,537.0 715.7,537.5 716.2,537.1 716.7,537.4 717.2,537.1 717.7,536.4 718.2,536.6 718.7,538.6 719.2,537.3 719.7,537.8 720.2,537.7 720.7,538.0 721.2,537.5 721.7,536.9 722.2,537.2 722.7,536.3 723.2,537.2 723.7,537.7 724.2,536.3 724.7,537.4 725.2,537.7 725.7,538.0 726.2,536.9 726.7,537.1 727.2,536.5 727.7,536.9 728.2,537.7 728.7,538.5 729.2,536.9 729.7,538.2 730.2,537.6 730.7,537.0 731.2,538.1 731.7,535.6 732.2,536.7 732.7,536.6 733.2,537.4 733.7,537.0 734.2,537.1 734.7,535.8 735.2,536.1 735.7,536.1 736.2,535.5 736.7,535.2 737.2,534.7 737.7,534.4 738.2,533.9 738.7,535.3 739.2,533.9 739.7,532.9 740.2,533.9 740.7,533.5 741.2,533.5 741.7,534.1 742.2,533.0 742.7,532.7 743.2,532.3 743.7,532.5 744.2,532.1 744.7,532.2 745.2,533.5 745.7,531.9 746.2,531.1 746.7,532.4 747.2,531.6 747.7,531.4 748.2,531.2 748.7,531.1 749.2,530.8 749.7,531.0 750.2,530.6 750.7,530.6 751.2,529.5 751.7,529.6 752.2,529.0 752.7,529.8 753.2,529.6 753.7,528.9 754.2,529.4 754.7,530.4 755.2,529.6 755.7,528.3 756.2,528.7 756.7,529.0 757.2,528.6 757.7,528.8 758.2,529.1 758.7,528.6 759.2,527.8 759.7,528.7 760.2,528.2 760.7,528.2 761.2,527.8 761.7,527.3 762.2,527.3 762.7,527.7 763.2,527.2 763.7,526.3 764.2,528.3 764.7,527.0 765.2,527.1 765.7,527.7 766.2,526.1 766.7,528.0 767.2,526.8 767.7,527.5 768.2,526.8 768.7,527.2 769.2,527.0 769.7,526.9 770.2,525.8 770.7,526.0 771.2,526.7 771.7,527.4 772.2,526.2 772.7,526.8 773.2,526.5 773.7,526.6 774.2,526.8 774.7,525.4 775.2,526.3 775.7,526.0 776.2,525.8 776.7,525.4 777.2,525.4 777.7,525.2 778.2,525.2 778.7,527.2 779.2,526.8 779.7,525.8 780.2,526.3 780.7,525.3 781.2,524.3 781.7,524.9 782.2,526.0 782.7,526.7 783.2,525.9 783.7,525.4 784.2,525.8 784.7,525.4 785.2,525.2 785.7,525.8 786.2,525.7 786.7,525.5 787.2,525.5 787.7,525.5 788.2,526.1 788.7,526.8 789.2,525.9 789.7,527.3 790.2,525.1 790.7,526.2 791.2,525.4 791.7,526.0 792.2,526.2 792.7,526.4 793.2,526.8 793.7,525.8 794.2,525.4 794.7,526.0 795.2,526.3 795.7,525.8 796.2,526.7 796.7,527.2 797.2,525.4 797.7,526.4 798.2,526.8 798.7,525.1 799.2,526.4 799.7,526.1 800.2,525.4 800.7,527.0 801.2,526.4 801.7,526.0 802.2,526.6 802.7,526.7 803.2,526.7 803.7,526.5 804.2,526.3 804.7,525.3 805.2,525.7 805.7,525.9 806.2,524.1 806.7,527.0 807.2,525.4 807.7,524.9 808.2,524.4 808.7,525.6 809.2,525.4 809.7,524.9 810.2,524.9 810.7,524.6 811.2,524.6 811.7,524.9 812.2,524.5 812.7,525.3 813.2,524.7 813.7,524.8 814.2,524.9 814.7,525.3 815.2,524.9 815.7,524.6 816.2,524.2 816.7,523.8 817.2,524.0 817.7,524.5 818.2,524.2 818.7,523.7 819.2,523.1 819.7,522.9 820.2,524.0 820.7,524.6 821.2,524.3 821.7,523.3 822.2,524.1 822.7,524.5 823.2,523.8 823.7,524.7 824.2,524.5 824.7,524.2 825.2,524.0 825.7,525.4 826.2,525.2 826.7,524.5 827.2,524.5 827.7,525.8 828.2,525.7 828.7,525.3 829.2,526.6 829.7,525.5 830.2,525.1 830.7,526.6 831.2,525.9 831.7,526.3 832.2,526.2 832.7,525.7 833.2,525.7 833.7,526.5 834.2,527.6 834.7,526.2 835.2,527.8 835.7,527.2 836.2,526.5 836.7,527.5 837.2,527.8 837.7,526.9 838.2,526.3 838.7,528.0 839.2,527.2 839.7,528.3 840.2,526.9 840.7,528.1 841.2,527.8 841.7,527.3 842.2,528.1 842.7,528.3 843.2,527.8 843.7,527.3 844.2,528.2 844.7,526.9 845.2,528.3 845.7,528.3 846.2,529.0 846.7,528.5 847.2,528.1 847.7,528.0 848.2,527.8 848.7,526.9 849.2,528.7 849.7,528.0 850.2,527.4 850.7,526.8 851.2,528.5 851.7,527.9 852.2,526.7 852.7,527.9 853.2,528.8 853.7,527.5 854.2,527.8 854.7,527.2 855.2,527.1 855.7,528.2 856.2,529.6 856.7,527.6 857.2,527.4 857.7,528.0 858.2,527.3 858.7,528.0 859.2,528.1 859.7,526.8 860.2,526.8 860.7,527.5 861.2,528.1 861.7,527.7 862.2,528.3 862.7,526.6 863.2,527.8 863.7,527.1 864.2,527.6 864.7,527.7 865.2,527.1 865.7,529.1 866.2,530.0 866.7,532.5 867.2,533.2 867.7,535.0 868.2,536.9 868.7,537.9 869.2,540.6 869.7,540.8 870.2,543.3 870.7,544.4 871.2,544.9 871.7,547.0 872.2,548.0 872.7,549.8 873.2,551.3 873.7,554.2 874.2,553.9 874.7,556.4 875.2,556.7 875.7,556.6 876.2,557.0 876.7,559.6 877.2,558.1 877.7,560.4 878.2,561.0 878.7,560.5 879.2,559.8 879.7,559.5 880.2,559.5 880.7,558.7 881.2,557.7 881.7,557.0 882.2,557.2 882.7,555.2 883.2,555.0 883.7,553.2 884.2,552.3 884.7,550.7 885.2,550.3 885.7,549.8 886.2,548.3 886.7,546.5 887.2,546.1 887.7,544.3 888.2,543.6 888.7,542.3 889.2,541.3 889.7,538.1 890.2,538.0 890.7,538.5 891.2,536.8 891.7,537.5 892.2,534.7 892.7,533.5 893.2,534.0 893.7,532.3 894.2,532.3 894.7,530.3 895.2,528.8 895.7,528.4 896.2,526.4 896.7,525.7 897.2,524.7 897.7,524.0 898.2,523.8 898.7,522.0 899.2,521.7 899.7,520.2 900.2,520.1 900.7,517.1 901.2,517.7 901.7,517.0 902.2,515.3 902.7,515.8 903.2,514.8 903.7,514.9 904.2,514.1 904.7,513.4 905.2,512.3 905.7,511.0 906.2,511.1 906.7,510.3 907.2,510.3 907.7,509.2 908.2,511.4 908.7,507.1 909.2,508.8 909.7,506.9 910.2,506.5 910.7,507.0 911.2,505.6 911.7,504.0 912.2,505.0 912.7,503.9 913.2,501.7 913.7,503.3 914.2,501.6 914.7,501.4 915.2,502.0 915.7,501.3 916.2,500.3 916.7,502.2 917.2,500.0 917.7,498.4 918.2,498.8 918.7,497.9 919.2,495.2 919.7,495.3 920.2,495.0 920.7,498.4 921.2,495.6 921.7,495.1 922.2,494.4 922.7,495.8 923.2,494.3 923.7,495.9 924.2,494.5 924.7,495.1 925.2,492.7 925.7,492.9 926.2,491.5 926.7,491.5 927.2,489.1 927.7,490.2 928.2,489.3 928.7,489.3 929.2,491.5 929.7,490.0 930.2,491.1 930.7,490.4 931.2,490.3 931.7,490.2 932.2,487.8 932.7,489.5 933.2,487.7 933.7,487.2 934.2,489.4 934.7,490.6 935.2,485.8 935.7,489.6 936.2,488.1 936.7,485.3 937.2,486.8 937.7,486.8 938.2,486.7 938.7,485.5 939.2,484.0 939.7,486.0 940.2,487.2 940.7,487.1 941.2,486.8 941.7,487.5 942.2,484.0 942.7,485.5 943.2,486.1 943.7,487.1 944.2,485.6 944.7,486.2 945.2,485.5 945.7,488.8 946.2,481.3 946.7,485.0 947.2,489.4 947.7,485.4 948.2,481.6 948.7,485.1 949.2,482.2 949.7,483.5 950.2,484.9 950.7,487.4 951.2,484.9 951.7,485.0 952.2,485.5 952.7,483.7 953.2,481.5 953.7,482.7 954.2,483.3 954.7,481.9 955.2,480.9 955.7,481.3 956.2,478.8 956.7,479.5 957.2,481.1 957.7,480.3 958.2,480.9 958.7,483.5 959.2,481.0 959.7,480.1 960.2,477.5 960.7,477.4 961.2,480.3 961.7,477.4 962.2,479.9 962.7,476.5 963.2,478.9 963.7,478.2 964.2,480.3 964.7,477.1 965.2,476.9 965.7,478.0 966.2,477.4 966.7,480.8 967.2,476.2 967.7,475.4 968.2,475.6 968.7,477.2 969.2,476.5 969.7,477.3 970.2,472.3 970.7,481.1 971.2,479.4 971.7,474.7 972.2,471.7 972.7,474.7 973.2,475.1 973.7,468.5 974.2,473.7 974.7,469.9 975.2,474.4 975.7,476.5 976.2,475.4 976.7,468.8" fill="none" stroke="#fff" stroke-width="1" shape-rendering="crispEdges"/></svg>
<span class="t" style="left:22.80px;top:7px;font-size:11px;color:#fff;font-weight:bold;-webkit-text-stroke-width:0.12px;letter-spacing:0.251px;">Photon Control - SpecSoft</span>
<span class="t" style="left:11.00px;top:28px;font-size:11px;color:#000;letter-spacing:-0.184px;">Spectrometer</span>
<span class="t" style="left:87.50px;top:28px;font-size:11px;color:#000;letter-spacing:-0.715px;">View</span>
<span class="t" style="left:121.50px;top:28px;font-size:11px;color:#000;letter-spacing:-0.267px;">Data Logging</span>
<span class="t" style="left:197.00px;top:28px;font-size:11px;color:#000;letter-spacing:-0.119px;">Configuration</span>
<span class="t" style="left:273.50px;top:28px;font-size:11px;color:#000;letter-spacing:-0.708px;">Help</span>
<span class="t" style="left:48.00px;top:55px;font-size:11px;color:#000;letter-spacing:-0.392px;">Model number</span>
<span class="t" style="left:159.50px;top:55px;font-size:11px;color:#000;letter-spacing:-0.415px;">Serial number</span>
<span class="t" style="left:48.00px;top:73px;font-size:11px;color:#fff;letter-spacing:-0.600px;">SPM-002-CN</span>
<span class="t" style="left:159.50px;top:73px;font-size:11px;color:#fff;letter-spacing:-0.089px;">11003002</span>
<span class="t" style="left:66.00px;top:130px;font-size:11px;color:#000;letter-spacing:-0.086px;">Refresh</span>
<span class="t" style="left:351.00px;top:51px;font-size:11px;color:#000;font-weight:bold;-webkit-text-stroke-width:0.12px;letter-spacing:0.392px;">Exposure and averaging</span>
<span class="t" style="left:324.00px;top:76px;font-size:11px;color:#000;letter-spacing:-0.210px;">Exposure</span>
<span class="t" style="left:379.00px;top:74px;font-size:11px;color:#000;">2</span>
<span class="t" style="left:422.60px;top:76px;font-size:11px;color:#000;letter-spacing:-0.800px;">ms</span>
<span class="t" style="left:320.80px;top:102px;font-size:11px;color:#000;letter-spacing:-0.142px;">Averaging</span>
<span class="t" style="left:379.00px;top:100px;font-size:11px;color:#000;">10</span>
<span class="t" style="left:422.60px;top:102px;font-size:11px;color:#000;letter-spacing:-0.316px;">acquisitions</span>
<span class="t" style="left:336.00px;top:128px;font-size:11px;color:#000;letter-spacing:-0.247px;">Boxcar</span>
<span class="t" style="left:379.00px;top:126px;font-size:11px;color:#000;">0</span>
<span class="t" style="left:422.60px;top:128px;font-size:11px;color:#000;letter-spacing:-0.425px;">pixels</span>
<span class="t" style="left:492.40px;top:76px;font-size:11px;color:#000;letter-spacing:-0.800px;">Tune</span>
<span class="t" style="left:580.55px;top:51px;font-size:11px;color:#000;font-weight:bold;-webkit-text-stroke-width:0.12px;letter-spacing:0.272px;">Cursor details</span>
<span class="t" style="left:604.50px;top:79px;font-size:11px;color:#000;">1983</span>
<span class="t" style="left:604.50px;top:102px;font-size:11px;color:#000;">1000</span>
<span class="t" style="left:604.50px;top:125px;font-size:11px;color:#000;">191.44 %</span>
<span class="t" style="left:661.00px;top:79px;font-size:11px;color:#000;letter-spacing:-0.225px;">pixels</span>
<span class="t" style="left:661.00px;top:104px;font-size:11px;color:#000;letter-spacing:-0.800px;">nm</span>
<span class="t" style="left:961.60px;top:156px;font-size:11px;color:#000;letter-spacing:0.017px;">saturated</span>
<span class="t" style="left:18.80px;top:158px;font-size:11px;color:#000;font-weight:bold;-webkit-text-stroke-width:0.12px;letter-spacing:0.443px;">Spectrums</span>
<span class="t" style="left:100.00px;top:158px;font-size:11px;color:#000;font-weight:bold;-webkit-text-stroke-width:0.12px;letter-spacing:0.358px;">Radiance and luminance</span>
<span class="t" style="left:343.00px;top:158px;font-size:11px;color:#000;font-weight:bold;-webkit-text-stroke-width:0.12px;letter-spacing:0.454px;">Concentration</span>
<span class="t" style="left:443.00px;top:158px;font-size:11px;color:#000;font-weight:bold;-webkit-text-stroke-width:0.12px;letter-spacing:0.435px;">Plasma</span>
<span class="t" style="left:504.50px;top:158px;font-size:11px;color:#000;font-weight:bold;-webkit-text-stroke-width:0.12px;letter-spacing:0.021px;">Logging</span>
<span class="t" style="left:568.00px;top:158px;font-size:11px;color:#000;font-weight:bold;-webkit-text-stroke-width:0.12px;letter-spacing:0.325px;">Configuration</span>
<span class="t" style="left:254.70px;top:156px;font-size:11px;color:#000;font-weight:bold;-webkit-text-stroke-width:0.12px;letter-spacing:0.476px;">Colorimetry</span>
<span class="t" style="left:451.00px;top:189px;font-size:11px;color:#000;font-weight:bold;-webkit-text-stroke-width:0.12px;letter-spacing:0.323px;">Emission colorimetry</span>
<span class="t" style="left:453.00px;top:429px;font-size:11px;color:#000;font-weight:bold;-webkit-text-stroke-width:0.12px;letter-spacing:0.400px;">Blackbody spectrum</span>
<span class="t" style="left:29.00px;top:219px;font-size:11px;color:#000;letter-spacing:-0.186px;">Luminance reference</span>
<span class="t" style="left:55.50px;top:237px;font-size:11px;color:#000;letter-spacing:-0.305px;">A illuminant</span>
<span class="t" style="left:29.00px;top:260px;font-size:11px;color:#000;letter-spacing:-0.270px;">Color space</span>
<span class="t" style="left:33.70px;top:278px;font-size:11px;color:#000;letter-spacing:-0.154px;">1931 CIE - 2 degree</span>
<span class="t" style="left:29.00px;top:301px;font-size:11px;color:#000;letter-spacing:-0.800px;">RGB scale</span>
<span class="t" style="left:68.30px;top:319px;font-size:11px;color:#000;letter-spacing:-0.800px;">sRGB</span>
<span class="t" style="left:29.00px;top:342px;font-size:11px;color:#000;letter-spacing:-0.067px;">Adaptation</span>
<span class="t" style="left:59.50px;top:360px;font-size:11px;color:#000;letter-spacing:-0.448px;">Von Kries</span>
<span class="t" style="left:245.00px;top:405px;font-size:11px;color:#000;letter-spacing:-0.036px;">Note: L*u*v value is calculated relative to CIE SI D55</span>
<span class="t" style="left:695.80px;top:252px;font-size:11px;color:#000;letter-spacing:-0.103px;">White point</span>
<span class="t" style="left:655.00px;top:279px;font-size:11px;color:#000;">x</span>
<span class="t" style="left:726.00px;top:279px;font-size:11px;color:#000;">y</span>
<span class="t" style="left:669.50px;top:277px;font-size:11px;color:#000;letter-spacing:-0.007px;">0.333</span>
<span class="t" style="left:741.00px;top:276px;font-size:11px;color:#000;letter-spacing:-0.007px;">0.333</span>
<span class="t" style="left:604.50px;top:304px;font-size:11px;color:#000;letter-spacing:-0.113px;">Current</span>
<span class="t" style="left:604.50px;top:325px;font-size:11px;color:#000;letter-spacing:-0.219px;">Reference</span>
<span class="t" style="left:604.50px;top:346px;font-size:11px;color:#000;letter-spacing:-0.103px;">White point</span>
<span class="t" style="left:604.50px;top:367px;font-size:11px;color:#000;letter-spacing:-0.127px;">Dominant wavelength</span>
<span class="t" style="left:604.50px;top:388px;font-size:11px;color:#000;letter-spacing:-0.124px;">Complementary wavelength</span>
<span class="t" style="left:823.00px;top:367px;font-size:11px;color:#000;letter-spacing:-0.146px;">0.0</span>
<span class="t" style="left:823.00px;top:329px;font-size:11px;color:#000;letter-spacing:-0.146px;">0.2</span>
<span class="t" style="left:823.00px;top:292px;font-size:11px;color:#000;letter-spacing:-0.146px;">0.4</span>
<span class="t" style="left:823.00px;top:254px;font-size:11px;color:#000;letter-spacing:-0.146px;">0.6</span>
<span class="t" style="left:823.00px;top:208px;font-size:11px;color:#000;letter-spacing:-0.146px;">0.8</span>
<span class="t" style="left:840.15px;top:381px;font-size:11px;color:#000;letter-spacing:0.104px;">0.0</span>
<span class="t" style="left:879.11px;top:381px;font-size:11px;color:#000;letter-spacing:0.104px;">0.2</span>
<span class="t" style="left:918.07px;top:381px;font-size:11px;color:#000;letter-spacing:0.104px;">0.4</span>
<span class="t" style="left:957.03px;top:381px;font-size:11px;color:#000;letter-spacing:0.104px;">0.6</span>
<span class="t" style="left:984.05px;top:381px;font-size:11px;color:#000;letter-spacing:0.104px;">0.7</span>
<span class="t" style="left:917.85px;top:396px;font-size:11px;color:#000;">x</span>
<span class="t" style="left:37.50px;top:436px;font-size:11px;color:#000;letter-spacing:-0.471px;">mW/nm</span>
<span class="t" style="left:67.59px;top:454px;font-size:11px;color:#000;">0.16</span>
<span class="t" style="left:67.59px;top:475px;font-size:11px;color:#000;">0.14</span>
<span class="t" style="left:67.59px;top:496px;font-size:11px;color:#000;">0.12</span>
<span class="t" style="left:73.71px;top:517px;font-size:11px;color:#000;">0.1</span>
<span class="t" style="left:67.59px;top:538px;font-size:11px;color:#000;">0.08</span>
<span class="t" style="left:67.59px;top:559px;font-size:11px;color:#000;">0.06</span>
<span class="t" style="left:67.59px;top:580px;font-size:11px;color:#000;">0.04</span>
<span class="t" style="left:67.59px;top:600px;font-size:11px;color:#000;">0.02</span>
<span class="t" style="left:82.88px;top:621px;font-size:11px;color:#000;">0</span>
<span class="t" style="left:63.93px;top:642px;font-size:11px;color:#000;">-0.02</span>
<span class="t" style="left:90.20px;top:656px;font-size:11px;color:#000;letter-spacing:-0.577px;">325</span>
<span class="t" style="left:122.20px;top:656px;font-size:11px;color:#000;letter-spacing:-0.577px;">350</span>
<span class="t" style="left:153.20px;top:656px;font-size:11px;color:#000;letter-spacing:-0.577px;">375</span>
<span class="t" style="left:185.20px;top:656px;font-size:11px;color:#000;letter-spacing:-0.577px;">400</span>
<span class="t" style="left:216.20px;top:656px;font-size:11px;color:#000;letter-spacing:-0.577px;">425</span>
<span class="t" style="left:248.20px;top:656px;font-size:11px;color:#000;letter-spacing:-0.577px;">450</span>
<span class="t" style="left:279.20px;top:656px;font-size:11px;color:#000;letter-spacing:-0.577px;">475</span>
<span class="t" style="left:311.20px;top:656px;font-size:11px;color:#000;letter-spacing:-0.577px;">500</span>
<span class="t" style="left:342.20px;top:656px;font-size:11px;color:#000;letter-spacing:-0.577px;">525</span>
<span class="t" style="left:374.20px;top:656px;font-size:11px;color:#000;letter-spacing:-0.577px;">550</span>
<span class="t" style="left:405.20px;top:656px;font-size:11px;color:#000;letter-spacing:-0.577px;">575</span>
<span class="t" style="left:437.20px;top:656px;font-size:11px;color:#000;letter-spacing:-0.577px;">600</span>
<span class="t" style="left:468.20px;top:656px;font-size:11px;color:#000;letter-spacing:-0.577px;">625</span>
<span class="t" style="left:500.20px;top:656px;font-size:11px;color:#000;letter-spacing:-0.577px;">650</span>
<span class="t" style="left:531.20px;top:656px;font-size:11px;color:#000;letter-spacing:-0.577px;">675</span>
<span class="t" style="left:563.20px;top:656px;font-size:11px;color:#000;letter-spacing:-0.577px;">700</span>
<span class="t" style="left:594.20px;top:656px;font-size:11px;color:#000;letter-spacing:-0.577px;">725</span>
<span class="t" style="left:626.20px;top:656px;font-size:11px;color:#000;letter-spacing:-0.577px;">750</span>
<span class="t" style="left:657.20px;top:656px;font-size:11px;color:#000;letter-spacing:-0.577px;">775</span>
<span class="t" style="left:689.20px;top:656px;font-size:11px;color:#000;letter-spacing:-0.577px;">800</span>
<span class="t" style="left:720.20px;top:656px;font-size:11px;color:#000;letter-spacing:-0.577px;">825</span>
<span class="t" style="left:752.20px;top:656px;font-size:11px;color:#000;letter-spacing:-0.577px;">850</span>
<span class="t" style="left:783.20px;top:656px;font-size:11px;color:#000;letter-spacing:-0.577px;">875</span>
<span class="t" style="left:815.20px;top:656px;font-size:11px;color:#000;letter-spacing:-0.577px;">900</span>
<span class="t" style="left:846.20px;top:656px;font-size:11px;color:#000;letter-spacing:-0.577px;">925</span>
<span class="t" style="left:878.20px;top:656px;font-size:11px;color:#000;letter-spacing:-0.577px;">950</span>
<span class="t" style="left:909.20px;top:656px;font-size:11px;color:#000;letter-spacing:-0.577px;">975</span>
<span class="t" style="left:938.40px;top:656px;font-size:11px;color:#000;letter-spacing:-0.557px;">1000</span>
<span class="t" style="left:969.40px;top:656px;font-size:11px;color:#000;letter-spacing:-0.557px;">1025</span>
<span class="t" style="left:497.00px;top:671px;font-size:11px;color:#000;letter-spacing:-0.025px;">Wavelength (nm)</span>
</div>
</body></html>
